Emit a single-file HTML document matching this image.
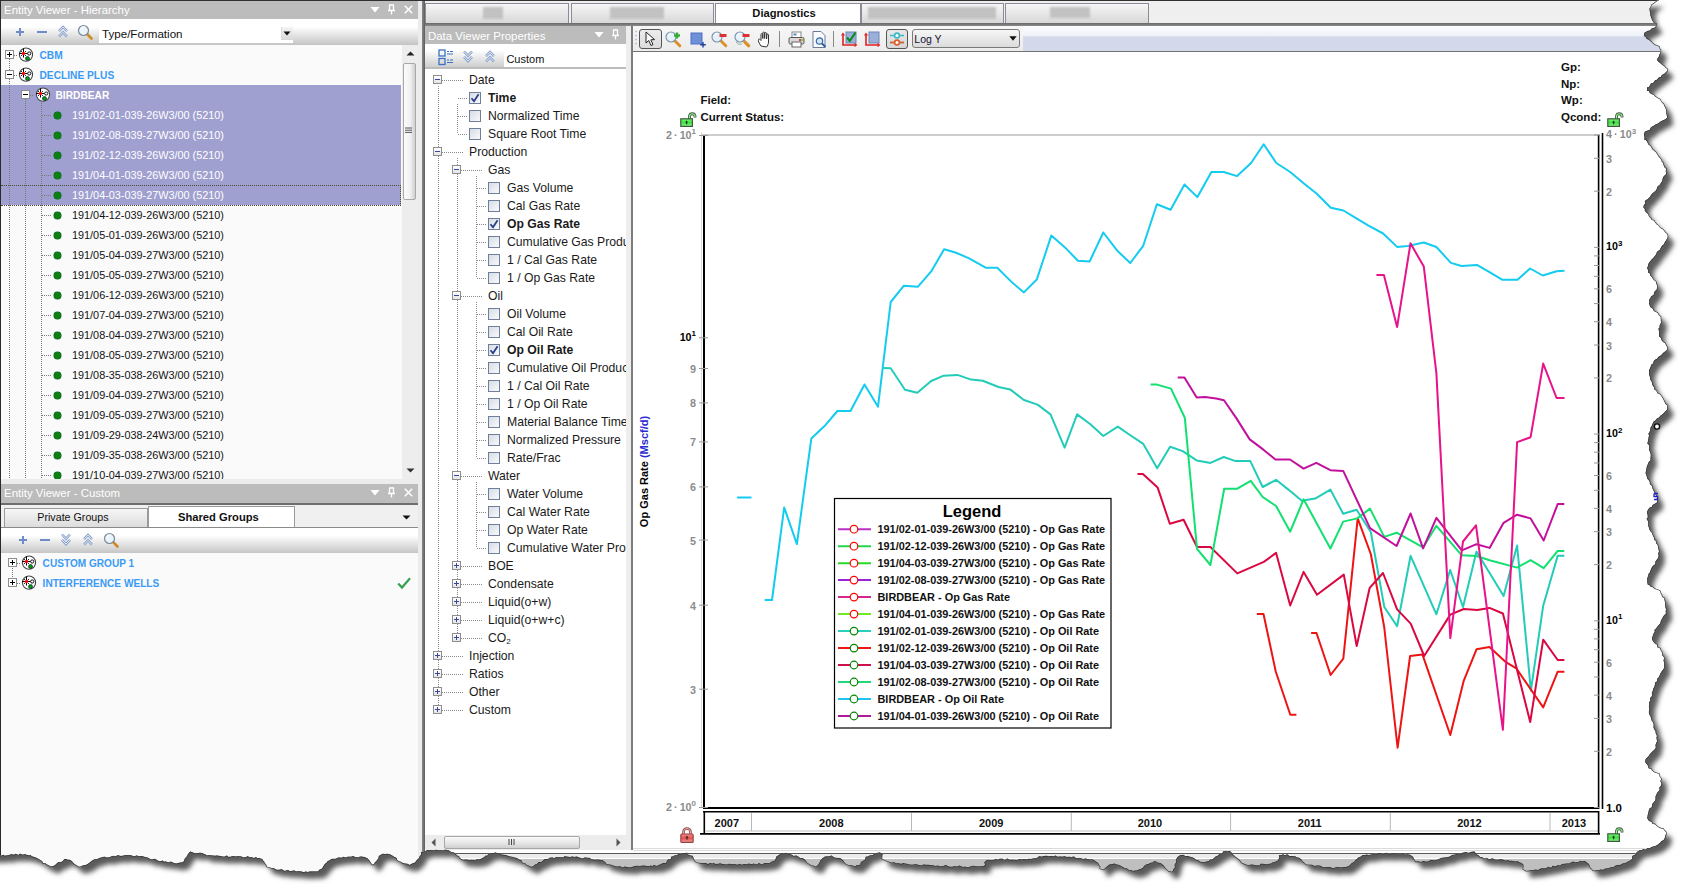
<!DOCTYPE html><html><head><meta charset="utf-8"><style>
html,body{margin:0;padding:0;background:#fff;}
body{width:1690px;height:894px;position:relative;overflow:hidden;font-family:"Liberation Sans", sans-serif;}
.t{position:absolute;white-space:nowrap;font-family:"Liberation Sans", sans-serif;}
svg{overflow:visible}
</style></head><body>
<div style="position:absolute;left:0px;top:0px;width:1690px;height:1px;background:#303030"></div>
<div style="position:absolute;left:0px;top:0px;width:1px;height:894px;background:#2a2a2a"></div>
<div style="position:absolute;left:1px;top:44.5px;width:2px;height:850px;background:linear-gradient(90deg,#606060,#8a8a90)"></div>
<div style="position:absolute;left:1px;top:1px;width:417px;height:17.5px;background:#bcbcbc"></div><div class="t " style="left:4px;top:1.8px;color:#fff;font-size:11.45px;line-height:16px">Entity Viewer - Hierarchy</div><svg style="position:absolute;left:370px;top:6px" width="10" height="8"><path d="M0.5 1 H9.5 L5 6.5Z" fill="#fff"/></svg><svg style="position:absolute;left:387px;top:4px" width="9" height="11"><path d="M2 1h5M2.5 1v5.5M6.5 1v5.5M1 6.5h7M4.5 6.5v4" stroke="#fff" stroke-width="1.3" fill="none"/></svg><svg style="position:absolute;left:404px;top:5px" width="9" height="9"><path d="M0.8 0.8L8.2 8.2M8.2 0.8L0.8 8.2" stroke="#fff" stroke-width="1.5"/></svg>
<div style="position:absolute;left:1px;top:18.5px;width:417px;height:26px;background:linear-gradient(#fff 0,#fff 30%,#c4c4c4 100%)"></div>
<svg style="position:absolute;left:15px;top:27px" width="10" height="10"><path d="M5 1v8M1 5h8" stroke="#6d8cc8" stroke-width="2"/></svg>
<svg style="position:absolute;left:36px;top:27px" width="12" height="10"><path d="M1 5h10" stroke="#6d8cc8" stroke-width="2"/></svg>
<svg style="position:absolute;left:58px;top:25px" width="10" height="14"><path d="M1 6.2 L5 2 L9 6.2 M1 11.6 L5 7.4 L9 11.6" stroke="#86a0cc" stroke-width="2.5" fill="none"/><path d="M1 6.2 L5 2 L9 6.2 M1 11.6 L5 7.4 L9 11.6" stroke="#eef0f4" stroke-width="0.9" fill="none"/></svg>
<svg style="position:absolute;left:77px;top:24px" width="16" height="16" viewBox="0 0 16 16"><path d="M9.5 9.5 L14.5 14.5" stroke="#d08a20" stroke-width="2.6" stroke-linecap="round"/><circle cx="6.5" cy="6.5" r="5" fill="#eaf4fb" stroke="#7a8a9a" stroke-width="1.2"/><path d="M3.8 5.5 A3 3 0 0 1 6.5 3.2" stroke="#fff" stroke-width="1.2" fill="none"/></svg>
<div style="position:absolute;left:99px;top:24px;width:194px;height:19px;background:#fff"></div>
<div class="t " style="left:102px;top:25px;font-size:11.6px;line-height:17px;color:#111">Type/Formation</div>
<div style="position:absolute;left:281px;top:27px;width:11px;height:13px;background:linear-gradient(#f4f4f4,#d8d8d8);border-left:1px solid #ddd"></div>
<svg style="position:absolute;left:283px;top:31px" width="8" height="5"><path d="M0.5 0.5H7.5L4 4.5Z" fill="#111"/></svg>
<div style="position:absolute;left:1px;top:44.5px;width:401px;height:434px;background:#fafafa"></div>
<div style="position:absolute;left:1px;top:85px;width:400px;height:120px;background:#a0a0d0"></div>
<div style="position:absolute;left:1px;top:185px;width:399px;height:18.5px;border:1px dotted #4a4a30;border-left:none"></div>
<div style="position:absolute;left:401.5px;top:44.5px;width:16.5px;height:434px;background:#ededed"></div>
<svg style="position:absolute;left:406px;top:51px" width="9" height="5"><path d="M0.5 4.5L4.5 0.5L8.5 4.5Z" fill="#222"/></svg>
<div style="position:absolute;left:402.5px;top:63.3px;width:13.5px;height:137px;background:linear-gradient(90deg,#fbfbfb 0,#f2f2f2 55%,#cfcfcf 100%);border:1px solid #a8a8a8;border-radius:2px;box-sizing:border-box"></div>
<svg style="position:absolute;left:404px;top:127px" width="9" height="7"><path d="M1 1h7M1 3.2h7M1 5.4h7" stroke="#555" stroke-width="1"/></svg>
<svg style="position:absolute;left:406px;top:468px" width="9" height="5"><path d="M0.5 0.5L4.5 4.5L8.5 0.5Z" fill="#333"/></svg>
<div style="position:absolute;left:418px;top:1px;width:4px;height:893px;background:#ececec"></div>
<div style="position:absolute;left:422px;top:1px;width:3px;height:893px;background:linear-gradient(90deg,#8a8a8a,#5c5c5c)"></div>
<div style="position:absolute;left:9px;top:59px;width:1px;height:24px;background:repeating-linear-gradient(180deg,#7a7a7a 0 1px,transparent 1px 2px)"></div>
<div style="position:absolute;left:9px;top:79px;width:1px;height:400px;background:repeating-linear-gradient(180deg,#7a7a7a 0 1px,transparent 1px 2px)"></div>
<div style="position:absolute;left:25px;top:99px;width:1px;height:380px;background:repeating-linear-gradient(180deg,#7a7a7a 0 1px,transparent 1px 2px)"></div>
<div style="position:absolute;left:41px;top:103px;width:1px;height:376px;background:repeating-linear-gradient(180deg,#7a7a7a 0 1px,transparent 1px 2px)"></div>
<div style="position:absolute;left:5px;top:50.3px;width:7px;height:7px;border:1px solid #8e8e8e;background:#fff"><div style="position:absolute;left:1px;top:3px;width:5px;height:1px;background:#000"></div><div style="position:absolute;left:3px;top:1px;width:1px;height:5px;background:#000"></div></div>
<div style="position:absolute;left:14px;top:54.8px;width:4px;height:1px;background:repeating-linear-gradient(90deg,#7a7a7a 0 1px,transparent 1px 2px)"></div>
<svg style="position:absolute;left:18px;top:47px" width="15" height="15" viewBox="0 0 15 15"><circle cx="8" cy="7.6" r="6.6" fill="#fff" stroke="#444" stroke-width="1.1"/><path d="M5.5 1.5v9M1.2 6.5h8.6" stroke="#000" stroke-width="1"/><path d="M3.5 4.5h0.01M7.5 4.5h0.01M3.5 8.5h0.01M7.5 8.5h0.01" stroke="#000" stroke-width="1.1" stroke-linecap="round"/><circle cx="5.5" cy="6.5" r="1.7" fill="#f00"/><circle cx="11.2" cy="6.5" r="1.6" fill="#fff" stroke="#111" stroke-width="1"/><circle cx="9.5" cy="11.5" r="2" fill="#00a000" stroke="#102040" stroke-width="0.7"/></svg>
<div class="t " style="left:39.5px;top:48.5px;font-size:10.2px;font-weight:bold;color:#3a9af5;line-height:14px">CBM</div>
<div style="position:absolute;left:5px;top:70.3px;width:7px;height:7px;border:1px solid #8e8e8e;background:#fff"><div style="position:absolute;left:1px;top:3px;width:5px;height:1px;background:#000"></div></div>
<div style="position:absolute;left:14px;top:74.8px;width:4px;height:1px;background:repeating-linear-gradient(90deg,#7a7a7a 0 1px,transparent 1px 2px)"></div>
<svg style="position:absolute;left:18px;top:67px" width="15" height="15" viewBox="0 0 15 15"><circle cx="8" cy="7.6" r="6.6" fill="#fff" stroke="#444" stroke-width="1.1"/><path d="M5.5 1.5v9M1.2 6.5h8.6" stroke="#000" stroke-width="1"/><path d="M3.5 4.5h0.01M7.5 4.5h0.01M3.5 8.5h0.01M7.5 8.5h0.01" stroke="#000" stroke-width="1.1" stroke-linecap="round"/><circle cx="5.5" cy="6.5" r="1.7" fill="#f00"/><circle cx="11.2" cy="6.5" r="1.6" fill="#fff" stroke="#111" stroke-width="1"/><circle cx="9.5" cy="11.5" r="2" fill="#00a000" stroke="#102040" stroke-width="0.7"/></svg>
<div class="t " style="left:39.5px;top:68.5px;font-size:10.2px;font-weight:bold;color:#3a9af5;line-height:14px">DECLINE PLUS</div>
<div style="position:absolute;left:21px;top:90.3px;width:7px;height:7px;border:1px solid #8e8e8e;background:#fff"><div style="position:absolute;left:1px;top:3px;width:5px;height:1px;background:#000"></div></div>
<div style="position:absolute;left:30px;top:94.8px;width:4px;height:1px;background:repeating-linear-gradient(90deg,#7a7a7a 0 1px,transparent 1px 2px)"></div>
<svg style="position:absolute;left:35px;top:87px" width="15" height="15" viewBox="0 0 15 15"><circle cx="8" cy="7.6" r="6.6" fill="#fff" stroke="#444" stroke-width="1.1"/><path d="M5.5 1.5v9M1.2 6.5h8.6" stroke="#000" stroke-width="1"/><path d="M3.5 4.5h0.01M7.5 4.5h0.01M3.5 8.5h0.01M7.5 8.5h0.01" stroke="#000" stroke-width="1.1" stroke-linecap="round"/><circle cx="5.5" cy="6.5" r="1.7" fill="#f00"/><circle cx="11.2" cy="6.5" r="1.6" fill="#fff" stroke="#111" stroke-width="1"/><circle cx="9.5" cy="11.5" r="2" fill="#00a000" stroke="#102040" stroke-width="0.7"/></svg>
<div class="t " style="left:55.5px;top:88.5px;font-size:10.2px;font-weight:bold;color:#fff;line-height:14px">BIRDBEAR</div>
<div style="position:absolute;left:42px;top:114.8px;width:10px;height:1px;background:repeating-linear-gradient(90deg,#7a7a7a 0 1px,transparent 1px 2px)"></div>
<div style="position:absolute;left:54px;top:111.8px;width:7px;height:7px;border-radius:50%;background:#0f800f;box-shadow:0 0 0 0.5px #063"></div>
<div class="t " style="left:72px;top:108.3px;font-size:10.85px;color:#fff;line-height:15px">191/02-01-039-26W3/00 (5210)</div>
<div style="position:absolute;left:42px;top:134.8px;width:10px;height:1px;background:repeating-linear-gradient(90deg,#7a7a7a 0 1px,transparent 1px 2px)"></div>
<div style="position:absolute;left:54px;top:131.8px;width:7px;height:7px;border-radius:50%;background:#0f800f;box-shadow:0 0 0 0.5px #063"></div>
<div class="t " style="left:72px;top:128.3px;font-size:10.85px;color:#fff;line-height:15px">191/02-08-039-27W3/00 (5210)</div>
<div style="position:absolute;left:42px;top:154.8px;width:10px;height:1px;background:repeating-linear-gradient(90deg,#7a7a7a 0 1px,transparent 1px 2px)"></div>
<div style="position:absolute;left:54px;top:151.8px;width:7px;height:7px;border-radius:50%;background:#0f800f;box-shadow:0 0 0 0.5px #063"></div>
<div class="t " style="left:72px;top:148.3px;font-size:10.85px;color:#fff;line-height:15px">191/02-12-039-26W3/00 (5210)</div>
<div style="position:absolute;left:42px;top:174.8px;width:10px;height:1px;background:repeating-linear-gradient(90deg,#7a7a7a 0 1px,transparent 1px 2px)"></div>
<div style="position:absolute;left:54px;top:171.8px;width:7px;height:7px;border-radius:50%;background:#0f800f;box-shadow:0 0 0 0.5px #063"></div>
<div class="t " style="left:72px;top:168.3px;font-size:10.85px;color:#fff;line-height:15px">191/04-01-039-26W3/00 (5210)</div>
<div style="position:absolute;left:42px;top:194.8px;width:10px;height:1px;background:repeating-linear-gradient(90deg,#7a7a7a 0 1px,transparent 1px 2px)"></div>
<div style="position:absolute;left:54px;top:191.8px;width:7px;height:7px;border-radius:50%;background:#0f800f;box-shadow:0 0 0 0.5px #063"></div>
<div class="t " style="left:72px;top:188.3px;font-size:10.85px;color:#fff;line-height:15px">191/04-03-039-27W3/00 (5210)</div>
<div style="position:absolute;left:42px;top:214.8px;width:10px;height:1px;background:repeating-linear-gradient(90deg,#7a7a7a 0 1px,transparent 1px 2px)"></div>
<div style="position:absolute;left:54px;top:211.8px;width:7px;height:7px;border-radius:50%;background:#0f800f;box-shadow:0 0 0 0.5px #063"></div>
<div class="t " style="left:72px;top:208.3px;font-size:10.85px;color:#111;line-height:15px">191/04-12-039-26W3/00 (5210)</div>
<div style="position:absolute;left:42px;top:234.8px;width:10px;height:1px;background:repeating-linear-gradient(90deg,#7a7a7a 0 1px,transparent 1px 2px)"></div>
<div style="position:absolute;left:54px;top:231.8px;width:7px;height:7px;border-radius:50%;background:#0f800f;box-shadow:0 0 0 0.5px #063"></div>
<div class="t " style="left:72px;top:228.3px;font-size:10.85px;color:#111;line-height:15px">191/05-01-039-26W3/00 (5210)</div>
<div style="position:absolute;left:42px;top:254.8px;width:10px;height:1px;background:repeating-linear-gradient(90deg,#7a7a7a 0 1px,transparent 1px 2px)"></div>
<div style="position:absolute;left:54px;top:251.8px;width:7px;height:7px;border-radius:50%;background:#0f800f;box-shadow:0 0 0 0.5px #063"></div>
<div class="t " style="left:72px;top:248.3px;font-size:10.85px;color:#111;line-height:15px">191/05-04-039-27W3/00 (5210)</div>
<div style="position:absolute;left:42px;top:274.8px;width:10px;height:1px;background:repeating-linear-gradient(90deg,#7a7a7a 0 1px,transparent 1px 2px)"></div>
<div style="position:absolute;left:54px;top:271.8px;width:7px;height:7px;border-radius:50%;background:#0f800f;box-shadow:0 0 0 0.5px #063"></div>
<div class="t " style="left:72px;top:268.3px;font-size:10.85px;color:#111;line-height:15px">191/05-05-039-27W3/00 (5210)</div>
<div style="position:absolute;left:42px;top:294.8px;width:10px;height:1px;background:repeating-linear-gradient(90deg,#7a7a7a 0 1px,transparent 1px 2px)"></div>
<div style="position:absolute;left:54px;top:291.8px;width:7px;height:7px;border-radius:50%;background:#0f800f;box-shadow:0 0 0 0.5px #063"></div>
<div class="t " style="left:72px;top:288.3px;font-size:10.85px;color:#111;line-height:15px">191/06-12-039-26W3/00 (5210)</div>
<div style="position:absolute;left:42px;top:314.8px;width:10px;height:1px;background:repeating-linear-gradient(90deg,#7a7a7a 0 1px,transparent 1px 2px)"></div>
<div style="position:absolute;left:54px;top:311.8px;width:7px;height:7px;border-radius:50%;background:#0f800f;box-shadow:0 0 0 0.5px #063"></div>
<div class="t " style="left:72px;top:308.3px;font-size:10.85px;color:#111;line-height:15px">191/07-04-039-27W3/00 (5210)</div>
<div style="position:absolute;left:42px;top:334.8px;width:10px;height:1px;background:repeating-linear-gradient(90deg,#7a7a7a 0 1px,transparent 1px 2px)"></div>
<div style="position:absolute;left:54px;top:331.8px;width:7px;height:7px;border-radius:50%;background:#0f800f;box-shadow:0 0 0 0.5px #063"></div>
<div class="t " style="left:72px;top:328.3px;font-size:10.85px;color:#111;line-height:15px">191/08-04-039-27W3/00 (5210)</div>
<div style="position:absolute;left:42px;top:354.8px;width:10px;height:1px;background:repeating-linear-gradient(90deg,#7a7a7a 0 1px,transparent 1px 2px)"></div>
<div style="position:absolute;left:54px;top:351.8px;width:7px;height:7px;border-radius:50%;background:#0f800f;box-shadow:0 0 0 0.5px #063"></div>
<div class="t " style="left:72px;top:348.3px;font-size:10.85px;color:#111;line-height:15px">191/08-05-039-27W3/00 (5210)</div>
<div style="position:absolute;left:42px;top:374.8px;width:10px;height:1px;background:repeating-linear-gradient(90deg,#7a7a7a 0 1px,transparent 1px 2px)"></div>
<div style="position:absolute;left:54px;top:371.8px;width:7px;height:7px;border-radius:50%;background:#0f800f;box-shadow:0 0 0 0.5px #063"></div>
<div class="t " style="left:72px;top:368.3px;font-size:10.85px;color:#111;line-height:15px">191/08-35-038-26W3/00 (5210)</div>
<div style="position:absolute;left:42px;top:394.8px;width:10px;height:1px;background:repeating-linear-gradient(90deg,#7a7a7a 0 1px,transparent 1px 2px)"></div>
<div style="position:absolute;left:54px;top:391.8px;width:7px;height:7px;border-radius:50%;background:#0f800f;box-shadow:0 0 0 0.5px #063"></div>
<div class="t " style="left:72px;top:388.3px;font-size:10.85px;color:#111;line-height:15px">191/09-04-039-27W3/00 (5210)</div>
<div style="position:absolute;left:42px;top:414.8px;width:10px;height:1px;background:repeating-linear-gradient(90deg,#7a7a7a 0 1px,transparent 1px 2px)"></div>
<div style="position:absolute;left:54px;top:411.8px;width:7px;height:7px;border-radius:50%;background:#0f800f;box-shadow:0 0 0 0.5px #063"></div>
<div class="t " style="left:72px;top:408.3px;font-size:10.85px;color:#111;line-height:15px">191/09-05-039-27W3/00 (5210)</div>
<div style="position:absolute;left:42px;top:434.8px;width:10px;height:1px;background:repeating-linear-gradient(90deg,#7a7a7a 0 1px,transparent 1px 2px)"></div>
<div style="position:absolute;left:54px;top:431.8px;width:7px;height:7px;border-radius:50%;background:#0f800f;box-shadow:0 0 0 0.5px #063"></div>
<div class="t " style="left:72px;top:428.3px;font-size:10.85px;color:#111;line-height:15px">191/09-29-038-24W3/00 (5210)</div>
<div style="position:absolute;left:42px;top:454.8px;width:10px;height:1px;background:repeating-linear-gradient(90deg,#7a7a7a 0 1px,transparent 1px 2px)"></div>
<div style="position:absolute;left:54px;top:451.8px;width:7px;height:7px;border-radius:50%;background:#0f800f;box-shadow:0 0 0 0.5px #063"></div>
<div class="t " style="left:72px;top:448.3px;font-size:10.85px;color:#111;line-height:15px">191/09-35-038-26W3/00 (5210)</div>
<div style="position:absolute;left:42px;top:474.8px;width:10px;height:1px;background:repeating-linear-gradient(90deg,#7a7a7a 0 1px,transparent 1px 2px)"></div>
<div style="position:absolute;left:54px;top:471.8px;width:7px;height:7px;border-radius:50%;background:#0f800f;box-shadow:0 0 0 0.5px #063"></div>
<div class="t " style="left:72px;top:468.3px;font-size:10.85px;color:#111;line-height:15px">191/10-04-039-27W3/00 (5210)</div>
<div style="position:absolute;left:1px;top:478.5px;width:417px;height:5px;background:#ececec"></div>
<div style="position:absolute;left:1px;top:483.5px;width:416.5px;height:19.5px;background:#bcbcbc"></div><div class="t " style="left:4px;top:485.0px;color:#fff;font-size:11.45px;line-height:16px">Entity Viewer - Custom</div><svg style="position:absolute;left:369.5px;top:488.5px" width="10" height="8"><path d="M0.5 1 H9.5 L5 6.5Z" fill="#fff"/></svg><svg style="position:absolute;left:386.5px;top:486.5px" width="9" height="11"><path d="M2 1h5M2.5 1v5.5M6.5 1v5.5M1 6.5h7M4.5 6.5v4" stroke="#fff" stroke-width="1.3" fill="none"/></svg><svg style="position:absolute;left:403.5px;top:487.5px" width="9" height="9"><path d="M0.8 0.8L8.2 8.2M8.2 0.8L0.8 8.2" stroke="#fff" stroke-width="1.5"/></svg>
<div style="position:absolute;left:1px;top:503px;width:417px;height:2px;background:#6e6e6e"></div>
<div style="position:absolute;left:1px;top:505px;width:417px;height:22.5px;background:#f0f0f0"></div>
<div style="position:absolute;left:4px;top:507.5px;width:144px;height:20px;background:linear-gradient(#f7f7f7,#dadada);border:1px solid #9a9a9a;border-bottom:none;box-sizing:border-box"></div>
<div style="position:absolute;left:148px;top:506.3px;width:146.5px;height:22px;background:#fff;border:1px solid #9a9a9a;border-bottom:none;box-sizing:border-box"></div>
<div class="t " style="left:37.3px;top:510px;font-size:10.7px;color:#111;line-height:15px">Private Groups</div>
<div class="t " style="left:178px;top:510px;font-size:11.2px;font-weight:bold;color:#111;line-height:15px">Shared Groups</div>
<svg style="position:absolute;left:402px;top:515px" width="9" height="5"><path d="M0.5 0.5H8.5L4.5 4.5Z" fill="#111"/></svg>
<div style="position:absolute;left:1px;top:527.2px;width:417px;height:1px;background:#8a8a8a"></div>
<div style="position:absolute;left:1px;top:528.2px;width:417px;height:24.6px;background:linear-gradient(#fff 0,#fff 30%,#c6c6c6 100%)"></div>
<svg style="position:absolute;left:18px;top:535px" width="10" height="10"><path d="M5 1v8M1 5h8" stroke="#6d8cc8" stroke-width="2"/></svg>
<svg style="position:absolute;left:39px;top:535px" width="12" height="10"><path d="M1 5h10" stroke="#6d8cc8" stroke-width="2"/></svg>
<svg style="position:absolute;left:61px;top:533px" width="10" height="14"><path d="M1 1.5 L5 5.7 L9 1.5 M1 6.9 L5 11.1 L9 6.9" stroke="#86a0cc" stroke-width="2.5" fill="none"/><path d="M1 1.5 L5 5.7 L9 1.5 M1 6.9 L5 11.1 L9 6.9" stroke="#eef0f4" stroke-width="0.9" fill="none"/></svg>
<svg style="position:absolute;left:83px;top:533px" width="10" height="14"><path d="M1 6.2 L5 2 L9 6.2 M1 11.6 L5 7.4 L9 11.6" stroke="#86a0cc" stroke-width="2.5" fill="none"/><path d="M1 6.2 L5 2 L9 6.2 M1 11.6 L5 7.4 L9 11.6" stroke="#eef0f4" stroke-width="0.9" fill="none"/></svg>
<svg style="position:absolute;left:103px;top:532px" width="16" height="16" viewBox="0 0 16 16"><path d="M9.5 9.5 L14.5 14.5" stroke="#d08a20" stroke-width="2.6" stroke-linecap="round"/><circle cx="6.5" cy="6.5" r="5" fill="#eaf4fb" stroke="#7a8a9a" stroke-width="1.2"/><path d="M3.8 5.5 A3 3 0 0 1 6.5 3.2" stroke="#fff" stroke-width="1.2" fill="none"/></svg>
<div style="position:absolute;left:1px;top:552.8px;width:417px;height:342px;background:#fafafa"></div>
<div style="position:absolute;left:8px;top:558.0px;width:7px;height:7px;border:1px solid #8e8e8e;background:#fff"><div style="position:absolute;left:1px;top:3px;width:5px;height:1px;background:#000"></div><div style="position:absolute;left:3px;top:1px;width:1px;height:5px;background:#000"></div></div>
<div style="position:absolute;left:17px;top:562.5px;width:4px;height:1px;background:repeating-linear-gradient(90deg,#7a7a7a 0 1px,transparent 1px 2px)"></div>
<svg style="position:absolute;left:21px;top:555px" width="15" height="15" viewBox="0 0 15 15"><circle cx="8" cy="7.6" r="6.6" fill="#fff" stroke="#444" stroke-width="1.1"/><path d="M5.5 1.5v9M1.2 6.5h8.6" stroke="#000" stroke-width="1"/><path d="M3.5 4.5h0.01M7.5 4.5h0.01M3.5 8.5h0.01M7.5 8.5h0.01" stroke="#000" stroke-width="1.1" stroke-linecap="round"/><circle cx="5.5" cy="6.5" r="1.7" fill="#f00"/><circle cx="11.2" cy="6.5" r="1.6" fill="#fff" stroke="#111" stroke-width="1"/><circle cx="9.5" cy="11.5" r="2" fill="#00a000" stroke="#102040" stroke-width="0.7"/></svg>
<div class="t " style="left:42.6px;top:556.5px;font-size:10.1px;font-weight:bold;color:#3a9af5;line-height:14px">CUSTOM GROUP 1</div>
<div style="position:absolute;left:8px;top:578.1px;width:7px;height:7px;border:1px solid #8e8e8e;background:#fff"><div style="position:absolute;left:1px;top:3px;width:5px;height:1px;background:#000"></div><div style="position:absolute;left:3px;top:1px;width:1px;height:5px;background:#000"></div></div>
<div style="position:absolute;left:17px;top:582.6px;width:4px;height:1px;background:repeating-linear-gradient(90deg,#7a7a7a 0 1px,transparent 1px 2px)"></div>
<svg style="position:absolute;left:21px;top:575px" width="15" height="15" viewBox="0 0 15 15"><circle cx="8" cy="7.6" r="6.6" fill="#fff" stroke="#444" stroke-width="1.1"/><path d="M5.5 1.5v9M1.2 6.5h8.6" stroke="#000" stroke-width="1"/><path d="M3.5 4.5h0.01M7.5 4.5h0.01M3.5 8.5h0.01M7.5 8.5h0.01" stroke="#000" stroke-width="1.1" stroke-linecap="round"/><circle cx="5.5" cy="6.5" r="1.7" fill="#f00"/><circle cx="11.2" cy="6.5" r="1.6" fill="#fff" stroke="#111" stroke-width="1"/><circle cx="9.5" cy="11.5" r="2" fill="#00a000" stroke="#102040" stroke-width="0.7"/></svg>
<div class="t " style="left:42.6px;top:576.6px;font-size:10.1px;font-weight:bold;color:#3a9af5;line-height:14px">INTERFERENCE WELLS</div>
<div style="position:absolute;left:12px;top:568px;width:1px;height:10px;background:repeating-linear-gradient(180deg,#7a7a7a 0 1px,transparent 1px 2px)"></div>
<svg style="position:absolute;left:397px;top:577px" width="14" height="12"><path d="M1.2 6.5 L5 10.5 L13 1.2" stroke="#3aa050" stroke-width="2.2" fill="none"/></svg>
<div style="position:absolute;left:425px;top:1px;width:1235px;height:22.5px;background:#efefef"></div>
<div style="position:absolute;left:425.3px;top:3px;width:143.8px;height:20.5px;background:linear-gradient(#f6f6f6,#d6d6d6);border:1px solid #8c8c98;border-bottom:none;box-sizing:border-box"></div>
<div style="position:absolute;left:483px;top:6.5px;width:20px;height:12px;background:#c2c2c2;filter:blur(1.2px)"></div>
<div style="position:absolute;left:570.5px;top:3px;width:143.29999999999995px;height:20.5px;background:linear-gradient(#f6f6f6,#d6d6d6);border:1px solid #8c8c98;border-bottom:none;box-sizing:border-box"></div>
<div style="position:absolute;left:610px;top:7px;width:54px;height:11.5px;background:#c2c2c2;filter:blur(1.2px)"></div>
<div style="position:absolute;left:714.5px;top:2.5px;width:146.10000000000002px;height:21px;background:#fff;border:1px solid #8c8c98;border-bottom:none;box-sizing:border-box"></div>
<div style="position:absolute;left:860.6px;top:3px;width:143.39999999999998px;height:20.5px;background:linear-gradient(#f6f6f6,#d6d6d6);border:1px solid #8c8c98;border-bottom:none;box-sizing:border-box"></div>
<div style="position:absolute;left:868px;top:6.5px;width:128px;height:12px;background:#c2c2c2;filter:blur(1.2px)"></div>
<div style="position:absolute;left:1005.4px;top:3px;width:143.60000000000002px;height:20.5px;background:linear-gradient(#f6f6f6,#d6d6d6);border:1px solid #8c8c98;border-bottom:none;box-sizing:border-box"></div>
<div style="position:absolute;left:1050px;top:7px;width:40px;height:11px;background:#c2c2c2;filter:blur(1.2px)"></div>
<div class="t " style="left:752.3px;top:5.5px;font-size:11.2px;font-weight:bold;color:#111;line-height:15px">Diagnostics</div>
<div style="position:absolute;left:425px;top:23px;width:1235px;height:2.6px;background:linear-gradient(#6a6a6a,#8a8a8a)"></div>
<div style="position:absolute;left:425px;top:25.5px;width:200.5px;height:18.8px;background:#bcbcbc"></div><div class="t " style="left:428px;top:27.8px;color:#fff;font-size:11.45px;line-height:16px">Data Viewer Properties</div><svg style="position:absolute;left:593.5px;top:30.5px" width="10" height="8"><path d="M0.5 1 H9.5 L5 6.5Z" fill="#fff"/></svg><svg style="position:absolute;left:610.5px;top:28.5px" width="9" height="11"><path d="M2 1h5M2.5 1v5.5M6.5 1v5.5M1 6.5h7M4.5 6.5v4" stroke="#fff" stroke-width="1.3" fill="none"/></svg>
<div style="position:absolute;left:425px;top:44.3px;width:200.5px;height:25px;background:linear-gradient(#fff 0,#fff 25%,#c8c8c8 100%)"></div>
<div style="position:absolute;left:504px;top:45.6px;width:121.5px;height:21.2px;background:#fff"></div>
<div style="position:absolute;left:425px;top:66.8px;width:200.5px;height:2.6px;background:#bdbdbd"></div>
<div class="t " style="left:506.4px;top:52px;font-size:11px;color:#111;line-height:15px">Custom</div>
<svg style="position:absolute;left:438px;top:49px" width="16" height="17"><rect x="1" y="1" width="6" height="6" fill="none" stroke="#3a72c0" stroke-width="1.3"/><rect x="1" y="9.5" width="6" height="6" fill="none" stroke="#3a72c0" stroke-width="1.3"/><path d="M9 2.5h2M12 2.5h3M9 5h6M9 11h2M12 11h3M9 13.5h6" stroke="#3a72c0" stroke-width="1"/></svg>
<svg style="position:absolute;left:462.5px;top:50px" width="10" height="14"><path d="M1 1.5 L5 5.7 L9 1.5 M1 6.9 L5 11.1 L9 6.9" stroke="#86a0cc" stroke-width="2.5" fill="none"/><path d="M1 1.5 L5 5.7 L9 1.5 M1 6.9 L5 11.1 L9 6.9" stroke="#eef0f4" stroke-width="0.9" fill="none"/></svg>
<svg style="position:absolute;left:484.5px;top:50px" width="10" height="14"><path d="M1 6.2 L5 2 L9 6.2 M1 11.6 L5 7.4 L9 11.6" stroke="#86a0cc" stroke-width="2.5" fill="none"/><path d="M1 6.2 L5 2 L9 6.2 M1 11.6 L5 7.4 L9 11.6" stroke="#eef0f4" stroke-width="0.9" fill="none"/></svg>
<div style="position:absolute;left:425px;top:69.4px;width:200.5px;height:765px;background:#fff"></div>
<div style="position:absolute;left:625.5px;top:25.5px;width:5px;height:825px;background:#ededed"></div>
<div style="position:absolute;left:630.5px;top:25.5px;width:2px;height:825px;background:#7c7c7c"></div>
<div style="position:absolute;left:437.5px;top:86px;width:1px;height:624px;background:repeating-linear-gradient(180deg,#8a8a8a 0 1px,transparent 1px 2px)"></div>
<div style="position:absolute;left:456.5px;top:104px;width:1px;height:30px;background:repeating-linear-gradient(180deg,#8a8a8a 0 1px,transparent 1px 2px)"></div>
<div style="position:absolute;left:456.5px;top:158px;width:1px;height:480px;background:repeating-linear-gradient(180deg,#8a8a8a 0 1px,transparent 1px 2px)"></div>
<div style="position:absolute;left:475.5px;top:176px;width:1px;height:102px;background:repeating-linear-gradient(180deg,#8a8a8a 0 1px,transparent 1px 2px)"></div>
<div style="position:absolute;left:475.5px;top:302px;width:1px;height:156px;background:repeating-linear-gradient(180deg,#8a8a8a 0 1px,transparent 1px 2px)"></div>
<div style="position:absolute;left:475.5px;top:482px;width:1px;height:66px;background:repeating-linear-gradient(180deg,#8a8a8a 0 1px,transparent 1px 2px)"></div>
<div style="position:absolute;left:425px;top:69.4px;width:200.5px;height:765px;overflow:hidden">
<div style="position:absolute;left:-425px;top:-69.4px"><div style="position:absolute;left:433px;top:75.0px;width:7px;height:7px;border:1px solid #8e8e8e;background:linear-gradient(#fff,#e4e4e4)"><div style="position:absolute;left:1px;top:3px;width:5px;height:1px;background:#3848a0"></div></div></div>
<div style="position:absolute;left:-425px;top:-69.4px"><div style="position:absolute;left:442px;top:79.5px;width:22px;height:1px;background:repeating-linear-gradient(90deg,#8a8a8a 0 1px,transparent 1px 2px)"></div></div>
<div style="position:absolute;left:-425px;top:-69.4px"><div class="t " style="left:469px;top:71.5px;font-size:12.2px;color:#1a1a1a;line-height:16px">Date</div></div>
<div style="position:absolute;left:-425px;top:-69.4px"><div style="position:absolute;left:457.5px;top:97.5px;width:10.5px;height:1px;background:repeating-linear-gradient(90deg,#8a8a8a 0 1px,transparent 1px 2px)"></div></div>
<div style="position:absolute;left:-425px;top:-69.4px"><div style="position:absolute;left:469px;top:91.5px;width:10px;height:10px;border:1px solid #6f7f9a;background:linear-gradient(135deg,#d7dde6,#f8f9fb)"><svg style="position:absolute;left:0;top:0" width="10" height="10"><path d="M1.5 5.2 L4 8.3 L8.6 1.2" stroke="#2a3f8a" stroke-width="1.8" fill="none"/></svg></div></div>
<div style="position:absolute;left:-425px;top:-69.4px"><div class="t " style="left:488px;top:89.5px;font-size:12.2px;color:#1a1a1a;font-weight:bold;line-height:16px">Time</div></div>
<div style="position:absolute;left:-425px;top:-69.4px"><div style="position:absolute;left:457.5px;top:115.5px;width:10.5px;height:1px;background:repeating-linear-gradient(90deg,#8a8a8a 0 1px,transparent 1px 2px)"></div></div>
<div style="position:absolute;left:-425px;top:-69.4px"><div style="position:absolute;left:469px;top:109.5px;width:10px;height:10px;border:1px solid #6f7f9a;background:linear-gradient(135deg,#d7dde6,#f8f9fb)"></div></div>
<div style="position:absolute;left:-425px;top:-69.4px"><div class="t " style="left:488px;top:107.5px;font-size:12.2px;color:#1a1a1a;font-weight:normal;line-height:16px">Normalized Time</div></div>
<div style="position:absolute;left:-425px;top:-69.4px"><div style="position:absolute;left:457.5px;top:133.5px;width:10.5px;height:1px;background:repeating-linear-gradient(90deg,#8a8a8a 0 1px,transparent 1px 2px)"></div></div>
<div style="position:absolute;left:-425px;top:-69.4px"><div style="position:absolute;left:469px;top:127.5px;width:10px;height:10px;border:1px solid #6f7f9a;background:linear-gradient(135deg,#d7dde6,#f8f9fb)"></div></div>
<div style="position:absolute;left:-425px;top:-69.4px"><div class="t " style="left:488px;top:125.5px;font-size:12.2px;color:#1a1a1a;font-weight:normal;line-height:16px">Square Root Time</div></div>
<div style="position:absolute;left:-425px;top:-69.4px"><div style="position:absolute;left:433px;top:147.0px;width:7px;height:7px;border:1px solid #8e8e8e;background:linear-gradient(#fff,#e4e4e4)"><div style="position:absolute;left:1px;top:3px;width:5px;height:1px;background:#3848a0"></div></div></div>
<div style="position:absolute;left:-425px;top:-69.4px"><div style="position:absolute;left:442px;top:151.5px;width:22px;height:1px;background:repeating-linear-gradient(90deg,#8a8a8a 0 1px,transparent 1px 2px)"></div></div>
<div style="position:absolute;left:-425px;top:-69.4px"><div class="t " style="left:469px;top:143.5px;font-size:12.2px;color:#1a1a1a;line-height:16px">Production</div></div>
<div style="position:absolute;left:-425px;top:-69.4px"><div style="position:absolute;left:452px;top:165.0px;width:7px;height:7px;border:1px solid #8e8e8e;background:linear-gradient(#fff,#e4e4e4)"><div style="position:absolute;left:1px;top:3px;width:5px;height:1px;background:#3848a0"></div></div></div>
<div style="position:absolute;left:-425px;top:-69.4px"><div style="position:absolute;left:461px;top:169.5px;width:22px;height:1px;background:repeating-linear-gradient(90deg,#8a8a8a 0 1px,transparent 1px 2px)"></div></div>
<div style="position:absolute;left:-425px;top:-69.4px"><div class="t " style="left:488px;top:161.5px;font-size:12.2px;color:#1a1a1a;line-height:16px">Gas</div></div>
<div style="position:absolute;left:-425px;top:-69.4px"><div style="position:absolute;left:476.5px;top:187.5px;width:10.5px;height:1px;background:repeating-linear-gradient(90deg,#8a8a8a 0 1px,transparent 1px 2px)"></div></div>
<div style="position:absolute;left:-425px;top:-69.4px"><div style="position:absolute;left:488px;top:181.5px;width:10px;height:10px;border:1px solid #6f7f9a;background:linear-gradient(135deg,#d7dde6,#f8f9fb)"></div></div>
<div style="position:absolute;left:-425px;top:-69.4px"><div class="t " style="left:507px;top:179.5px;font-size:12.2px;color:#1a1a1a;font-weight:normal;line-height:16px">Gas Volume</div></div>
<div style="position:absolute;left:-425px;top:-69.4px"><div style="position:absolute;left:476.5px;top:205.5px;width:10.5px;height:1px;background:repeating-linear-gradient(90deg,#8a8a8a 0 1px,transparent 1px 2px)"></div></div>
<div style="position:absolute;left:-425px;top:-69.4px"><div style="position:absolute;left:488px;top:199.5px;width:10px;height:10px;border:1px solid #6f7f9a;background:linear-gradient(135deg,#d7dde6,#f8f9fb)"></div></div>
<div style="position:absolute;left:-425px;top:-69.4px"><div class="t " style="left:507px;top:197.5px;font-size:12.2px;color:#1a1a1a;font-weight:normal;line-height:16px">Cal Gas Rate</div></div>
<div style="position:absolute;left:-425px;top:-69.4px"><div style="position:absolute;left:476.5px;top:223.5px;width:10.5px;height:1px;background:repeating-linear-gradient(90deg,#8a8a8a 0 1px,transparent 1px 2px)"></div></div>
<div style="position:absolute;left:-425px;top:-69.4px"><div style="position:absolute;left:488px;top:217.5px;width:10px;height:10px;border:1px solid #6f7f9a;background:linear-gradient(135deg,#d7dde6,#f8f9fb)"><svg style="position:absolute;left:0;top:0" width="10" height="10"><path d="M1.5 5.2 L4 8.3 L8.6 1.2" stroke="#2a3f8a" stroke-width="1.8" fill="none"/></svg></div></div>
<div style="position:absolute;left:-425px;top:-69.4px"><div class="t " style="left:507px;top:215.5px;font-size:12.2px;color:#1a1a1a;font-weight:bold;line-height:16px">Op Gas Rate</div></div>
<div style="position:absolute;left:-425px;top:-69.4px"><div style="position:absolute;left:476.5px;top:241.5px;width:10.5px;height:1px;background:repeating-linear-gradient(90deg,#8a8a8a 0 1px,transparent 1px 2px)"></div></div>
<div style="position:absolute;left:-425px;top:-69.4px"><div style="position:absolute;left:488px;top:235.5px;width:10px;height:10px;border:1px solid #6f7f9a;background:linear-gradient(135deg,#d7dde6,#f8f9fb)"></div></div>
<div style="position:absolute;left:-425px;top:-69.4px"><div class="t " style="left:507px;top:233.5px;font-size:12.2px;color:#1a1a1a;font-weight:normal;line-height:16px">Cumulative Gas Production</div></div>
<div style="position:absolute;left:-425px;top:-69.4px"><div style="position:absolute;left:476.5px;top:259.5px;width:10.5px;height:1px;background:repeating-linear-gradient(90deg,#8a8a8a 0 1px,transparent 1px 2px)"></div></div>
<div style="position:absolute;left:-425px;top:-69.4px"><div style="position:absolute;left:488px;top:253.5px;width:10px;height:10px;border:1px solid #6f7f9a;background:linear-gradient(135deg,#d7dde6,#f8f9fb)"></div></div>
<div style="position:absolute;left:-425px;top:-69.4px"><div class="t " style="left:507px;top:251.5px;font-size:12.2px;color:#1a1a1a;font-weight:normal;line-height:16px">1 / Cal Gas Rate</div></div>
<div style="position:absolute;left:-425px;top:-69.4px"><div style="position:absolute;left:476.5px;top:277.5px;width:10.5px;height:1px;background:repeating-linear-gradient(90deg,#8a8a8a 0 1px,transparent 1px 2px)"></div></div>
<div style="position:absolute;left:-425px;top:-69.4px"><div style="position:absolute;left:488px;top:271.5px;width:10px;height:10px;border:1px solid #6f7f9a;background:linear-gradient(135deg,#d7dde6,#f8f9fb)"></div></div>
<div style="position:absolute;left:-425px;top:-69.4px"><div class="t " style="left:507px;top:269.5px;font-size:12.2px;color:#1a1a1a;font-weight:normal;line-height:16px">1 / Op Gas Rate</div></div>
<div style="position:absolute;left:-425px;top:-69.4px"><div style="position:absolute;left:452px;top:291.0px;width:7px;height:7px;border:1px solid #8e8e8e;background:linear-gradient(#fff,#e4e4e4)"><div style="position:absolute;left:1px;top:3px;width:5px;height:1px;background:#3848a0"></div></div></div>
<div style="position:absolute;left:-425px;top:-69.4px"><div style="position:absolute;left:461px;top:295.5px;width:22px;height:1px;background:repeating-linear-gradient(90deg,#8a8a8a 0 1px,transparent 1px 2px)"></div></div>
<div style="position:absolute;left:-425px;top:-69.4px"><div class="t " style="left:488px;top:287.5px;font-size:12.2px;color:#1a1a1a;line-height:16px">Oil</div></div>
<div style="position:absolute;left:-425px;top:-69.4px"><div style="position:absolute;left:476.5px;top:313.5px;width:10.5px;height:1px;background:repeating-linear-gradient(90deg,#8a8a8a 0 1px,transparent 1px 2px)"></div></div>
<div style="position:absolute;left:-425px;top:-69.4px"><div style="position:absolute;left:488px;top:307.5px;width:10px;height:10px;border:1px solid #6f7f9a;background:linear-gradient(135deg,#d7dde6,#f8f9fb)"></div></div>
<div style="position:absolute;left:-425px;top:-69.4px"><div class="t " style="left:507px;top:305.5px;font-size:12.2px;color:#1a1a1a;font-weight:normal;line-height:16px">Oil Volume</div></div>
<div style="position:absolute;left:-425px;top:-69.4px"><div style="position:absolute;left:476.5px;top:331.5px;width:10.5px;height:1px;background:repeating-linear-gradient(90deg,#8a8a8a 0 1px,transparent 1px 2px)"></div></div>
<div style="position:absolute;left:-425px;top:-69.4px"><div style="position:absolute;left:488px;top:325.5px;width:10px;height:10px;border:1px solid #6f7f9a;background:linear-gradient(135deg,#d7dde6,#f8f9fb)"></div></div>
<div style="position:absolute;left:-425px;top:-69.4px"><div class="t " style="left:507px;top:323.5px;font-size:12.2px;color:#1a1a1a;font-weight:normal;line-height:16px">Cal Oil Rate</div></div>
<div style="position:absolute;left:-425px;top:-69.4px"><div style="position:absolute;left:476.5px;top:349.5px;width:10.5px;height:1px;background:repeating-linear-gradient(90deg,#8a8a8a 0 1px,transparent 1px 2px)"></div></div>
<div style="position:absolute;left:-425px;top:-69.4px"><div style="position:absolute;left:488px;top:343.5px;width:10px;height:10px;border:1px solid #6f7f9a;background:linear-gradient(135deg,#d7dde6,#f8f9fb)"><svg style="position:absolute;left:0;top:0" width="10" height="10"><path d="M1.5 5.2 L4 8.3 L8.6 1.2" stroke="#2a3f8a" stroke-width="1.8" fill="none"/></svg></div></div>
<div style="position:absolute;left:-425px;top:-69.4px"><div class="t " style="left:507px;top:341.5px;font-size:12.2px;color:#1a1a1a;font-weight:bold;line-height:16px">Op Oil Rate</div></div>
<div style="position:absolute;left:-425px;top:-69.4px"><div style="position:absolute;left:476.5px;top:367.5px;width:10.5px;height:1px;background:repeating-linear-gradient(90deg,#8a8a8a 0 1px,transparent 1px 2px)"></div></div>
<div style="position:absolute;left:-425px;top:-69.4px"><div style="position:absolute;left:488px;top:361.5px;width:10px;height:10px;border:1px solid #6f7f9a;background:linear-gradient(135deg,#d7dde6,#f8f9fb)"></div></div>
<div style="position:absolute;left:-425px;top:-69.4px"><div class="t " style="left:507px;top:359.5px;font-size:12.2px;color:#1a1a1a;font-weight:normal;line-height:16px">Cumulative Oil Production</div></div>
<div style="position:absolute;left:-425px;top:-69.4px"><div style="position:absolute;left:476.5px;top:385.5px;width:10.5px;height:1px;background:repeating-linear-gradient(90deg,#8a8a8a 0 1px,transparent 1px 2px)"></div></div>
<div style="position:absolute;left:-425px;top:-69.4px"><div style="position:absolute;left:488px;top:379.5px;width:10px;height:10px;border:1px solid #6f7f9a;background:linear-gradient(135deg,#d7dde6,#f8f9fb)"></div></div>
<div style="position:absolute;left:-425px;top:-69.4px"><div class="t " style="left:507px;top:377.5px;font-size:12.2px;color:#1a1a1a;font-weight:normal;line-height:16px">1 / Cal Oil Rate</div></div>
<div style="position:absolute;left:-425px;top:-69.4px"><div style="position:absolute;left:476.5px;top:403.5px;width:10.5px;height:1px;background:repeating-linear-gradient(90deg,#8a8a8a 0 1px,transparent 1px 2px)"></div></div>
<div style="position:absolute;left:-425px;top:-69.4px"><div style="position:absolute;left:488px;top:397.5px;width:10px;height:10px;border:1px solid #6f7f9a;background:linear-gradient(135deg,#d7dde6,#f8f9fb)"></div></div>
<div style="position:absolute;left:-425px;top:-69.4px"><div class="t " style="left:507px;top:395.5px;font-size:12.2px;color:#1a1a1a;font-weight:normal;line-height:16px">1 / Op Oil Rate</div></div>
<div style="position:absolute;left:-425px;top:-69.4px"><div style="position:absolute;left:476.5px;top:421.5px;width:10.5px;height:1px;background:repeating-linear-gradient(90deg,#8a8a8a 0 1px,transparent 1px 2px)"></div></div>
<div style="position:absolute;left:-425px;top:-69.4px"><div style="position:absolute;left:488px;top:415.5px;width:10px;height:10px;border:1px solid #6f7f9a;background:linear-gradient(135deg,#d7dde6,#f8f9fb)"></div></div>
<div style="position:absolute;left:-425px;top:-69.4px"><div class="t " style="left:507px;top:413.5px;font-size:12.2px;color:#1a1a1a;font-weight:normal;line-height:16px">Material Balance Time</div></div>
<div style="position:absolute;left:-425px;top:-69.4px"><div style="position:absolute;left:476.5px;top:439.5px;width:10.5px;height:1px;background:repeating-linear-gradient(90deg,#8a8a8a 0 1px,transparent 1px 2px)"></div></div>
<div style="position:absolute;left:-425px;top:-69.4px"><div style="position:absolute;left:488px;top:433.5px;width:10px;height:10px;border:1px solid #6f7f9a;background:linear-gradient(135deg,#d7dde6,#f8f9fb)"></div></div>
<div style="position:absolute;left:-425px;top:-69.4px"><div class="t " style="left:507px;top:431.5px;font-size:12.2px;color:#1a1a1a;font-weight:normal;line-height:16px">Normalized Pressure</div></div>
<div style="position:absolute;left:-425px;top:-69.4px"><div style="position:absolute;left:476.5px;top:457.5px;width:10.5px;height:1px;background:repeating-linear-gradient(90deg,#8a8a8a 0 1px,transparent 1px 2px)"></div></div>
<div style="position:absolute;left:-425px;top:-69.4px"><div style="position:absolute;left:488px;top:451.5px;width:10px;height:10px;border:1px solid #6f7f9a;background:linear-gradient(135deg,#d7dde6,#f8f9fb)"></div></div>
<div style="position:absolute;left:-425px;top:-69.4px"><div class="t " style="left:507px;top:449.5px;font-size:12.2px;color:#1a1a1a;font-weight:normal;line-height:16px">Rate/Frac</div></div>
<div style="position:absolute;left:-425px;top:-69.4px"><div style="position:absolute;left:452px;top:471.0px;width:7px;height:7px;border:1px solid #8e8e8e;background:linear-gradient(#fff,#e4e4e4)"><div style="position:absolute;left:1px;top:3px;width:5px;height:1px;background:#3848a0"></div></div></div>
<div style="position:absolute;left:-425px;top:-69.4px"><div style="position:absolute;left:461px;top:475.5px;width:22px;height:1px;background:repeating-linear-gradient(90deg,#8a8a8a 0 1px,transparent 1px 2px)"></div></div>
<div style="position:absolute;left:-425px;top:-69.4px"><div class="t " style="left:488px;top:467.5px;font-size:12.2px;color:#1a1a1a;line-height:16px">Water</div></div>
<div style="position:absolute;left:-425px;top:-69.4px"><div style="position:absolute;left:476.5px;top:493.5px;width:10.5px;height:1px;background:repeating-linear-gradient(90deg,#8a8a8a 0 1px,transparent 1px 2px)"></div></div>
<div style="position:absolute;left:-425px;top:-69.4px"><div style="position:absolute;left:488px;top:487.5px;width:10px;height:10px;border:1px solid #6f7f9a;background:linear-gradient(135deg,#d7dde6,#f8f9fb)"></div></div>
<div style="position:absolute;left:-425px;top:-69.4px"><div class="t " style="left:507px;top:485.5px;font-size:12.2px;color:#1a1a1a;font-weight:normal;line-height:16px">Water Volume</div></div>
<div style="position:absolute;left:-425px;top:-69.4px"><div style="position:absolute;left:476.5px;top:511.5px;width:10.5px;height:1px;background:repeating-linear-gradient(90deg,#8a8a8a 0 1px,transparent 1px 2px)"></div></div>
<div style="position:absolute;left:-425px;top:-69.4px"><div style="position:absolute;left:488px;top:505.5px;width:10px;height:10px;border:1px solid #6f7f9a;background:linear-gradient(135deg,#d7dde6,#f8f9fb)"></div></div>
<div style="position:absolute;left:-425px;top:-69.4px"><div class="t " style="left:507px;top:503.5px;font-size:12.2px;color:#1a1a1a;font-weight:normal;line-height:16px">Cal Water Rate</div></div>
<div style="position:absolute;left:-425px;top:-69.4px"><div style="position:absolute;left:476.5px;top:529.5px;width:10.5px;height:1px;background:repeating-linear-gradient(90deg,#8a8a8a 0 1px,transparent 1px 2px)"></div></div>
<div style="position:absolute;left:-425px;top:-69.4px"><div style="position:absolute;left:488px;top:523.5px;width:10px;height:10px;border:1px solid #6f7f9a;background:linear-gradient(135deg,#d7dde6,#f8f9fb)"></div></div>
<div style="position:absolute;left:-425px;top:-69.4px"><div class="t " style="left:507px;top:521.5px;font-size:12.2px;color:#1a1a1a;font-weight:normal;line-height:16px">Op Water Rate</div></div>
<div style="position:absolute;left:-425px;top:-69.4px"><div style="position:absolute;left:476.5px;top:547.5px;width:10.5px;height:1px;background:repeating-linear-gradient(90deg,#8a8a8a 0 1px,transparent 1px 2px)"></div></div>
<div style="position:absolute;left:-425px;top:-69.4px"><div style="position:absolute;left:488px;top:541.5px;width:10px;height:10px;border:1px solid #6f7f9a;background:linear-gradient(135deg,#d7dde6,#f8f9fb)"></div></div>
<div style="position:absolute;left:-425px;top:-69.4px"><div class="t " style="left:507px;top:539.5px;font-size:12.2px;color:#1a1a1a;font-weight:normal;line-height:16px">Cumulative Water Production</div></div>
<div style="position:absolute;left:-425px;top:-69.4px"><div style="position:absolute;left:452px;top:561.0px;width:7px;height:7px;border:1px solid #8e8e8e;background:linear-gradient(#fff,#e4e4e4)"><div style="position:absolute;left:1px;top:3px;width:5px;height:1px;background:#3848a0"></div><div style="position:absolute;left:3px;top:1px;width:1px;height:5px;background:#3848a0"></div></div></div>
<div style="position:absolute;left:-425px;top:-69.4px"><div style="position:absolute;left:461px;top:565.5px;width:22px;height:1px;background:repeating-linear-gradient(90deg,#8a8a8a 0 1px,transparent 1px 2px)"></div></div>
<div style="position:absolute;left:-425px;top:-69.4px"><div class="t " style="left:488px;top:557.5px;font-size:12.2px;color:#1a1a1a;line-height:16px">BOE</div></div>
<div style="position:absolute;left:-425px;top:-69.4px"><div style="position:absolute;left:452px;top:579.0px;width:7px;height:7px;border:1px solid #8e8e8e;background:linear-gradient(#fff,#e4e4e4)"><div style="position:absolute;left:1px;top:3px;width:5px;height:1px;background:#3848a0"></div><div style="position:absolute;left:3px;top:1px;width:1px;height:5px;background:#3848a0"></div></div></div>
<div style="position:absolute;left:-425px;top:-69.4px"><div style="position:absolute;left:461px;top:583.5px;width:22px;height:1px;background:repeating-linear-gradient(90deg,#8a8a8a 0 1px,transparent 1px 2px)"></div></div>
<div style="position:absolute;left:-425px;top:-69.4px"><div class="t " style="left:488px;top:575.5px;font-size:12.2px;color:#1a1a1a;line-height:16px">Condensate</div></div>
<div style="position:absolute;left:-425px;top:-69.4px"><div style="position:absolute;left:452px;top:597.0px;width:7px;height:7px;border:1px solid #8e8e8e;background:linear-gradient(#fff,#e4e4e4)"><div style="position:absolute;left:1px;top:3px;width:5px;height:1px;background:#3848a0"></div><div style="position:absolute;left:3px;top:1px;width:1px;height:5px;background:#3848a0"></div></div></div>
<div style="position:absolute;left:-425px;top:-69.4px"><div style="position:absolute;left:461px;top:601.5px;width:22px;height:1px;background:repeating-linear-gradient(90deg,#8a8a8a 0 1px,transparent 1px 2px)"></div></div>
<div style="position:absolute;left:-425px;top:-69.4px"><div class="t " style="left:488px;top:593.5px;font-size:12.2px;color:#1a1a1a;line-height:16px">Liquid(o+w)</div></div>
<div style="position:absolute;left:-425px;top:-69.4px"><div style="position:absolute;left:452px;top:615.0px;width:7px;height:7px;border:1px solid #8e8e8e;background:linear-gradient(#fff,#e4e4e4)"><div style="position:absolute;left:1px;top:3px;width:5px;height:1px;background:#3848a0"></div><div style="position:absolute;left:3px;top:1px;width:1px;height:5px;background:#3848a0"></div></div></div>
<div style="position:absolute;left:-425px;top:-69.4px"><div style="position:absolute;left:461px;top:619.5px;width:22px;height:1px;background:repeating-linear-gradient(90deg,#8a8a8a 0 1px,transparent 1px 2px)"></div></div>
<div style="position:absolute;left:-425px;top:-69.4px"><div class="t " style="left:488px;top:611.5px;font-size:12.2px;color:#1a1a1a;line-height:16px">Liquid(o+w+c)</div></div>
<div style="position:absolute;left:-425px;top:-69.4px"><div style="position:absolute;left:452px;top:633.0px;width:7px;height:7px;border:1px solid #8e8e8e;background:linear-gradient(#fff,#e4e4e4)"><div style="position:absolute;left:1px;top:3px;width:5px;height:1px;background:#3848a0"></div><div style="position:absolute;left:3px;top:1px;width:1px;height:5px;background:#3848a0"></div></div></div>
<div style="position:absolute;left:-425px;top:-69.4px"><div style="position:absolute;left:461px;top:637.5px;width:22px;height:1px;background:repeating-linear-gradient(90deg,#8a8a8a 0 1px,transparent 1px 2px)"></div></div>
<div style="position:absolute;left:-425px;top:-69.4px"><div class="t " style="left:488px;top:629.5px;font-size:12.2px;color:#1a1a1a;line-height:16px">CO<sub style="font-size:8px;vertical-align:-2px;line-height:0">2</sub></div></div>
<div style="position:absolute;left:-425px;top:-69.4px"><div style="position:absolute;left:433px;top:651.0px;width:7px;height:7px;border:1px solid #8e8e8e;background:linear-gradient(#fff,#e4e4e4)"><div style="position:absolute;left:1px;top:3px;width:5px;height:1px;background:#3848a0"></div><div style="position:absolute;left:3px;top:1px;width:1px;height:5px;background:#3848a0"></div></div></div>
<div style="position:absolute;left:-425px;top:-69.4px"><div style="position:absolute;left:442px;top:655.5px;width:22px;height:1px;background:repeating-linear-gradient(90deg,#8a8a8a 0 1px,transparent 1px 2px)"></div></div>
<div style="position:absolute;left:-425px;top:-69.4px"><div class="t " style="left:469px;top:647.5px;font-size:12.2px;color:#1a1a1a;line-height:16px">Injection</div></div>
<div style="position:absolute;left:-425px;top:-69.4px"><div style="position:absolute;left:433px;top:669.0px;width:7px;height:7px;border:1px solid #8e8e8e;background:linear-gradient(#fff,#e4e4e4)"><div style="position:absolute;left:1px;top:3px;width:5px;height:1px;background:#3848a0"></div><div style="position:absolute;left:3px;top:1px;width:1px;height:5px;background:#3848a0"></div></div></div>
<div style="position:absolute;left:-425px;top:-69.4px"><div style="position:absolute;left:442px;top:673.5px;width:22px;height:1px;background:repeating-linear-gradient(90deg,#8a8a8a 0 1px,transparent 1px 2px)"></div></div>
<div style="position:absolute;left:-425px;top:-69.4px"><div class="t " style="left:469px;top:665.5px;font-size:12.2px;color:#1a1a1a;line-height:16px">Ratios</div></div>
<div style="position:absolute;left:-425px;top:-69.4px"><div style="position:absolute;left:433px;top:687.0px;width:7px;height:7px;border:1px solid #8e8e8e;background:linear-gradient(#fff,#e4e4e4)"><div style="position:absolute;left:1px;top:3px;width:5px;height:1px;background:#3848a0"></div><div style="position:absolute;left:3px;top:1px;width:1px;height:5px;background:#3848a0"></div></div></div>
<div style="position:absolute;left:-425px;top:-69.4px"><div style="position:absolute;left:442px;top:691.5px;width:22px;height:1px;background:repeating-linear-gradient(90deg,#8a8a8a 0 1px,transparent 1px 2px)"></div></div>
<div style="position:absolute;left:-425px;top:-69.4px"><div class="t " style="left:469px;top:683.5px;font-size:12.2px;color:#1a1a1a;line-height:16px">Other</div></div>
<div style="position:absolute;left:-425px;top:-69.4px"><div style="position:absolute;left:433px;top:705.0px;width:7px;height:7px;border:1px solid #8e8e8e;background:linear-gradient(#fff,#e4e4e4)"><div style="position:absolute;left:1px;top:3px;width:5px;height:1px;background:#3848a0"></div><div style="position:absolute;left:3px;top:1px;width:1px;height:5px;background:#3848a0"></div></div></div>
<div style="position:absolute;left:-425px;top:-69.4px"><div style="position:absolute;left:442px;top:709.5px;width:22px;height:1px;background:repeating-linear-gradient(90deg,#8a8a8a 0 1px,transparent 1px 2px)"></div></div>
<div style="position:absolute;left:-425px;top:-69.4px"><div class="t " style="left:469px;top:701.5px;font-size:12.2px;color:#1a1a1a;line-height:16px">Custom</div></div>
</div>
<div style="position:absolute;left:425px;top:834.5px;width:200.5px;height:15.2px;background:#ececec"></div>
<svg style="position:absolute;left:431px;top:838px" width="5" height="9"><path d="M4.5 0.5V8.5L0.5 4.5Z" fill="#555"/></svg>
<div style="position:absolute;left:444.3px;top:835.5px;width:135.7px;height:13.5px;background:linear-gradient(#fafafa,#e4e4e4 60%,#cfcfcf);border:1px solid #a6a6a6;border-radius:2px;box-sizing:border-box"></div>
<svg style="position:absolute;left:508px;top:838px" width="8" height="8"><path d="M1 1v6M3.5 1v6M6 1v6" stroke="#444" stroke-width="1"/></svg>
<svg style="position:absolute;left:616px;top:838px" width="5" height="9"><path d="M0.5 0.5V8.5L4.5 4.5Z" fill="#555"/></svg>
<div style="position:absolute;left:425px;top:849.7px;width:1235px;height:3.6px;background:#fff"></div>
<div style="position:absolute;left:425px;top:853px;width:1235px;height:1.2px;background:#585858"></div>
<div style="position:absolute;left:425px;top:854.2px;width:1235px;height:4.3px;background:#ececec"></div>
<div style="position:absolute;left:425px;top:858.5px;width:1235px;height:40px;background:#bfbfbf"></div>
<div style="position:absolute;left:632.5px;top:25.5px;width:1030px;height:824px;background:#fff"></div>
<div style="position:absolute;left:632.5px;top:25.5px;width:1030px;height:25.5px;background:linear-gradient(#fdfdff 0,#eef1f8 40%,#d4daec 43%,#d3d9eb 100%)"></div>
<div style="position:absolute;left:632.5px;top:25.5px;width:390px;height:25px;background:linear-gradient(#f7f7f7,#ececec)"></div>
<div style="position:absolute;left:632.5px;top:50.5px;width:1030px;height:1.7px;background:#727272"></div>
<svg style="position:absolute;left:634px;top:30px" width="4" height="18"><path d="M1.5 1.5h1M1.5 5.5h1M1.5 9.5h1M1.5 13.5h1" stroke="#8a9ac0" stroke-width="1.5"/></svg>
<div style="position:absolute;left:639px;top:29.2px;width:22.5px;height:19.5px;background:linear-gradient(#ececec,#dcdcdc);border:1px solid #555;border-radius:3px;box-sizing:border-box"></div>
<svg style="position:absolute;left:645px;top:31px" width="11" height="16"><path d="M1 1 L1 12 L3.8 9.5 L6 14.5 L8 13.6 L5.8 8.8 L9.6 8.6 Z" fill="#fff" stroke="#222" stroke-width="1"/></svg>
<svg style="position:absolute;left:665px;top:31px" width="17" height="17" viewBox="0 0 17 17"><path d="M9 9 L14.8 14.8" stroke="#d9932a" stroke-width="3" stroke-linecap="round"/><circle cx="6" cy="6" r="5" fill="#e6f2fb" stroke="#7d97b0" stroke-width="1.2"/><path d="M3.3 5 A3 3 0 0 1 6 2.5" stroke="#fff" stroke-width="1.2" fill="none"/><path d="M12 1.5v6M9 4.5h6" stroke="#3aaa3a" stroke-width="2.4"/></svg>
<svg style="position:absolute;left:690px;top:32px" width="16" height="16"><rect x="1" y="1" width="11" height="11" fill="#6d90d8" stroke="#5070c0" stroke-width="1"/><path d="M13 10v5.5M10.2 12.8h5.6" stroke="#2040a0" stroke-width="1.4"/></svg>
<svg style="position:absolute;left:710.5px;top:31px" width="17" height="17" viewBox="0 0 17 17"><path d="M9 9 L14.8 14.8" stroke="#d9932a" stroke-width="3" stroke-linecap="round"/><circle cx="6" cy="6" r="5" fill="#e6f2fb" stroke="#7d97b0" stroke-width="1.2"/><path d="M3.3 5 A3 3 0 0 1 6 2.5" stroke="#fff" stroke-width="1.2" fill="none"/><rect x="8.5" y="3" width="7" height="3" fill="#e03030"/></svg>
<svg style="position:absolute;left:733.5px;top:31px" width="17" height="17" viewBox="0 0 17 17"><path d="M9 9 L14.8 14.8" stroke="#d9932a" stroke-width="3" stroke-linecap="round"/><circle cx="6" cy="6" r="5" fill="#e6f2fb" stroke="#7d97b0" stroke-width="1.2"/><path d="M3.3 5 A3 3 0 0 1 6 2.5" stroke="#fff" stroke-width="1.2" fill="none"/><path d="M2 11 A5 5 0 0 0 8 13" stroke="#9aa" stroke-width="1" fill="none"/><rect x="8.5" y="3" width="7" height="3" fill="#e03030"/><path d="M10.5 11 L15 15.5" stroke="#d9932a" stroke-width="2.5"/></svg>
<svg style="position:absolute;left:757px;top:31px" width="16" height="17"><path d="M4 15 C2 12 1 10 1.5 8.5 C2 7.5 3 8 4 9.5 L4 3.5 C4 2.3 5.8 2.3 5.8 3.5 L5.8 7.5 L5.8 2 C5.8 0.8 7.6 0.8 7.6 2 L7.6 7.5 L7.8 2.5 C7.8 1.3 9.6 1.3 9.6 2.5 L9.6 8 L9.8 4 C9.8 2.8 11.5 2.8 11.5 4 L11.5 11 C11.5 13 10.5 15 9.5 16 Z" fill="#fff" stroke="#333" stroke-width="1"/></svg>
<div style="position:absolute;left:779px;top:31px;width:1px;height:16px;background:#888"></div>
<svg style="position:absolute;left:787.5px;top:31px" width="17" height="17"><rect x="4" y="1" width="9" height="6" fill="#fff" stroke="#888"/><rect x="1" y="6.5" width="15" height="6.5" rx="1.5" fill="#d8d8d8" stroke="#555"/><rect x="4" y="11" width="9" height="5" fill="#fff" stroke="#666"/><rect x="5.5" y="2.5" width="3" height="2" fill="#4a8ad0"/><circle cx="12" cy="9" r="1" fill="#e03"/><circle cx="14" cy="9" r="1" fill="#6c0"/></svg>
<svg style="position:absolute;left:812px;top:31px" width="16" height="17"><path d="M1 0.5 H9 L13 4.5 V16.5 H1 Z" fill="#fafcff" stroke="#6a7a9a"/><circle cx="7.5" cy="10" r="3.2" fill="#cfe6f8" stroke="#3a6aa0" stroke-width="1.2"/><path d="M10 12.5 L13.5 16" stroke="#2a5a9a" stroke-width="1.8"/></svg>
<div style="position:absolute;left:833px;top:31px;width:1px;height:16px;background:#888"></div>
<svg style="position:absolute;left:841px;top:31px" width="18" height="17"><rect x="5" y="1" width="10" height="11" fill="#9ab0d8" stroke="#6d86b8"/><path d="M2 3 V14 H15" stroke="#e02020" stroke-width="1.6" fill="none"/><path d="M0.5 4.5 L2 2.5 L3.5 4.5 M13.5 12.5 L15.5 14 L13.5 15.5" stroke="#e02020" stroke-width="1.1" fill="none"/><path d="M6 6.5 L8.8 10 L14.5 1.5" stroke="#0a8a20" stroke-width="2.2" fill="none"/></svg>
<svg style="position:absolute;left:864px;top:31px" width="18" height="17"><rect x="5" y="1" width="10" height="11" fill="#9ab0d8" stroke="#6d86b8"/><path d="M2 3 V14 H15" stroke="#e02020" stroke-width="1.6" fill="none"/><path d="M0.5 4.5 L2 2.5 L3.5 4.5 M13.5 12.5 L15.5 14 L13.5 15.5" stroke="#e02020" stroke-width="1.1" fill="none"/></svg>
<div style="position:absolute;left:885.5px;top:29.2px;width:22px;height:19.5px;background:linear-gradient(#e8e8e8,#d6d6d6);border:1px solid #555;border-radius:3px;box-sizing:border-box"></div>
<svg style="position:absolute;left:889px;top:32px" width="16" height="14"><path d="M1 3.5h14M1 10.5h14" stroke="#38b8c8" stroke-width="1.6"/><path d="M1 10.5h14" stroke="#e05a2a" stroke-width="1.6"/><circle cx="8" cy="3.5" r="2.4" fill="#fff" stroke="#38b8c8" stroke-width="1.6"/><circle cx="8" cy="10.5" r="2.4" fill="#fff" stroke="#e05a2a" stroke-width="1.6"/></svg>
<div style="position:absolute;left:911.7px;top:28.6px;width:108.8px;height:19.5px;background:linear-gradient(#f6f6f6,#dcdcdc);border:1px solid #7a7a7a;border-radius:3px;box-sizing:border-box"></div>
<div class="t " style="left:914.3px;top:31.5px;font-size:10.5px;color:#111133;line-height:14px">Log Y</div>
<svg style="position:absolute;left:1009px;top:36px" width="8" height="5"><path d="M0.3 0.3H7.7L4 4.7Z" fill="#111"/></svg>
<div class="t " style="left:700.5px;top:93px;font-size:11.5px;font-weight:bold;color:#111;line-height:14px;">Field:</div>
<div class="t " style="left:700.5px;top:110px;font-size:11.5px;font-weight:bold;color:#111;line-height:14px;">Current Status:</div>
<div class="t " style="left:1561px;top:60px;font-size:11.5px;font-weight:bold;color:#111;line-height:14px;">Gp:</div>
<div class="t " style="left:1561px;top:76.5px;font-size:11.5px;font-weight:bold;color:#111;line-height:14px;">Np:</div>
<div class="t " style="left:1561px;top:93px;font-size:11.5px;font-weight:bold;color:#111;line-height:14px;">Wp:</div>
<div class="t " style="left:1561px;top:110px;font-size:11.5px;font-weight:bold;color:#111;line-height:14px;">Qcond:</div>
<svg style="position:absolute;left:680px;top:111px" width="17" height="16" viewBox="0 0 17 16"><defs><linearGradient id="lg" x1="0" y1="0" x2="0" y2="1"><stop offset="0" stop-color="#7af27a"/><stop offset="0.5" stop-color="#3ee23e"/><stop offset="1" stop-color="#8cf08c"/></linearGradient></defs><path d="M9.5 8 V5 A2.8 2.8 0 0 1 15 5 V6.5" stroke="#3d5a3d" stroke-width="2.8" fill="none"/><path d="M9.5 8 V5 A2.8 2.8 0 0 1 15 5 V6" stroke="#9af29a" stroke-width="1.1" fill="none"/><rect x="0.8" y="7.8" width="11.6" height="7.6" fill="url(#lg)" stroke="#3d5a3d" stroke-width="1.2"/><path d="M6.6 9.6 L5 11.6 H8.2 Z M6 11.4 h1.2 v1.8 h-1.2z" fill="#1e3a1e"/></svg>
<svg style="position:absolute;left:1607px;top:111px" width="17" height="16" viewBox="0 0 17 16"><defs><linearGradient id="lg" x1="0" y1="0" x2="0" y2="1"><stop offset="0" stop-color="#7af27a"/><stop offset="0.5" stop-color="#3ee23e"/><stop offset="1" stop-color="#8cf08c"/></linearGradient></defs><path d="M9.5 8 V5 A2.8 2.8 0 0 1 15 5 V6.5" stroke="#3d5a3d" stroke-width="2.8" fill="none"/><path d="M9.5 8 V5 A2.8 2.8 0 0 1 15 5 V6" stroke="#9af29a" stroke-width="1.1" fill="none"/><rect x="0.8" y="7.8" width="11.6" height="7.6" fill="url(#lg)" stroke="#3d5a3d" stroke-width="1.2"/><path d="M6.6 9.6 L5 11.6 H8.2 Z M6 11.4 h1.2 v1.8 h-1.2z" fill="#1e3a1e"/></svg>
<svg style="position:absolute;left:1607px;top:826px" width="17" height="16" viewBox="0 0 17 16"><defs><linearGradient id="lg" x1="0" y1="0" x2="0" y2="1"><stop offset="0" stop-color="#7af27a"/><stop offset="0.5" stop-color="#3ee23e"/><stop offset="1" stop-color="#8cf08c"/></linearGradient></defs><path d="M9.5 8 V5 A2.8 2.8 0 0 1 15 5 V6.5" stroke="#3d5a3d" stroke-width="2.8" fill="none"/><path d="M9.5 8 V5 A2.8 2.8 0 0 1 15 5 V6" stroke="#9af29a" stroke-width="1.1" fill="none"/><rect x="0.8" y="7.8" width="11.6" height="7.6" fill="url(#lg)" stroke="#3d5a3d" stroke-width="1.2"/><path d="M6.6 9.6 L5 11.6 H8.2 Z M6 11.4 h1.2 v1.8 h-1.2z" fill="#1e3a1e"/></svg>
<svg style="position:absolute;left:680px;top:827px" width="14" height="16" viewBox="0 0 14 16"><defs><linearGradient id="rg" x1="0" y1="0" x2="0" y2="1"><stop offset="0" stop-color="#f09090"/><stop offset="0.5" stop-color="#e05050"/><stop offset="1" stop-color="#f0a0a0"/></linearGradient></defs><path d="M3.5 7.5 V5 A3.5 3.5 0 0 1 10.5 5 V7.5" stroke="#8a4a4a" stroke-width="2.6" fill="none"/><path d="M3.5 7.5 V5 A3.5 3.5 0 0 1 10.5 5 V7.5" stroke="#f0b0b0" stroke-width="1" fill="none"/><rect x="0.8" y="7" width="12.4" height="8.4" rx="1" fill="url(#rg)" stroke="#a04040" stroke-width="1.1"/><path d="M7 8.8 L5.4 10.8 H8.6Z M6.4 10.6 h1.2 v2 h-1.2z" fill="#3a1a1a"/></svg>
<svg style="position:absolute;left:0;top:0" width="1690" height="894"><line x1="701" y1="135" x2="1600" y2="135" stroke="#bdbdbd" stroke-width="1.5"/><line x1="701.5" y1="132" x2="701.5" y2="808" stroke="#d8d8d8" stroke-width="1"/><line x1="704" y1="135" x2="704" y2="809" stroke="#000" stroke-width="2"/><line x1="703" y1="808" x2="1599" y2="808" stroke="#000" stroke-width="1.8"/><line x1="1598.6" y1="135" x2="1598.6" y2="809" stroke="#000" stroke-width="1.6"/><line x1="1602.5" y1="133" x2="1602.5" y2="809" stroke="#000" stroke-width="1.6"/><rect x="704" y="811.5" width="894" height="21" fill="#fff"/><line x1="703" y1="811.7" x2="1599" y2="811.7" stroke="#000" stroke-width="1.6"/><line x1="704.3" y1="811" x2="704.3" y2="834" stroke="#000" stroke-width="1.6"/><line x1="705" y1="831" x2="1598" y2="831" stroke="#d6d6d6" stroke-width="1.5"/><line x1="700" y1="833.8" x2="1600" y2="833.8" stroke="#000" stroke-width="1.8"/><line x1="1598.6" y1="811" x2="1598.6" y2="834" stroke="#000" stroke-width="1.6"/><line x1="751.5" y1="813" x2="751.5" y2="831" stroke="#b8b8b8" stroke-width="1"/><line x1="911.5" y1="813" x2="911.5" y2="831" stroke="#b8b8b8" stroke-width="1"/><line x1="1071.3" y1="813" x2="1071.3" y2="831" stroke="#b8b8b8" stroke-width="1"/><line x1="1230.6" y1="813" x2="1230.6" y2="831" stroke="#b8b8b8" stroke-width="1"/><line x1="1390.3" y1="813" x2="1390.3" y2="831" stroke="#b8b8b8" stroke-width="1"/><line x1="1550" y1="813" x2="1550" y2="831" stroke="#b8b8b8" stroke-width="1"/><text x="726.8" y="827" text-anchor="middle" font-family="Liberation Sans" font-weight="bold" font-size="11" fill="#111">2007</text><text x="831.3" y="827" text-anchor="middle" font-family="Liberation Sans" font-weight="bold" font-size="11" fill="#111">2008</text><text x="991.2" y="827" text-anchor="middle" font-family="Liberation Sans" font-weight="bold" font-size="11" fill="#111">2009</text><text x="1150" y="827" text-anchor="middle" font-family="Liberation Sans" font-weight="bold" font-size="11" fill="#111">2010</text><text x="1309.8" y="827" text-anchor="middle" font-family="Liberation Sans" font-weight="bold" font-size="11" fill="#111">2011</text><text x="1469.5" y="827" text-anchor="middle" font-family="Liberation Sans" font-weight="bold" font-size="11" fill="#111">2012</text><text x="1574" y="827" text-anchor="middle" font-family="Liberation Sans" font-weight="bold" font-size="11" fill="#111">2013</text><line x1="699" y1="135.5" x2="708" y2="135.5" stroke="#999" stroke-width="1"/><line x1="699" y1="337.8" x2="708" y2="337.8" stroke="#999" stroke-width="1"/><line x1="699" y1="368.5" x2="708" y2="368.5" stroke="#999" stroke-width="1"/><line x1="699" y1="402.9" x2="708" y2="402.9" stroke="#999" stroke-width="1"/><line x1="699" y1="441.9" x2="708" y2="441.9" stroke="#999" stroke-width="1"/><line x1="699" y1="486.9" x2="708" y2="486.9" stroke="#999" stroke-width="1"/><line x1="699" y1="540.1" x2="708" y2="540.1" stroke="#999" stroke-width="1"/><line x1="699" y1="605.2" x2="708" y2="605.2" stroke="#999" stroke-width="1"/><line x1="699" y1="689.2" x2="708" y2="689.2" stroke="#999" stroke-width="1"/><line x1="699" y1="807.5" x2="708" y2="807.5" stroke="#999" stroke-width="1"/><text x="696" y="138.5" text-anchor="end" font-family="Liberation Sans" font-weight="bold" font-size="10.7" fill="#8c8c8c">2&#8201;·&#8201;10<tspan font-size="8" dy="-4.5">1</tspan></text><text x="696" y="340.8" text-anchor="end" font-family="Liberation Sans" font-weight="bold" font-size="10.7" fill="#000">10<tspan font-size="8" dy="-4.5">1</tspan></text><text x="696" y="373.0" text-anchor="end" font-family="Liberation Sans" font-weight="bold" font-size="10.8" fill="#8c8c8c">9</text><text x="696" y="407.4" text-anchor="end" font-family="Liberation Sans" font-weight="bold" font-size="10.8" fill="#8c8c8c">8</text><text x="696" y="446.4" text-anchor="end" font-family="Liberation Sans" font-weight="bold" font-size="10.8" fill="#8c8c8c">7</text><text x="696" y="491.4" text-anchor="end" font-family="Liberation Sans" font-weight="bold" font-size="10.8" fill="#8c8c8c">6</text><text x="696" y="544.6" text-anchor="end" font-family="Liberation Sans" font-weight="bold" font-size="10.8" fill="#8c8c8c">5</text><text x="696" y="609.7" text-anchor="end" font-family="Liberation Sans" font-weight="bold" font-size="10.8" fill="#8c8c8c">4</text><text x="696" y="693.7" text-anchor="end" font-family="Liberation Sans" font-weight="bold" font-size="10.8" fill="#8c8c8c">3</text><text x="696" y="810.5" text-anchor="end" font-family="Liberation Sans" font-weight="bold" font-size="10.7" fill="#8c8c8c">2&#8201;·&#8201;10<tspan font-size="8" dy="-4.5">0</tspan></text><line x1="1594" y1="807.5" x2="1600" y2="807.5" stroke="#999" stroke-width="1"/><line x1="1594" y1="751.3" x2="1600" y2="751.3" stroke="#999" stroke-width="1"/><line x1="1594" y1="718.4" x2="1600" y2="718.4" stroke="#999" stroke-width="1"/><line x1="1594" y1="695.1" x2="1600" y2="695.1" stroke="#999" stroke-width="1"/><line x1="1594" y1="677.0" x2="1600" y2="677.0" stroke="#999" stroke-width="1"/><line x1="1594" y1="662.2" x2="1600" y2="662.2" stroke="#999" stroke-width="1"/><line x1="1594" y1="649.7" x2="1600" y2="649.7" stroke="#999" stroke-width="1"/><line x1="1594" y1="638.9" x2="1600" y2="638.9" stroke="#999" stroke-width="1"/><line x1="1594" y1="629.3" x2="1600" y2="629.3" stroke="#999" stroke-width="1"/><line x1="1594" y1="620.8" x2="1600" y2="620.8" stroke="#999" stroke-width="1"/><line x1="1594" y1="564.6" x2="1600" y2="564.6" stroke="#999" stroke-width="1"/><line x1="1594" y1="531.7" x2="1600" y2="531.7" stroke="#999" stroke-width="1"/><line x1="1594" y1="508.4" x2="1600" y2="508.4" stroke="#999" stroke-width="1"/><line x1="1594" y1="490.3" x2="1600" y2="490.3" stroke="#999" stroke-width="1"/><line x1="1594" y1="475.5" x2="1600" y2="475.5" stroke="#999" stroke-width="1"/><line x1="1594" y1="463.0" x2="1600" y2="463.0" stroke="#999" stroke-width="1"/><line x1="1594" y1="452.2" x2="1600" y2="452.2" stroke="#999" stroke-width="1"/><line x1="1594" y1="442.6" x2="1600" y2="442.6" stroke="#999" stroke-width="1"/><line x1="1594" y1="434.1" x2="1600" y2="434.1" stroke="#999" stroke-width="1"/><line x1="1594" y1="377.9" x2="1600" y2="377.9" stroke="#999" stroke-width="1"/><line x1="1594" y1="345.0" x2="1600" y2="345.0" stroke="#999" stroke-width="1"/><line x1="1594" y1="321.7" x2="1600" y2="321.7" stroke="#999" stroke-width="1"/><line x1="1594" y1="303.6" x2="1600" y2="303.6" stroke="#999" stroke-width="1"/><line x1="1594" y1="288.8" x2="1600" y2="288.8" stroke="#999" stroke-width="1"/><line x1="1594" y1="276.3" x2="1600" y2="276.3" stroke="#999" stroke-width="1"/><line x1="1594" y1="265.5" x2="1600" y2="265.5" stroke="#999" stroke-width="1"/><line x1="1594" y1="255.9" x2="1600" y2="255.9" stroke="#999" stroke-width="1"/><line x1="1594" y1="247.4" x2="1600" y2="247.4" stroke="#999" stroke-width="1"/><line x1="1594" y1="191.2" x2="1600" y2="191.2" stroke="#999" stroke-width="1"/><line x1="1594" y1="158.3" x2="1600" y2="158.3" stroke="#999" stroke-width="1"/><line x1="1594" y1="135.0" x2="1600" y2="135.0" stroke="#999" stroke-width="1"/><text x="1606" y="755.8" font-family="Liberation Sans" font-weight="bold" font-size="10.8" fill="#8c8c8c">2</text><text x="1606" y="722.9" font-family="Liberation Sans" font-weight="bold" font-size="10.8" fill="#8c8c8c">3</text><text x="1606" y="699.6" font-family="Liberation Sans" font-weight="bold" font-size="10.8" fill="#8c8c8c">4</text><text x="1606" y="666.7" font-family="Liberation Sans" font-weight="bold" font-size="10.8" fill="#8c8c8c">6</text><text x="1606" y="569.1" font-family="Liberation Sans" font-weight="bold" font-size="10.8" fill="#8c8c8c">2</text><text x="1606" y="536.2" font-family="Liberation Sans" font-weight="bold" font-size="10.8" fill="#8c8c8c">3</text><text x="1606" y="512.9" font-family="Liberation Sans" font-weight="bold" font-size="10.8" fill="#8c8c8c">4</text><text x="1606" y="480.0" font-family="Liberation Sans" font-weight="bold" font-size="10.8" fill="#8c8c8c">6</text><text x="1606" y="382.4" font-family="Liberation Sans" font-weight="bold" font-size="10.8" fill="#8c8c8c">2</text><text x="1606" y="349.5" font-family="Liberation Sans" font-weight="bold" font-size="10.8" fill="#8c8c8c">3</text><text x="1606" y="326.2" font-family="Liberation Sans" font-weight="bold" font-size="10.8" fill="#8c8c8c">4</text><text x="1606" y="293.3" font-family="Liberation Sans" font-weight="bold" font-size="10.8" fill="#8c8c8c">6</text><text x="1606" y="195.7" font-family="Liberation Sans" font-weight="bold" font-size="10.8" fill="#8c8c8c">2</text><text x="1606" y="162.8" font-family="Liberation Sans" font-weight="bold" font-size="10.8" fill="#8c8c8c">3</text><text x="1606" y="623.8" text-anchor="start" font-family="Liberation Sans" font-weight="bold" font-size="10.7" fill="#000">10<tspan font-size="8" dy="-4.5">1</tspan></text><text x="1606" y="437.1" text-anchor="start" font-family="Liberation Sans" font-weight="bold" font-size="10.7" fill="#000">10<tspan font-size="8" dy="-4.5">2</tspan></text><text x="1606" y="250.4" text-anchor="start" font-family="Liberation Sans" font-weight="bold" font-size="10.7" fill="#000">10<tspan font-size="8" dy="-4.5">3</tspan></text><text x="1606" y="138.0" text-anchor="start" font-family="Liberation Sans" font-weight="bold" font-size="10.7" fill="#8c8c8c">4&#8201;·&#8201;10<tspan font-size="8" dy="-4.5">3</tspan></text><text x="1606" y="812.0" font-family="Liberation Sans" font-weight="bold" font-size="11.5" fill="#000">1.0</text><text transform="translate(647.8,471.5) rotate(-90)" text-anchor="middle" font-family="Liberation Sans" font-weight="bold" font-size="11" fill="#000">Op Gas Rate <tspan fill="#2a2ad0">(Mscf/d)</tspan></text><g clip-path="url(#plotclip)"><clipPath id="plotclip"><rect x="705" y="136" width="892" height="671"/></clipPath><polyline points="737.1,497.5 751.5,497.5" fill="none" stroke="#14cbf0" stroke-width="2" stroke-linejoin="round"/><polyline points="764.6,600.0 772.0,600.0 784.2,507.5 796.9,544.1 811.3,438.6 824.3,426.3 837.4,411.0 850.5,411.0 864.5,384.5 878.0,406.7 890.7,302.0 903.7,285.8 918.0,286.7 931.2,271.4 944.1,249.3 955.4,252.5 969.1,258.3 985.6,267.7 997.3,267.7 1012.2,282.6 1023.9,292.4 1036.8,279.5 1051.3,235.6 1065.0,247.4 1077.9,260.7 1089.6,261.5 1103.3,232.5 1117.8,251.3 1130.3,263.0 1143.2,245.8 1156.9,204.3 1170.6,209.8 1184.5,184.5 1197.4,197.1 1211.4,172.0 1223.7,172.0 1237.1,176.1 1251.1,163.0 1263.7,144.3 1276.3,163.0 1290.2,172.0 1304.2,183.7 1316.8,193.8 1330.8,207.7 1343.4,210.5 1356.0,218.1 1368.5,225.6 1383.1,233.5 1397.1,246.9 1407.7,246.0 1423.8,242.5 1436.4,247.0 1450.9,262.9 1461.5,266.0 1476.9,264.9 1489.5,272.2 1502.1,279.7 1517.5,279.7 1530.1,268.5 1542.7,275.5 1556.6,271.3 1564.5,270.8" fill="none" stroke="#14cbf0" stroke-width="2" stroke-linejoin="round"/><polyline points="883.2,367.9 890.7,368.3 905.0,389.7 917.3,392.7 931.2,381.0 943.7,375.7 957.4,374.9 971.1,379.6 982.8,380.8 998.5,387.0 1010.2,389.4 1023.9,400.0 1037.6,404.6 1050.5,414.4 1064.6,447.7 1077.1,414.4 1090.4,424.2 1103.3,436.0 1117.8,426.6 1130.3,435.2 1143.3,443.9 1157.2,468.3 1170.1,446.8 1182.7,451.1 1197.0,460.6 1210.4,462.9 1223.8,457.0 1235.5,461.1 1250.3,461.1 1262.7,487.0 1276.1,479.8 1288.4,489.6 1301.8,500.8 1315.2,498.6 1330.4,489.6 1343.2,513.8 1356.6,509.8 1370.8,532.0 1384.3,607.0 1397.1,626.2 1410.6,555.8 1436.4,614.3 1450.2,570.0 1463.0,607.0 1476.5,551.6 1503.6,595.9 1517.1,545.5 1530.9,690.7 1543.2,605.7 1557.7,555.8 1564.3,555.8" fill="none" stroke="#22ccb8" stroke-width="2" stroke-linejoin="round"/><polyline points="1256.8,614.0 1263.5,614.0 1275.8,671.7 1290.3,714.8 1296.4,714.8" fill="none" stroke="#ee1414" stroke-width="2" stroke-linejoin="round"/><polyline points="1311.1,633.0 1316.5,633.0 1330.6,675.0 1343.3,658.7 1357.7,518.3 1370.8,554.0 1384.2,627.0 1397.6,747.7 1410.1,656.0 1422.4,654.4 1450.3,735.0 1463.8,680.6 1476.5,649.3 1489.5,647.0 1505.1,661.6 1516.3,668.3 1543.2,707.4 1557.7,671.7 1564.4,671.7" fill="none" stroke="#ee1414" stroke-width="2" stroke-linejoin="round"/><polyline points="1137.5,474.0 1142.9,474.0 1157.6,487.4 1169.8,523.8 1183.6,519.7 1197.0,547.0 1210.4,547.0 1237.3,573.4 1263.8,561.9 1276.1,552.9 1290.2,605.5 1303.6,571.9 1317.0,594.7 1343.8,574.6 1356.7,646.0 1369.7,587.8 1383.0,573.0 1397.1,609.4 1410.7,623.6 1424.2,656.0 1450.3,614.6 1463.8,609.0 1477.2,610.1 1489.5,607.9 1502.9,613.5 1530.2,722.0 1543.2,639.7 1557.7,660.0 1564.4,660.0" fill="none" stroke="#da0842" stroke-width="2" stroke-linejoin="round"/><polyline points="1150.6,384.6 1156.9,384.6 1171.0,388.6 1184.8,417.7 1197.0,548.8 1210.4,565.0 1224.2,488.7 1237.3,488.7 1250.7,480.8 1262.7,497.0 1276.1,506.0 1290.2,531.7 1303.6,499.3 1330.4,548.5 1343.2,521.6 1357.2,518.4 1370.0,508.6 1384.3,536.9 1396.6,532.7 1423.1,547.4 1436.4,525.8 1461.8,555.3 1476.5,556.0 1489.6,560.2 1517.1,567.6 1530.6,560.2 1543.7,568.1 1557.7,550.9 1564.3,550.9" fill="none" stroke="#12e070" stroke-width="2" stroke-linejoin="round"/><polyline points="1177.7,377.4 1184.4,377.4 1196.7,397.6 1205.0,396.9 1216.2,398.5 1224.0,400.3 1236.3,418.1 1249.7,439.4 1263.1,449.4 1275.4,459.5 1290.0,459.5 1303.6,468.6 1316.3,462.8 1330.4,470.2 1343.2,470.9 1370.0,528.2 1396.6,546.0 1410.6,513.5 1423.1,548.4 1436.4,517.9 1461.8,550.4 1476.5,544.2 1489.6,547.9 1503.6,522.8 1517.1,514.7 1530.6,518.4 1543.7,540.5 1557.7,504.1 1564.3,504.1" fill="none" stroke="#c2109c" stroke-width="2" stroke-linejoin="round"/><polyline points="1376.4,274.9 1383.9,274.9 1397.1,327.1 1410.5,243.3 1423.8,266.6 1436.4,373.4 1450.3,638.1 1463.0,541.5 1476.0,525.3 1502.9,729.8 1517.1,442.1 1530.6,437.2 1543.2,363.6 1556.6,398.0 1564.5,398.0" fill="none" stroke="#e8128a" stroke-width="2" stroke-linejoin="round"/></g><rect x="834.5" y="498.5" width="276.5" height="229.5" fill="#fff" stroke="#000" stroke-width="1.2"/><text x="972" y="517" text-anchor="middle" font-family="Liberation Sans" font-weight="bold" font-size="16.5" fill="#000">Legend</text><line x1="838" y1="529.2" x2="871" y2="529.2" stroke="#b830c8" stroke-width="2"/><circle cx="854" cy="529.2" r="3.8" fill="#fff" stroke="#f00" stroke-width="1.2"/><text x="877.5" y="533.2" font-family="Liberation Sans" font-weight="bold" font-size="10.9" fill="#111">191/02-01-039-26W3/00 (5210) - Op Gas Rate</text><line x1="838" y1="546.2" x2="871" y2="546.2" stroke="#22d84a" stroke-width="2"/><circle cx="854" cy="546.2" r="3.8" fill="#fff" stroke="#f00" stroke-width="1.2"/><text x="877.5" y="550.2" font-family="Liberation Sans" font-weight="bold" font-size="10.9" fill="#111">191/02-12-039-26W3/00 (5210) - Op Gas Rate</text><line x1="838" y1="563.2" x2="871" y2="563.2" stroke="#2ad82a" stroke-width="2"/><circle cx="854" cy="563.2" r="3.8" fill="#fff" stroke="#f00" stroke-width="1.2"/><text x="877.5" y="567.2" font-family="Liberation Sans" font-weight="bold" font-size="10.9" fill="#111">191/04-03-039-27W3/00 (5210) - Op Gas Rate</text><line x1="838" y1="580.1" x2="871" y2="580.1" stroke="#9a22d8" stroke-width="2"/><circle cx="854" cy="580.1" r="3.8" fill="#fff" stroke="#f00" stroke-width="1.2"/><text x="877.5" y="584.1" font-family="Liberation Sans" font-weight="bold" font-size="10.9" fill="#111">191/02-08-039-27W3/00 (5210) - Op Gas Rate</text><line x1="838" y1="597.1" x2="871" y2="597.1" stroke="#d82690" stroke-width="2"/><circle cx="854" cy="597.1" r="3.8" fill="#fff" stroke="#f00" stroke-width="1.2"/><text x="877.5" y="601.1" font-family="Liberation Sans" font-weight="bold" font-size="10.9" fill="#111">BIRDBEAR - Op Gas Rate</text><line x1="838" y1="614.1" x2="871" y2="614.1" stroke="#72ea22" stroke-width="2"/><circle cx="854" cy="614.1" r="3.8" fill="#fff" stroke="#f00" stroke-width="1.2"/><text x="877.5" y="618.1" font-family="Liberation Sans" font-weight="bold" font-size="10.9" fill="#111">191/04-01-039-26W3/00 (5210) - Op Gas Rate</text><line x1="838" y1="631.1" x2="871" y2="631.1" stroke="#28d0bc" stroke-width="2"/><circle cx="854" cy="631.1" r="3.8" fill="#fff" stroke="#080" stroke-width="1.2"/><text x="877.5" y="635.1" font-family="Liberation Sans" font-weight="bold" font-size="10.9" fill="#111">191/02-01-039-26W3/00 (5210) - Op Oil Rate</text><line x1="838" y1="648.1" x2="871" y2="648.1" stroke="#ee1616" stroke-width="2"/><circle cx="854" cy="648.1" r="3.8" fill="#fff" stroke="#080" stroke-width="1.2"/><text x="877.5" y="652.1" font-family="Liberation Sans" font-weight="bold" font-size="10.9" fill="#111">191/02-12-039-26W3/00 (5210) - Op Oil Rate</text><line x1="838" y1="665.0" x2="871" y2="665.0" stroke="#d0104a" stroke-width="2"/><circle cx="854" cy="665.0" r="3.8" fill="#fff" stroke="#080" stroke-width="1.2"/><text x="877.5" y="669.0" font-family="Liberation Sans" font-weight="bold" font-size="10.9" fill="#111">191/04-03-039-27W3/00 (5210) - Op Oil Rate</text><line x1="838" y1="682.0" x2="871" y2="682.0" stroke="#22d87a" stroke-width="2"/><circle cx="854" cy="682.0" r="3.8" fill="#fff" stroke="#080" stroke-width="1.2"/><text x="877.5" y="686.0" font-family="Liberation Sans" font-weight="bold" font-size="10.9" fill="#111">191/02-08-039-27W3/00 (5210) - Op Oil Rate</text><line x1="838" y1="699.0" x2="871" y2="699.0" stroke="#22c4ee" stroke-width="2"/><circle cx="854" cy="699.0" r="3.8" fill="#fff" stroke="#080" stroke-width="1.2"/><text x="877.5" y="703.0" font-family="Liberation Sans" font-weight="bold" font-size="10.9" fill="#111">BIRDBEAR - Op Oil Rate</text><line x1="838" y1="716.0" x2="871" y2="716.0" stroke="#b01a9a" stroke-width="2"/><circle cx="854" cy="716.0" r="3.8" fill="#fff" stroke="#080" stroke-width="1.2"/><text x="877.5" y="720.0" font-family="Liberation Sans" font-weight="bold" font-size="10.9" fill="#111">191/04-01-039-26W3/00 (5210) - Op Oil Rate</text></svg>
<div style="position:absolute;left:632.5px;top:847.8px;width:1030px;height:1px;background:#dadada"></div>
<div style="position:absolute;left:632.5px;top:849.8px;width:1030px;height:1px;background:#dadada"></div>
<svg style="position:absolute;left:0;top:0" width="1690" height="894">
<defs><filter id="sh" x="-10%" y="-10%" width="120%" height="120%"><feGaussianBlur stdDeviation="2.8"/></filter>
<clipPath id="outc"><path d="M-20,-20 H1720 V920 H-20 Z M0,0 L1659.0,0.0 L1657.4,0.2 L1656.0,1.2 L1653.7,3.0 L1651.1,4.8 L1650.6,6.7 L1649.5,8.5 L1649.6,10.2 L1650.4,13.9 L1650.4,15.4 L1651.7,18.8 L1652.0,20.0 L1653.7,22.5 L1656.2,23.9 L1655.6,26.8 L1655.1,27.5 L1652.0,28.2 L1649.9,30.4 L1647.3,31.1 L1645.9,31.9 L1644.4,32.8 L1644.0,35.0 L1643.8,35.7 L1645.9,37.3 L1646.8,38.9 L1648.8,39.8 L1651.3,42.0 L1652.5,43.3 L1655.0,45.2 L1657.2,45.7 L1659.3,46.9 L1659.7,49.2 L1660.7,50.0 L1660.5,52.3 L1659.3,54.7 L1658.9,56.4 L1657.8,57.9 L1657.0,60.0 L1658.4,61.7 L1660.1,63.0 L1662.7,65.2 L1664.3,66.2 L1665.4,67.7 L1667.0,68.8 L1667.1,71.2 L1666.5,71.6 L1664.4,73.7 L1661.9,75.1 L1660.7,77.0 L1658.8,77.6 L1656.9,79.8 L1655.1,80.3 L1653.4,82.7 L1650.9,83.4 L1649.9,85.5 L1648.9,86.9 L1647.0,87.5 L1647.0,89.0 L1647.1,90.9 L1649.1,91.0 L1649.3,92.3 L1651.2,93.9 L1653.7,94.8 L1654.8,96.3 L1657.4,97.9 L1660.1,99.5 L1660.7,100.7 L1662.0,102.8 L1663.5,104.0 L1665.1,107.5 L1666.2,109.8 L1666.3,111.5 L1666.5,114.0 L1666.7,115.1 L1667.4,117.4 L1666.2,118.5 L1665.0,119.4 L1662.6,120.4 L1660.7,121.6 L1658.3,123.3 L1657.0,124.0 L1655.5,124.6 L1652.9,126.2 L1651.0,127.2 L1649.6,130.1 L1647.0,130.8 L1644.8,131.8 L1644.1,133.8 L1644.0,136.0 L1644.7,136.9 L1644.1,139.6 L1645.8,139.9 L1647.1,141.4 L1648.4,144.6 L1650.5,145.9 L1651.1,147.1 L1652.5,149.4 L1654.6,151.2 L1655.6,151.9 L1657.0,154.0 L1658.7,156.7 L1660.1,158.3 L1661.4,160.1 L1661.7,161.7 L1663.0,162.7 L1663.5,165.0 L1664.6,167.5 L1666.3,169.0 L1665.7,171.0 L1666.2,173.7 L1665.7,174.6 L1663.8,176.2 L1662.8,178.1 L1662.3,181.1 L1661.4,182.3 L1659.8,184.7 L1657.6,186.4 L1657.0,188.0 L1656.4,190.1 L1654.8,191.4 L1652.3,193.6 L1650.9,195.3 L1650.3,196.4 L1647.8,199.0 L1647.0,199.4 L1644.8,201.0 L1645.2,203.7 L1644.0,204.7 L1643.3,207.3 L1644.9,208.9 L1644.7,210.5 L1645.4,211.4 L1648.2,214.3 L1649.0,216.6 L1650.6,218.0 L1651.7,220.0 L1653.9,220.5 L1654.7,222.1 L1656.5,224.2 L1658.5,225.6 L1660.2,228.0 L1662.4,228.9 L1664.4,231.2 L1665.5,232.8 L1666.7,233.6 L1667.4,235.0 L1667.8,236.2 L1667.3,238.3 L1665.7,241.0 L1664.8,242.1 L1664.2,244.0 L1662.0,245.8 L1660.7,248.0 L1659.8,249.9 L1657.9,251.1 L1656.8,252.2 L1656.2,254.3 L1654.4,256.4 L1653.5,257.7 L1651.6,259.5 L1650.1,261.6 L1648.8,263.1 L1648.0,265.5 L1647.7,267.0 L1647.0,268.0 L1647.9,269.6 L1648.1,272.7 L1649.8,273.3 L1650.2,275.6 L1651.8,277.1 L1653.4,279.6 L1656.0,281.8 L1656.0,283.4 L1657.0,285.0 L1657.1,286.2 L1656.8,289.4 L1654.9,291.3 L1654.0,292.5 L1653.7,295.0 L1651.1,296.2 L1650.5,297.9 L1649.1,299.7 L1649.4,301.0 L1649.0,303.4 L1649.7,305.2 L1650.1,306.8 L1652.7,308.7 L1653.8,311.0 L1656.9,312.5 L1657.6,313.0 L1659.0,315.4 L1660.7,316.8 L1660.7,318.2 L1660.9,321.5 L1661.1,322.5 L1659.5,325.8 L1659.6,327.6 L1658.4,328.7 L1659.1,331.4 L1659.0,333.6 L1659.0,336.3 L1661.0,338.1 L1661.6,340.2 L1663.1,342.1 L1665.1,343.2 L1666.5,346.0 L1666.8,346.5 L1667.4,348.7 L1666.9,350.0 L1665.1,351.4 L1663.4,352.8 L1662.0,354.3 L1660.8,355.6 L1658.5,356.8 L1657.0,358.8 L1655.4,359.6 L1653.8,361.1 L1653.1,363.5 L1650.9,365.0 L1651.0,366.1 L1649.9,368.4 L1649.0,370.5 L1649.0,372.9 L1649.1,374.5 L1650.1,377.5 L1650.2,379.5 L1651.6,381.5 L1652.1,383.2 L1652.4,384.9 L1654.0,387.3 L1654.5,389.7 L1656.2,390.6 L1657.5,393.2 L1660.2,394.4 L1660.7,395.3 L1662.3,397.4 L1663.2,399.2 L1664.2,401.2 L1665.5,404.0 L1667.6,405.4 L1667.0,408.0 L1667.4,409.0 L1666.3,410.6 L1664.2,412.4 L1663.0,414.1 L1660.4,415.8 L1659.0,417.5 L1656.7,418.7 L1655.3,420.5 L1653.7,421.5 L1652.7,423.5 L1651.8,425.8 L1650.6,427.6 L1650.2,429.9 L1649.5,432.3 L1648.4,433.6 L1649.0,435.6 L1648.4,438.8 L1648.0,441.0 L1647.4,443.5 L1649.1,445.2 L1649.3,447.6 L1648.9,449.3 L1650.0,452.0 L1650.8,454.2 L1650.7,456.4 L1650.6,457.8 L1650.5,460.4 L1649.0,461.5 L1647.8,464.2 L1646.7,467.1 L1646.5,468.8 L1646.0,471.0 L1645.6,472.9 L1645.9,474.0 L1647.0,477.1 L1647.3,478.7 L1648.6,479.9 L1649.8,482.1 L1649.8,484.0 L1651.8,485.7 L1652.3,488.0 L1653.6,490.8 L1654.3,491.9 L1655.3,494.3 L1656.7,496.2 L1657.2,497.2 L1656.8,499.3 L1657.3,501.4 L1656.9,502.6 L1655.2,503.5 L1652.6,505.1 L1651.7,507.0 L1649.8,507.6 L1648.1,509.5 L1647.2,511.5 L1646.9,512.5 L1647.6,514.4 L1647.8,517.5 L1646.6,518.8 L1648.3,521.7 L1648.2,522.7 L1648.3,526.0 L1648.9,527.6 L1649.4,529.6 L1650.6,531.6 L1652.1,533.0 L1652.8,535.5 L1654.0,537.7 L1654.1,539.9 L1655.7,540.5 L1656.1,543.2 L1657.7,544.9 L1658.0,547.0 L1658.7,550.0 L1659.0,551.7 L1657.9,553.9 L1658.8,554.7 L1658.2,557.7 L1657.3,559.1 L1655.4,561.4 L1655.4,563.9 L1653.2,565.8 L1651.9,567.3 L1650.5,570.6 L1649.7,572.8 L1648.7,573.6 L1648.3,575.2 L1647.4,578.0 L1647.2,578.6 L1647.4,582.5 L1647.7,584.6 L1649.6,585.3 L1650.6,586.7 L1652.3,587.0 L1654.0,588.5 L1656.0,589.6 L1657.1,589.6 L1659.9,591.0 L1660.7,593.4 L1661.5,594.7 L1662.2,597.0 L1664.2,598.1 L1664.5,600.1 L1665.1,602.4 L1665.1,604.3 L1665.5,607.8 L1666.0,609.0 L1665.7,611.9 L1665.9,614.3 L1664.5,614.7 L1663.2,616.4 L1662.3,618.3 L1661.0,620.5 L1660.2,623.4 L1659.2,624.6 L1657.3,626.7 L1656.0,628.4 L1654.4,630.1 L1654.8,631.7 L1653.2,634.2 L1653.2,635.1 L1652.3,637.0 L1652.0,639.1 L1653.1,641.6 L1655.4,644.1 L1656.9,644.4 L1657.3,647.2 L1660.2,648.5 L1660.7,650.5 L1661.7,651.7 L1662.2,655.2 L1663.7,657.1 L1664.5,658.2 L1663.5,660.2 L1664.3,663.4 L1664.0,665.6 L1664.3,667.7 L1663.2,669.6 L1662.0,671.1 L1660.4,673.4 L1659.6,675.6 L1659.2,676.7 L1657.2,678.7 L1656.9,681.5 L1655.1,682.6 L1654.8,685.5 L1654.0,687.4 L1653.2,688.8 L1652.9,690.4 L1651.8,692.9 L1652.2,695.1 L1651.5,696.7 L1649.9,698.2 L1650.6,700.9 L1649.2,701.7 L1649.2,704.8 L1648.9,706.2 L1649.2,709.4 L1649.0,710.9 L1648.8,712.0 L1649.3,714.5 L1650.4,716.1 L1651.3,719.0 L1651.5,720.3 L1653.1,722.6 L1653.7,724.6 L1653.5,727.5 L1654.5,730.0 L1655.5,730.8 L1655.7,733.3 L1657.0,736.1 L1656.5,737.2 L1656.8,740.0 L1657.3,741.0 L1656.4,742.4 L1655.5,745.0 L1655.8,747.8 L1654.3,750.0 L1653.2,750.8 L1650.5,753.6 L1650.0,753.9 L1648.5,756.2 L1646.9,757.8 L1645.7,758.9 L1645.3,761.1 L1645.6,762.9 L1646.8,764.1 L1648.0,765.8 L1648.6,768.3 L1651.2,769.1 L1652.0,770.5 L1654.6,772.6 L1656.3,773.1 L1659.2,774.0 L1659.7,776.8 L1660.7,778.0 L1661.4,779.1 L1660.3,781.0 L1661.4,783.2 L1660.7,786.3 L1659.4,787.3 L1659.6,789.9 L1657.6,792.2 L1656.9,793.5 L1655.5,796.4 L1655.6,798.0 L1655.4,800.3 L1654.4,801.4 L1652.0,804.2 L1651.9,807.2 L1649.7,808.2 L1648.7,810.7 L1648.5,812.2 L1647.7,815.1 L1647.5,817.0 L1647.2,818.3 L1648.1,819.5 L1649.0,820.9 L1651.5,821.8 L1652.6,824.1 L1654.9,824.2 L1656.8,826.1 L1659.5,827.9 L1662.5,829.0 L1663.2,828.7 L1664.3,830.5 L1665.7,831.7 L1666.3,833.6 L1665.2,835.6 L1664.8,838.0 L1663.5,840.3 L1661.6,841.1 L1659.9,843.1 L1657.3,845.0 L1655.9,845.7 L1654.3,846.2 L1651.6,846.9 L1649.3,848.5 L1647.8,848.1 L1645.3,849.7 L1643.3,849.0 L1641.7,850.2 L1640.1,850.0 L1637.7,851.4 L1635.9,853.2 L1635.2,854.8 L1632.9,855.4 L1632.1,856.8 L1632.2,859.0 L1630.4,860.3 L1627.2,861.9 L1626.4,862.4 L1623.8,863.6 L1623.1,863.3 L1620.6,864.8 L1617.9,865.1 L1615.6,865.6 L1613.6,867.0 L1612.0,867.0 L1608.7,867.9 L1607.5,868.2 L1604.7,868.8 L1603.4,869.8 L1600.2,869.5 L1598.9,870.5 L1597.5,869.9 L1595.8,870.6 L1592.9,870.5 L1591.8,868.7 L1590.7,868.3 L1589.8,866.0 L1588.9,864.0 L1588.2,863.4 L1585.0,861.1 L1581.8,861.2 L1580.8,860.8 L1578.1,862.0 L1577.1,862.1 L1575.3,862.4 L1573.5,861.6 L1570.7,862.5 L1569.6,863.5 L1566.5,863.5 L1564.7,863.8 L1562.0,863.9 L1560.2,865.5 L1557.2,865.3 L1555.9,866.6 L1552.6,865.8 L1551.4,867.7 L1548.3,866.7 L1546.7,867.8 L1544.4,868.6 L1542.1,868.3 L1540.0,868.8 L1537.4,870.2 L1536.2,869.5 L1533.4,870.1 L1532.3,870.2 L1530.2,870.1 L1529.5,870.6 L1526.0,870.8 L1523.1,868.9 L1523.6,866.3 L1523.3,864.5 L1521.8,863.3 L1519.0,861.9 L1517.7,861.3 L1515.7,861.4 L1513.9,861.3 L1511.9,860.7 L1509.1,860.8 L1507.6,860.0 L1505.7,860.7 L1502.8,859.6 L1500.5,859.3 L1497.5,859.7 L1495.1,859.5 L1493.5,858.7 L1491.5,858.6 L1489.6,859.6 L1487.3,858.2 L1485.6,858.5 L1484.0,858.4 L1481.9,856.9 L1480.1,857.1 L1478.8,855.6 L1476.9,854.6 L1476.0,853.5 L1474.4,851.6 L1470.1,852.1 L1469.2,852.9 L1466.4,852.2 L1465.8,852.1 L1464.2,852.6 L1462.1,852.8 L1459.5,854.5 L1456.9,853.9 L1455.1,854.5 L1452.0,854.9 L1449.9,856.6 L1448.3,857.1 L1445.1,857.5 L1442.6,857.7 L1441.1,858.0 L1439.1,858.9 L1436.3,859.9 L1433.3,860.6 L1432.0,860.1 L1430.2,860.3 L1428.5,861.2 L1425.7,861.8 L1424.1,861.1 L1423.0,861.1 L1421.2,861.9 L1418.1,861.3 L1415.7,861.5 L1414.4,859.6 L1413.1,857.0 L1411.5,855.7 L1410.6,854.9 L1407.3,854.2 L1405.8,854.7 L1403.6,853.4 L1402.6,853.0 L1399.6,853.4 L1397.7,853.3 L1395.7,853.6 L1394.0,852.9 L1391.8,853.3 L1388.6,854.0 L1386.4,852.7 L1383.7,853.6 L1382.6,853.8 L1379.5,853.1 L1376.5,853.8 L1375.2,853.5 L1373.1,853.8 L1371.5,854.5 L1368.5,855.0 L1366.3,854.6 L1365.4,854.9 L1362.8,855.1 L1360.1,856.9 L1358.2,857.6 L1358.1,858.1 L1355.4,860.1 L1354.5,861.4 L1353.6,861.9 L1351.4,863.4 L1349.4,865.4 L1348.9,866.1 L1345.8,867.1 L1344.4,867.1 L1343.1,867.3 L1341.2,867.4 L1338.3,867.0 L1336.2,866.9 L1334.1,868.0 L1332.4,868.1 L1330.1,867.0 L1327.5,867.1 L1325.6,867.0 L1322.4,867.0 L1321.3,866.0 L1319.0,865.4 L1315.9,865.5 L1314.8,866.3 L1313.0,865.0 L1311.5,864.7 L1309.5,864.7 L1306.0,864.4 L1304.7,862.9 L1303.4,862.0 L1302.1,860.4 L1301.2,859.2 L1299.0,857.7 L1297.0,857.4 L1295.0,856.2 L1292.1,856.1 L1289.4,856.1 L1287.1,854.3 L1284.8,855.5 L1283.1,854.2 L1281.6,854.9 L1278.9,855.3 L1279.1,858.3 L1277.9,860.6 L1274.6,861.9 L1272.5,862.4 L1271.4,863.2 L1270.3,863.7 L1267.2,864.1 L1266.5,864.6 L1263.0,863.8 L1260.7,863.8 L1259.6,865.3 L1257.0,865.6 L1254.8,864.9 L1251.8,864.6 L1250.7,864.7 L1248.1,864.9 L1246.6,864.7 L1243.8,863.6 L1242.3,863.3 L1240.6,861.3 L1239.9,860.1 L1238.0,858.6 L1235.1,856.6 L1234.2,855.6 L1232.4,854.1 L1231.0,852.1 L1229.8,851.1 L1227.4,851.4 L1226.1,851.0 L1223.0,851.5 L1222.4,853.5 L1219.4,853.8 L1218.3,855.4 L1215.9,856.2 L1214.2,858.1 L1212.1,859.5 L1210.2,859.5 L1208.9,860.9 L1206.0,861.8 L1204.7,861.9 L1202.0,862.3 L1200.9,861.9 L1198.6,860.6 L1196.0,859.8 L1194.5,858.4 L1192.2,857.2 L1189.0,856.6 L1188.0,856.1 L1185.1,856.0 L1183.1,854.8 L1181.8,855.1 L1180.3,854.9 L1179.1,856.1 L1177.2,857.3 L1175.9,860.3 L1176.0,862.6 L1174.6,864.7 L1174.9,867.4 L1173.1,869.3 L1173.4,870.5 L1171.6,871.7 L1169.7,871.3 L1169.0,871.4 L1166.5,868.9 L1165.0,867.5 L1163.7,865.5 L1161.5,863.7 L1160.6,863.1 L1157.3,862.4 L1155.9,861.2 L1153.6,861.2 L1153.2,862.4 L1150.9,862.7 L1148.2,864.1 L1146.1,864.6 L1144.6,865.6 L1142.6,868.0 L1141.1,868.7 L1139.0,869.6 L1136.3,870.5 L1134.9,870.6 L1132.8,870.9 L1131.6,870.0 L1129.1,869.9 L1126.8,868.3 L1125.3,868.4 L1123.4,867.2 L1121.5,866.2 L1119.3,865.0 L1117.0,864.5 L1114.9,863.7 L1114.0,863.6 L1111.9,864.3 L1109.3,864.6 L1106.9,866.4 L1105.4,867.7 L1103.7,869.5 L1101.7,869.0 L1100.0,868.5 L1100.5,866.6 L1099.7,865.7 L1098.1,863.1 L1096.4,861.7 L1093.4,859.8 L1092.8,859.5 L1090.0,859.4 L1089.1,859.3 L1087.2,858.9 L1085.8,858.5 L1083.1,858.9 L1080.7,858.3 L1078.7,858.2 L1076.0,858.3 L1074.0,856.6 L1071.5,857.0 L1068.7,856.8 L1067.0,857.1 L1064.5,856.2 L1062.0,856.8 L1060.9,856.4 L1057.5,856.7 L1055.6,855.6 L1053.2,856.4 L1052.4,856.1 L1050.0,856.0 L1048.0,856.6 L1047.0,855.8 L1043.5,856.1 L1041.9,856.7 L1039.7,856.3 L1038.6,856.6 L1037.9,857.5 L1036.4,857.9 L1033.4,858.4 L1030.5,859.1 L1028.9,858.7 L1026.5,859.6 L1025.1,858.9 L1023.1,859.3 L1021.2,859.5 L1019.4,859.1 L1017.6,859.9 L1013.8,859.8 L1012.8,859.7 L1009.2,859.8 L1007.6,858.5 L1004.2,859.9 L1002.8,858.8 L999.7,858.7 L997.7,859.7 L995.7,858.7 L994.6,859.8 L991.5,860.0 L990.5,860.0 L989.0,860.3 L987.4,859.8 L985.0,861.5 L984.2,862.8 L985.3,864.6 L983.6,866.3 L977.4,866.4 L976.3,866.0 L974.5,865.9 L973.5,865.7 L972.0,865.9 L970.4,866.4 L968.7,867.0 L966.1,867.0 L964.9,866.5 L963.3,866.9 L960.8,866.2 L959.6,865.6 L957.0,866.4 L953.8,866.3 L952.6,866.8 L949.7,866.8 L947.7,865.9 L945.9,865.1 L943.2,865.9 L940.2,866.2 L937.8,865.5 L935.6,865.9 L932.7,865.2 L930.6,865.3 L928.8,864.8 L926.4,864.8 L923.4,864.5 L921.1,865.5 L919.0,865.1 L916.1,864.2 L913.8,864.5 L912.2,864.7 L909.1,864.4 L908.3,864.0 L904.9,863.4 L902.9,863.1 L902.5,863.6 L900.3,863.8 L899.0,863.3 L896.9,863.2 L895.5,863.0 L894.1,862.2 L892.7,862.5 L891.3,862.4 L885.7,860.4 L881.9,858.5 L882.2,858.0 L882.3,855.3 L882.8,854.4 L881.3,853.1 L879.4,852.5 L876.8,852.9 L874.6,853.4 L872.9,855.0 L869.6,855.4 L868.1,856.4 L865.7,856.8 L865.4,859.0 L863.9,860.4 L860.9,861.9 L860.2,864.4 L859.1,865.0 L856.5,865.3 L854.8,866.4 L853.3,865.8 L850.7,864.9 L848.6,865.0 L846.9,864.4 L844.9,862.9 L843.1,860.3 L842.2,859.4 L840.4,858.3 L838.3,858.1 L835.1,857.7 L833.8,857.2 L831.6,855.4 L829.3,856.2 L826.9,856.6 L825.0,856.4 L823.0,858.1 L822.4,858.2 L819.9,861.1 L819.9,862.1 L817.8,864.9 L816.1,866.4 L815.1,866.4 L813.4,865.4 L811.5,865.4 L809.9,864.2 L807.6,862.9 L806.0,861.0 L804.3,859.1 L801.8,858.1 L799.9,857.9 L798.9,857.1 L796.3,855.6 L793.5,855.9 L792.4,855.0 L789.7,854.0 L788.7,853.9 L786.0,852.8 L783.8,853.6 L782.0,853.1 L780.1,853.9 L779.1,855.1 L778.4,855.3 L776.2,856.7 L775.7,858.7 L774.8,860.6 L771.4,861.8 L769.8,862.9 L765.4,863.1 L764.2,862.9 L763.1,863.9 L761.2,864.2 L758.9,863.0 L757.4,864.2 L754.8,864.2 L754.0,863.5 L751.3,864.3 L748.9,863.6 L746.2,864.5 L744.8,864.1 L741.3,864.7 L740.0,863.8 L737.3,864.8 L735.3,864.2 L732.2,864.3 L729.3,863.7 L726.9,864.4 L724.8,864.2 L722.6,864.1 L719.9,863.3 L719.0,863.7 L715.4,864.1 L714.4,863.2 L712.1,863.5 L710.1,862.9 L707.5,864.3 L707.2,863.4 L705.2,862.9 L704.1,863.1 L702.4,863.1 L698.4,862.7 L695.7,861.8 L693.7,858.9 L693.4,857.7 L692.9,856.1 L692.5,855.8 L690.6,855.5 L688.4,854.8 L687.2,852.8 L684.7,853.0 L682.5,853.1 L680.0,854.0 L678.3,853.9 L677.0,855.2 L675.1,855.2 L672.6,856.4 L671.1,856.8 L670.7,859.4 L668.3,859.2 L666.9,861.1 L666.0,863.3 L663.3,863.1 L659.3,864.7 L658.3,865.3 L656.5,865.9 L653.8,864.8 L653.0,866.3 L650.8,865.4 L648.6,866.3 L645.6,865.8 L643.5,865.6 L641.5,865.8 L638.8,865.9 L637.1,865.7 L634.8,866.1 L631.3,867.3 L629.3,867.4 L628.1,867.3 L624.8,866.6 L622.6,867.4 L621.9,866.9 L619.4,866.3 L618.3,866.5 L616.3,866.4 L613.3,865.4 L610.2,864.5 L609.1,864.4 L606.6,864.0 L605.4,862.2 L603.6,861.0 L602.8,860.2 L599.7,859.8 L597.4,859.5 L595.8,859.8 L593.5,859.6 L591.2,859.2 L590.0,857.9 L587.5,857.8 L584.8,857.4 L582.7,858.5 L581.4,858.2 L577.7,857.1 L576.7,856.6 L574.3,856.9 L572.6,856.4 L569.9,857.1 L568.0,856.8 L564.6,856.3 L563.4,857.2 L560.2,857.2 L559.2,856.9 L556.5,857.0 L553.9,858.2 L552.7,857.6 L549.7,857.7 L548.7,858.7 L546.7,859.1 L544.2,859.3 L542.7,861.0 L541.1,861.9 L538.3,862.1 L537.3,863.8 L535.6,864.2 L534.0,865.5 L532.4,866.8 L530.2,866.4 L528.2,865.2 L527.1,865.0 L525.4,863.4 L522.6,862.8 L521.1,860.1 L519.1,859.4 L516.9,858.1 L514.3,857.5 L513.1,856.9 L510.4,856.5 L509.3,856.2 L506.2,855.3 L503.9,854.8 L501.1,854.6 L500.3,853.6 L497.5,853.3 L495.5,852.4 L493.7,853.1 L492.1,853.0 L488.8,853.5 L487.1,855.7 L485.1,855.7 L484.5,857.0 L481.7,858.6 L480.5,859.1 L478.7,859.5 L476.9,859.2 L475.0,860.5 L471.6,859.8 L470.1,860.5 L467.7,859.8 L465.8,859.6 L463.9,859.8 L462.2,859.6 L459.7,858.1 L459.0,856.1 L457.5,855.8 L455.1,853.5 L453.9,852.4 L451.2,851.9 L449.0,850.5 L447.7,849.9 L444.8,849.7 L443.0,850.5 L441.4,850.3 L439.1,850.2 L435.5,849.7 L434.7,850.5 L431.3,849.9 L429.7,850.0 L427.5,849.9 L425.6,851.0 L424.1,851.5 L421.1,852.1 L421.0,854.8 L419.6,856.6 L418.3,859.0 L417.3,859.6 L415.8,861.6 L414.2,863.1 L412.2,863.6 L409.7,865.0 L407.4,863.8 L404.9,863.6 L402.6,863.1 L401.6,861.9 L398.9,861.2 L397.0,859.7 L396.7,858.1 L394.0,856.7 L392.6,855.8 L390.4,854.5 L387.3,853.8 L385.1,854.0 L382.8,853.8 L381.0,854.8 L378.8,856.1 L378.6,858.1 L376.8,860.4 L374.9,862.6 L374.1,864.0 L372.8,864.7 L371.7,864.1 L370.4,862.0 L369.2,860.3 L367.6,858.4 L364.5,857.1 L362.3,856.7 L362.0,856.4 L359.7,856.7 L357.2,857.5 L355.1,857.1 L352.6,856.0 L351.4,856.7 L347.7,856.7 L345.9,857.4 L343.0,856.7 L342.0,857.8 L338.5,857.4 L336.6,858.2 L335.0,858.9 L333.5,858.7 L331.3,859.1 L329.5,860.4 L327.8,861.1 L326.4,862.9 L325.4,863.4 L324.3,864.8 L322.9,867.3 L321.2,869.3 L319.7,869.6 L317.9,871.4 L314.8,871.4 L313.5,871.4 L311.5,871.6 L310.1,871.5 L307.6,871.9 L305.5,871.5 L304.0,872.3 L301.3,871.6 L298.5,871.2 L296.1,871.5 L294.4,870.5 L292.5,870.7 L290.0,871.3 L287.9,870.0 L284.7,870.9 L281.8,869.2 L280.6,869.6 L279.1,869.7 L276.6,869.8 L274.8,868.7 L273.4,868.1 L271.7,868.0 L268.6,867.2 L266.8,866.5 L266.2,864.5 L264.5,862.8 L264.2,861.6 L263.3,860.8 L262.1,859.0 L258.5,858.1 L257.0,858.0 L256.2,857.3 L253.7,857.9 L251.2,856.9 L250.5,857.6 L247.6,856.3 L246.0,857.1 L243.6,857.5 L241.4,856.5 L237.8,856.2 L236.0,856.5 L233.1,855.9 L231.4,856.5 L228.7,857.1 L226.9,855.5 L224.3,856.7 L222.1,856.5 L219.6,855.8 L219.1,856.1 L217.2,855.4 L215.4,855.8 L212.0,855.5 L208.9,855.3 L207.0,855.5 L205.1,854.2 L202.8,853.4 L202.3,853.0 L199.7,852.8 L198.8,853.1 L195.8,853.2 L193.4,852.8 L190.3,851.6 L188.9,853.1 L187.9,854.2 L186.8,856.4 L184.9,858.6 L183.5,861.7 L182.2,862.4 L180.9,862.6 L179.1,862.8 L176.8,863.6 L175.7,863.6 L173.4,862.8 L170.8,861.5 L169.3,862.4 L165.7,861.4 L163.8,861.8 L162.9,860.6 L160.7,861.3 L158.6,860.9 L156.1,859.5 L154.8,858.8 L152.0,859.4 L150.1,858.9 L147.5,857.4 L145.4,857.0 L144.2,856.8 L141.3,856.1 L139.0,856.2 L136.6,855.5 L134.0,856.5 L132.5,855.8 L130.2,855.3 L127.8,855.3 L125.7,854.9 L124.1,855.4 L121.1,856.1 L118.8,855.5 L117.7,855.3 L114.9,856.6 L113.3,855.7 L110.5,856.8 L108.4,857.4 L106.2,857.6 L104.7,856.7 L102.7,856.9 L101.4,857.4 L99.4,858.1 L97.6,858.9 L94.5,859.2 L92.9,860.2 L91.5,861.1 L89.2,862.9 L87.2,864.3 L85.8,865.1 L84.5,865.3 L82.6,865.5 L81.2,866.4 L78.7,866.7 L77.0,865.6 L74.7,864.3 L73.3,862.8 L71.4,860.8 L69.6,859.8 L67.5,859.8 L66.3,859.1 L64.1,859.3 L63.2,860.7 L61.2,862.0 L58.1,862.3 L56.0,864.3 L55.2,865.0 L53.0,866.3 L51.4,866.4 L49.6,865.7 L47.9,864.9 L45.7,863.4 L43.1,863.1 L42.2,861.3 L39.8,859.8 L37.3,858.2 L35.7,857.6 L34.1,857.1 L31.8,856.2 L30.8,855.3 L29.1,855.4 L26.5,854.8 L24.9,854.2 L22.3,854.7 L20.0,853.6 L18.6,854.9 L15.5,853.8 L14.3,854.8 L11.0,854.3 L10.0,854.8 L6.8,855.4 L4.6,855.8 L3.4,854.8 L1.6,855.5 L0.0,855.8 L-40,855.8 L-40,0 Z" clip-rule="evenodd"/></clipPath></defs>
<path d="M-20,-20 H1720 V920 H-20 Z M0,0 L1659.0,0.0 L1657.4,0.2 L1656.0,1.2 L1653.7,3.0 L1651.1,4.8 L1650.6,6.7 L1649.5,8.5 L1649.6,10.2 L1650.4,13.9 L1650.4,15.4 L1651.7,18.8 L1652.0,20.0 L1653.7,22.5 L1656.2,23.9 L1655.6,26.8 L1655.1,27.5 L1652.0,28.2 L1649.9,30.4 L1647.3,31.1 L1645.9,31.9 L1644.4,32.8 L1644.0,35.0 L1643.8,35.7 L1645.9,37.3 L1646.8,38.9 L1648.8,39.8 L1651.3,42.0 L1652.5,43.3 L1655.0,45.2 L1657.2,45.7 L1659.3,46.9 L1659.7,49.2 L1660.7,50.0 L1660.5,52.3 L1659.3,54.7 L1658.9,56.4 L1657.8,57.9 L1657.0,60.0 L1658.4,61.7 L1660.1,63.0 L1662.7,65.2 L1664.3,66.2 L1665.4,67.7 L1667.0,68.8 L1667.1,71.2 L1666.5,71.6 L1664.4,73.7 L1661.9,75.1 L1660.7,77.0 L1658.8,77.6 L1656.9,79.8 L1655.1,80.3 L1653.4,82.7 L1650.9,83.4 L1649.9,85.5 L1648.9,86.9 L1647.0,87.5 L1647.0,89.0 L1647.1,90.9 L1649.1,91.0 L1649.3,92.3 L1651.2,93.9 L1653.7,94.8 L1654.8,96.3 L1657.4,97.9 L1660.1,99.5 L1660.7,100.7 L1662.0,102.8 L1663.5,104.0 L1665.1,107.5 L1666.2,109.8 L1666.3,111.5 L1666.5,114.0 L1666.7,115.1 L1667.4,117.4 L1666.2,118.5 L1665.0,119.4 L1662.6,120.4 L1660.7,121.6 L1658.3,123.3 L1657.0,124.0 L1655.5,124.6 L1652.9,126.2 L1651.0,127.2 L1649.6,130.1 L1647.0,130.8 L1644.8,131.8 L1644.1,133.8 L1644.0,136.0 L1644.7,136.9 L1644.1,139.6 L1645.8,139.9 L1647.1,141.4 L1648.4,144.6 L1650.5,145.9 L1651.1,147.1 L1652.5,149.4 L1654.6,151.2 L1655.6,151.9 L1657.0,154.0 L1658.7,156.7 L1660.1,158.3 L1661.4,160.1 L1661.7,161.7 L1663.0,162.7 L1663.5,165.0 L1664.6,167.5 L1666.3,169.0 L1665.7,171.0 L1666.2,173.7 L1665.7,174.6 L1663.8,176.2 L1662.8,178.1 L1662.3,181.1 L1661.4,182.3 L1659.8,184.7 L1657.6,186.4 L1657.0,188.0 L1656.4,190.1 L1654.8,191.4 L1652.3,193.6 L1650.9,195.3 L1650.3,196.4 L1647.8,199.0 L1647.0,199.4 L1644.8,201.0 L1645.2,203.7 L1644.0,204.7 L1643.3,207.3 L1644.9,208.9 L1644.7,210.5 L1645.4,211.4 L1648.2,214.3 L1649.0,216.6 L1650.6,218.0 L1651.7,220.0 L1653.9,220.5 L1654.7,222.1 L1656.5,224.2 L1658.5,225.6 L1660.2,228.0 L1662.4,228.9 L1664.4,231.2 L1665.5,232.8 L1666.7,233.6 L1667.4,235.0 L1667.8,236.2 L1667.3,238.3 L1665.7,241.0 L1664.8,242.1 L1664.2,244.0 L1662.0,245.8 L1660.7,248.0 L1659.8,249.9 L1657.9,251.1 L1656.8,252.2 L1656.2,254.3 L1654.4,256.4 L1653.5,257.7 L1651.6,259.5 L1650.1,261.6 L1648.8,263.1 L1648.0,265.5 L1647.7,267.0 L1647.0,268.0 L1647.9,269.6 L1648.1,272.7 L1649.8,273.3 L1650.2,275.6 L1651.8,277.1 L1653.4,279.6 L1656.0,281.8 L1656.0,283.4 L1657.0,285.0 L1657.1,286.2 L1656.8,289.4 L1654.9,291.3 L1654.0,292.5 L1653.7,295.0 L1651.1,296.2 L1650.5,297.9 L1649.1,299.7 L1649.4,301.0 L1649.0,303.4 L1649.7,305.2 L1650.1,306.8 L1652.7,308.7 L1653.8,311.0 L1656.9,312.5 L1657.6,313.0 L1659.0,315.4 L1660.7,316.8 L1660.7,318.2 L1660.9,321.5 L1661.1,322.5 L1659.5,325.8 L1659.6,327.6 L1658.4,328.7 L1659.1,331.4 L1659.0,333.6 L1659.0,336.3 L1661.0,338.1 L1661.6,340.2 L1663.1,342.1 L1665.1,343.2 L1666.5,346.0 L1666.8,346.5 L1667.4,348.7 L1666.9,350.0 L1665.1,351.4 L1663.4,352.8 L1662.0,354.3 L1660.8,355.6 L1658.5,356.8 L1657.0,358.8 L1655.4,359.6 L1653.8,361.1 L1653.1,363.5 L1650.9,365.0 L1651.0,366.1 L1649.9,368.4 L1649.0,370.5 L1649.0,372.9 L1649.1,374.5 L1650.1,377.5 L1650.2,379.5 L1651.6,381.5 L1652.1,383.2 L1652.4,384.9 L1654.0,387.3 L1654.5,389.7 L1656.2,390.6 L1657.5,393.2 L1660.2,394.4 L1660.7,395.3 L1662.3,397.4 L1663.2,399.2 L1664.2,401.2 L1665.5,404.0 L1667.6,405.4 L1667.0,408.0 L1667.4,409.0 L1666.3,410.6 L1664.2,412.4 L1663.0,414.1 L1660.4,415.8 L1659.0,417.5 L1656.7,418.7 L1655.3,420.5 L1653.7,421.5 L1652.7,423.5 L1651.8,425.8 L1650.6,427.6 L1650.2,429.9 L1649.5,432.3 L1648.4,433.6 L1649.0,435.6 L1648.4,438.8 L1648.0,441.0 L1647.4,443.5 L1649.1,445.2 L1649.3,447.6 L1648.9,449.3 L1650.0,452.0 L1650.8,454.2 L1650.7,456.4 L1650.6,457.8 L1650.5,460.4 L1649.0,461.5 L1647.8,464.2 L1646.7,467.1 L1646.5,468.8 L1646.0,471.0 L1645.6,472.9 L1645.9,474.0 L1647.0,477.1 L1647.3,478.7 L1648.6,479.9 L1649.8,482.1 L1649.8,484.0 L1651.8,485.7 L1652.3,488.0 L1653.6,490.8 L1654.3,491.9 L1655.3,494.3 L1656.7,496.2 L1657.2,497.2 L1656.8,499.3 L1657.3,501.4 L1656.9,502.6 L1655.2,503.5 L1652.6,505.1 L1651.7,507.0 L1649.8,507.6 L1648.1,509.5 L1647.2,511.5 L1646.9,512.5 L1647.6,514.4 L1647.8,517.5 L1646.6,518.8 L1648.3,521.7 L1648.2,522.7 L1648.3,526.0 L1648.9,527.6 L1649.4,529.6 L1650.6,531.6 L1652.1,533.0 L1652.8,535.5 L1654.0,537.7 L1654.1,539.9 L1655.7,540.5 L1656.1,543.2 L1657.7,544.9 L1658.0,547.0 L1658.7,550.0 L1659.0,551.7 L1657.9,553.9 L1658.8,554.7 L1658.2,557.7 L1657.3,559.1 L1655.4,561.4 L1655.4,563.9 L1653.2,565.8 L1651.9,567.3 L1650.5,570.6 L1649.7,572.8 L1648.7,573.6 L1648.3,575.2 L1647.4,578.0 L1647.2,578.6 L1647.4,582.5 L1647.7,584.6 L1649.6,585.3 L1650.6,586.7 L1652.3,587.0 L1654.0,588.5 L1656.0,589.6 L1657.1,589.6 L1659.9,591.0 L1660.7,593.4 L1661.5,594.7 L1662.2,597.0 L1664.2,598.1 L1664.5,600.1 L1665.1,602.4 L1665.1,604.3 L1665.5,607.8 L1666.0,609.0 L1665.7,611.9 L1665.9,614.3 L1664.5,614.7 L1663.2,616.4 L1662.3,618.3 L1661.0,620.5 L1660.2,623.4 L1659.2,624.6 L1657.3,626.7 L1656.0,628.4 L1654.4,630.1 L1654.8,631.7 L1653.2,634.2 L1653.2,635.1 L1652.3,637.0 L1652.0,639.1 L1653.1,641.6 L1655.4,644.1 L1656.9,644.4 L1657.3,647.2 L1660.2,648.5 L1660.7,650.5 L1661.7,651.7 L1662.2,655.2 L1663.7,657.1 L1664.5,658.2 L1663.5,660.2 L1664.3,663.4 L1664.0,665.6 L1664.3,667.7 L1663.2,669.6 L1662.0,671.1 L1660.4,673.4 L1659.6,675.6 L1659.2,676.7 L1657.2,678.7 L1656.9,681.5 L1655.1,682.6 L1654.8,685.5 L1654.0,687.4 L1653.2,688.8 L1652.9,690.4 L1651.8,692.9 L1652.2,695.1 L1651.5,696.7 L1649.9,698.2 L1650.6,700.9 L1649.2,701.7 L1649.2,704.8 L1648.9,706.2 L1649.2,709.4 L1649.0,710.9 L1648.8,712.0 L1649.3,714.5 L1650.4,716.1 L1651.3,719.0 L1651.5,720.3 L1653.1,722.6 L1653.7,724.6 L1653.5,727.5 L1654.5,730.0 L1655.5,730.8 L1655.7,733.3 L1657.0,736.1 L1656.5,737.2 L1656.8,740.0 L1657.3,741.0 L1656.4,742.4 L1655.5,745.0 L1655.8,747.8 L1654.3,750.0 L1653.2,750.8 L1650.5,753.6 L1650.0,753.9 L1648.5,756.2 L1646.9,757.8 L1645.7,758.9 L1645.3,761.1 L1645.6,762.9 L1646.8,764.1 L1648.0,765.8 L1648.6,768.3 L1651.2,769.1 L1652.0,770.5 L1654.6,772.6 L1656.3,773.1 L1659.2,774.0 L1659.7,776.8 L1660.7,778.0 L1661.4,779.1 L1660.3,781.0 L1661.4,783.2 L1660.7,786.3 L1659.4,787.3 L1659.6,789.9 L1657.6,792.2 L1656.9,793.5 L1655.5,796.4 L1655.6,798.0 L1655.4,800.3 L1654.4,801.4 L1652.0,804.2 L1651.9,807.2 L1649.7,808.2 L1648.7,810.7 L1648.5,812.2 L1647.7,815.1 L1647.5,817.0 L1647.2,818.3 L1648.1,819.5 L1649.0,820.9 L1651.5,821.8 L1652.6,824.1 L1654.9,824.2 L1656.8,826.1 L1659.5,827.9 L1662.5,829.0 L1663.2,828.7 L1664.3,830.5 L1665.7,831.7 L1666.3,833.6 L1665.2,835.6 L1664.8,838.0 L1663.5,840.3 L1661.6,841.1 L1659.9,843.1 L1657.3,845.0 L1655.9,845.7 L1654.3,846.2 L1651.6,846.9 L1649.3,848.5 L1647.8,848.1 L1645.3,849.7 L1643.3,849.0 L1641.7,850.2 L1640.1,850.0 L1637.7,851.4 L1635.9,853.2 L1635.2,854.8 L1632.9,855.4 L1632.1,856.8 L1632.2,859.0 L1630.4,860.3 L1627.2,861.9 L1626.4,862.4 L1623.8,863.6 L1623.1,863.3 L1620.6,864.8 L1617.9,865.1 L1615.6,865.6 L1613.6,867.0 L1612.0,867.0 L1608.7,867.9 L1607.5,868.2 L1604.7,868.8 L1603.4,869.8 L1600.2,869.5 L1598.9,870.5 L1597.5,869.9 L1595.8,870.6 L1592.9,870.5 L1591.8,868.7 L1590.7,868.3 L1589.8,866.0 L1588.9,864.0 L1588.2,863.4 L1585.0,861.1 L1581.8,861.2 L1580.8,860.8 L1578.1,862.0 L1577.1,862.1 L1575.3,862.4 L1573.5,861.6 L1570.7,862.5 L1569.6,863.5 L1566.5,863.5 L1564.7,863.8 L1562.0,863.9 L1560.2,865.5 L1557.2,865.3 L1555.9,866.6 L1552.6,865.8 L1551.4,867.7 L1548.3,866.7 L1546.7,867.8 L1544.4,868.6 L1542.1,868.3 L1540.0,868.8 L1537.4,870.2 L1536.2,869.5 L1533.4,870.1 L1532.3,870.2 L1530.2,870.1 L1529.5,870.6 L1526.0,870.8 L1523.1,868.9 L1523.6,866.3 L1523.3,864.5 L1521.8,863.3 L1519.0,861.9 L1517.7,861.3 L1515.7,861.4 L1513.9,861.3 L1511.9,860.7 L1509.1,860.8 L1507.6,860.0 L1505.7,860.7 L1502.8,859.6 L1500.5,859.3 L1497.5,859.7 L1495.1,859.5 L1493.5,858.7 L1491.5,858.6 L1489.6,859.6 L1487.3,858.2 L1485.6,858.5 L1484.0,858.4 L1481.9,856.9 L1480.1,857.1 L1478.8,855.6 L1476.9,854.6 L1476.0,853.5 L1474.4,851.6 L1470.1,852.1 L1469.2,852.9 L1466.4,852.2 L1465.8,852.1 L1464.2,852.6 L1462.1,852.8 L1459.5,854.5 L1456.9,853.9 L1455.1,854.5 L1452.0,854.9 L1449.9,856.6 L1448.3,857.1 L1445.1,857.5 L1442.6,857.7 L1441.1,858.0 L1439.1,858.9 L1436.3,859.9 L1433.3,860.6 L1432.0,860.1 L1430.2,860.3 L1428.5,861.2 L1425.7,861.8 L1424.1,861.1 L1423.0,861.1 L1421.2,861.9 L1418.1,861.3 L1415.7,861.5 L1414.4,859.6 L1413.1,857.0 L1411.5,855.7 L1410.6,854.9 L1407.3,854.2 L1405.8,854.7 L1403.6,853.4 L1402.6,853.0 L1399.6,853.4 L1397.7,853.3 L1395.7,853.6 L1394.0,852.9 L1391.8,853.3 L1388.6,854.0 L1386.4,852.7 L1383.7,853.6 L1382.6,853.8 L1379.5,853.1 L1376.5,853.8 L1375.2,853.5 L1373.1,853.8 L1371.5,854.5 L1368.5,855.0 L1366.3,854.6 L1365.4,854.9 L1362.8,855.1 L1360.1,856.9 L1358.2,857.6 L1358.1,858.1 L1355.4,860.1 L1354.5,861.4 L1353.6,861.9 L1351.4,863.4 L1349.4,865.4 L1348.9,866.1 L1345.8,867.1 L1344.4,867.1 L1343.1,867.3 L1341.2,867.4 L1338.3,867.0 L1336.2,866.9 L1334.1,868.0 L1332.4,868.1 L1330.1,867.0 L1327.5,867.1 L1325.6,867.0 L1322.4,867.0 L1321.3,866.0 L1319.0,865.4 L1315.9,865.5 L1314.8,866.3 L1313.0,865.0 L1311.5,864.7 L1309.5,864.7 L1306.0,864.4 L1304.7,862.9 L1303.4,862.0 L1302.1,860.4 L1301.2,859.2 L1299.0,857.7 L1297.0,857.4 L1295.0,856.2 L1292.1,856.1 L1289.4,856.1 L1287.1,854.3 L1284.8,855.5 L1283.1,854.2 L1281.6,854.9 L1278.9,855.3 L1279.1,858.3 L1277.9,860.6 L1274.6,861.9 L1272.5,862.4 L1271.4,863.2 L1270.3,863.7 L1267.2,864.1 L1266.5,864.6 L1263.0,863.8 L1260.7,863.8 L1259.6,865.3 L1257.0,865.6 L1254.8,864.9 L1251.8,864.6 L1250.7,864.7 L1248.1,864.9 L1246.6,864.7 L1243.8,863.6 L1242.3,863.3 L1240.6,861.3 L1239.9,860.1 L1238.0,858.6 L1235.1,856.6 L1234.2,855.6 L1232.4,854.1 L1231.0,852.1 L1229.8,851.1 L1227.4,851.4 L1226.1,851.0 L1223.0,851.5 L1222.4,853.5 L1219.4,853.8 L1218.3,855.4 L1215.9,856.2 L1214.2,858.1 L1212.1,859.5 L1210.2,859.5 L1208.9,860.9 L1206.0,861.8 L1204.7,861.9 L1202.0,862.3 L1200.9,861.9 L1198.6,860.6 L1196.0,859.8 L1194.5,858.4 L1192.2,857.2 L1189.0,856.6 L1188.0,856.1 L1185.1,856.0 L1183.1,854.8 L1181.8,855.1 L1180.3,854.9 L1179.1,856.1 L1177.2,857.3 L1175.9,860.3 L1176.0,862.6 L1174.6,864.7 L1174.9,867.4 L1173.1,869.3 L1173.4,870.5 L1171.6,871.7 L1169.7,871.3 L1169.0,871.4 L1166.5,868.9 L1165.0,867.5 L1163.7,865.5 L1161.5,863.7 L1160.6,863.1 L1157.3,862.4 L1155.9,861.2 L1153.6,861.2 L1153.2,862.4 L1150.9,862.7 L1148.2,864.1 L1146.1,864.6 L1144.6,865.6 L1142.6,868.0 L1141.1,868.7 L1139.0,869.6 L1136.3,870.5 L1134.9,870.6 L1132.8,870.9 L1131.6,870.0 L1129.1,869.9 L1126.8,868.3 L1125.3,868.4 L1123.4,867.2 L1121.5,866.2 L1119.3,865.0 L1117.0,864.5 L1114.9,863.7 L1114.0,863.6 L1111.9,864.3 L1109.3,864.6 L1106.9,866.4 L1105.4,867.7 L1103.7,869.5 L1101.7,869.0 L1100.0,868.5 L1100.5,866.6 L1099.7,865.7 L1098.1,863.1 L1096.4,861.7 L1093.4,859.8 L1092.8,859.5 L1090.0,859.4 L1089.1,859.3 L1087.2,858.9 L1085.8,858.5 L1083.1,858.9 L1080.7,858.3 L1078.7,858.2 L1076.0,858.3 L1074.0,856.6 L1071.5,857.0 L1068.7,856.8 L1067.0,857.1 L1064.5,856.2 L1062.0,856.8 L1060.9,856.4 L1057.5,856.7 L1055.6,855.6 L1053.2,856.4 L1052.4,856.1 L1050.0,856.0 L1048.0,856.6 L1047.0,855.8 L1043.5,856.1 L1041.9,856.7 L1039.7,856.3 L1038.6,856.6 L1037.9,857.5 L1036.4,857.9 L1033.4,858.4 L1030.5,859.1 L1028.9,858.7 L1026.5,859.6 L1025.1,858.9 L1023.1,859.3 L1021.2,859.5 L1019.4,859.1 L1017.6,859.9 L1013.8,859.8 L1012.8,859.7 L1009.2,859.8 L1007.6,858.5 L1004.2,859.9 L1002.8,858.8 L999.7,858.7 L997.7,859.7 L995.7,858.7 L994.6,859.8 L991.5,860.0 L990.5,860.0 L989.0,860.3 L987.4,859.8 L985.0,861.5 L984.2,862.8 L985.3,864.6 L983.6,866.3 L977.4,866.4 L976.3,866.0 L974.5,865.9 L973.5,865.7 L972.0,865.9 L970.4,866.4 L968.7,867.0 L966.1,867.0 L964.9,866.5 L963.3,866.9 L960.8,866.2 L959.6,865.6 L957.0,866.4 L953.8,866.3 L952.6,866.8 L949.7,866.8 L947.7,865.9 L945.9,865.1 L943.2,865.9 L940.2,866.2 L937.8,865.5 L935.6,865.9 L932.7,865.2 L930.6,865.3 L928.8,864.8 L926.4,864.8 L923.4,864.5 L921.1,865.5 L919.0,865.1 L916.1,864.2 L913.8,864.5 L912.2,864.7 L909.1,864.4 L908.3,864.0 L904.9,863.4 L902.9,863.1 L902.5,863.6 L900.3,863.8 L899.0,863.3 L896.9,863.2 L895.5,863.0 L894.1,862.2 L892.7,862.5 L891.3,862.4 L885.7,860.4 L881.9,858.5 L882.2,858.0 L882.3,855.3 L882.8,854.4 L881.3,853.1 L879.4,852.5 L876.8,852.9 L874.6,853.4 L872.9,855.0 L869.6,855.4 L868.1,856.4 L865.7,856.8 L865.4,859.0 L863.9,860.4 L860.9,861.9 L860.2,864.4 L859.1,865.0 L856.5,865.3 L854.8,866.4 L853.3,865.8 L850.7,864.9 L848.6,865.0 L846.9,864.4 L844.9,862.9 L843.1,860.3 L842.2,859.4 L840.4,858.3 L838.3,858.1 L835.1,857.7 L833.8,857.2 L831.6,855.4 L829.3,856.2 L826.9,856.6 L825.0,856.4 L823.0,858.1 L822.4,858.2 L819.9,861.1 L819.9,862.1 L817.8,864.9 L816.1,866.4 L815.1,866.4 L813.4,865.4 L811.5,865.4 L809.9,864.2 L807.6,862.9 L806.0,861.0 L804.3,859.1 L801.8,858.1 L799.9,857.9 L798.9,857.1 L796.3,855.6 L793.5,855.9 L792.4,855.0 L789.7,854.0 L788.7,853.9 L786.0,852.8 L783.8,853.6 L782.0,853.1 L780.1,853.9 L779.1,855.1 L778.4,855.3 L776.2,856.7 L775.7,858.7 L774.8,860.6 L771.4,861.8 L769.8,862.9 L765.4,863.1 L764.2,862.9 L763.1,863.9 L761.2,864.2 L758.9,863.0 L757.4,864.2 L754.8,864.2 L754.0,863.5 L751.3,864.3 L748.9,863.6 L746.2,864.5 L744.8,864.1 L741.3,864.7 L740.0,863.8 L737.3,864.8 L735.3,864.2 L732.2,864.3 L729.3,863.7 L726.9,864.4 L724.8,864.2 L722.6,864.1 L719.9,863.3 L719.0,863.7 L715.4,864.1 L714.4,863.2 L712.1,863.5 L710.1,862.9 L707.5,864.3 L707.2,863.4 L705.2,862.9 L704.1,863.1 L702.4,863.1 L698.4,862.7 L695.7,861.8 L693.7,858.9 L693.4,857.7 L692.9,856.1 L692.5,855.8 L690.6,855.5 L688.4,854.8 L687.2,852.8 L684.7,853.0 L682.5,853.1 L680.0,854.0 L678.3,853.9 L677.0,855.2 L675.1,855.2 L672.6,856.4 L671.1,856.8 L670.7,859.4 L668.3,859.2 L666.9,861.1 L666.0,863.3 L663.3,863.1 L659.3,864.7 L658.3,865.3 L656.5,865.9 L653.8,864.8 L653.0,866.3 L650.8,865.4 L648.6,866.3 L645.6,865.8 L643.5,865.6 L641.5,865.8 L638.8,865.9 L637.1,865.7 L634.8,866.1 L631.3,867.3 L629.3,867.4 L628.1,867.3 L624.8,866.6 L622.6,867.4 L621.9,866.9 L619.4,866.3 L618.3,866.5 L616.3,866.4 L613.3,865.4 L610.2,864.5 L609.1,864.4 L606.6,864.0 L605.4,862.2 L603.6,861.0 L602.8,860.2 L599.7,859.8 L597.4,859.5 L595.8,859.8 L593.5,859.6 L591.2,859.2 L590.0,857.9 L587.5,857.8 L584.8,857.4 L582.7,858.5 L581.4,858.2 L577.7,857.1 L576.7,856.6 L574.3,856.9 L572.6,856.4 L569.9,857.1 L568.0,856.8 L564.6,856.3 L563.4,857.2 L560.2,857.2 L559.2,856.9 L556.5,857.0 L553.9,858.2 L552.7,857.6 L549.7,857.7 L548.7,858.7 L546.7,859.1 L544.2,859.3 L542.7,861.0 L541.1,861.9 L538.3,862.1 L537.3,863.8 L535.6,864.2 L534.0,865.5 L532.4,866.8 L530.2,866.4 L528.2,865.2 L527.1,865.0 L525.4,863.4 L522.6,862.8 L521.1,860.1 L519.1,859.4 L516.9,858.1 L514.3,857.5 L513.1,856.9 L510.4,856.5 L509.3,856.2 L506.2,855.3 L503.9,854.8 L501.1,854.6 L500.3,853.6 L497.5,853.3 L495.5,852.4 L493.7,853.1 L492.1,853.0 L488.8,853.5 L487.1,855.7 L485.1,855.7 L484.5,857.0 L481.7,858.6 L480.5,859.1 L478.7,859.5 L476.9,859.2 L475.0,860.5 L471.6,859.8 L470.1,860.5 L467.7,859.8 L465.8,859.6 L463.9,859.8 L462.2,859.6 L459.7,858.1 L459.0,856.1 L457.5,855.8 L455.1,853.5 L453.9,852.4 L451.2,851.9 L449.0,850.5 L447.7,849.9 L444.8,849.7 L443.0,850.5 L441.4,850.3 L439.1,850.2 L435.5,849.7 L434.7,850.5 L431.3,849.9 L429.7,850.0 L427.5,849.9 L425.6,851.0 L424.1,851.5 L421.1,852.1 L421.0,854.8 L419.6,856.6 L418.3,859.0 L417.3,859.6 L415.8,861.6 L414.2,863.1 L412.2,863.6 L409.7,865.0 L407.4,863.8 L404.9,863.6 L402.6,863.1 L401.6,861.9 L398.9,861.2 L397.0,859.7 L396.7,858.1 L394.0,856.7 L392.6,855.8 L390.4,854.5 L387.3,853.8 L385.1,854.0 L382.8,853.8 L381.0,854.8 L378.8,856.1 L378.6,858.1 L376.8,860.4 L374.9,862.6 L374.1,864.0 L372.8,864.7 L371.7,864.1 L370.4,862.0 L369.2,860.3 L367.6,858.4 L364.5,857.1 L362.3,856.7 L362.0,856.4 L359.7,856.7 L357.2,857.5 L355.1,857.1 L352.6,856.0 L351.4,856.7 L347.7,856.7 L345.9,857.4 L343.0,856.7 L342.0,857.8 L338.5,857.4 L336.6,858.2 L335.0,858.9 L333.5,858.7 L331.3,859.1 L329.5,860.4 L327.8,861.1 L326.4,862.9 L325.4,863.4 L324.3,864.8 L322.9,867.3 L321.2,869.3 L319.7,869.6 L317.9,871.4 L314.8,871.4 L313.5,871.4 L311.5,871.6 L310.1,871.5 L307.6,871.9 L305.5,871.5 L304.0,872.3 L301.3,871.6 L298.5,871.2 L296.1,871.5 L294.4,870.5 L292.5,870.7 L290.0,871.3 L287.9,870.0 L284.7,870.9 L281.8,869.2 L280.6,869.6 L279.1,869.7 L276.6,869.8 L274.8,868.7 L273.4,868.1 L271.7,868.0 L268.6,867.2 L266.8,866.5 L266.2,864.5 L264.5,862.8 L264.2,861.6 L263.3,860.8 L262.1,859.0 L258.5,858.1 L257.0,858.0 L256.2,857.3 L253.7,857.9 L251.2,856.9 L250.5,857.6 L247.6,856.3 L246.0,857.1 L243.6,857.5 L241.4,856.5 L237.8,856.2 L236.0,856.5 L233.1,855.9 L231.4,856.5 L228.7,857.1 L226.9,855.5 L224.3,856.7 L222.1,856.5 L219.6,855.8 L219.1,856.1 L217.2,855.4 L215.4,855.8 L212.0,855.5 L208.9,855.3 L207.0,855.5 L205.1,854.2 L202.8,853.4 L202.3,853.0 L199.7,852.8 L198.8,853.1 L195.8,853.2 L193.4,852.8 L190.3,851.6 L188.9,853.1 L187.9,854.2 L186.8,856.4 L184.9,858.6 L183.5,861.7 L182.2,862.4 L180.9,862.6 L179.1,862.8 L176.8,863.6 L175.7,863.6 L173.4,862.8 L170.8,861.5 L169.3,862.4 L165.7,861.4 L163.8,861.8 L162.9,860.6 L160.7,861.3 L158.6,860.9 L156.1,859.5 L154.8,858.8 L152.0,859.4 L150.1,858.9 L147.5,857.4 L145.4,857.0 L144.2,856.8 L141.3,856.1 L139.0,856.2 L136.6,855.5 L134.0,856.5 L132.5,855.8 L130.2,855.3 L127.8,855.3 L125.7,854.9 L124.1,855.4 L121.1,856.1 L118.8,855.5 L117.7,855.3 L114.9,856.6 L113.3,855.7 L110.5,856.8 L108.4,857.4 L106.2,857.6 L104.7,856.7 L102.7,856.9 L101.4,857.4 L99.4,858.1 L97.6,858.9 L94.5,859.2 L92.9,860.2 L91.5,861.1 L89.2,862.9 L87.2,864.3 L85.8,865.1 L84.5,865.3 L82.6,865.5 L81.2,866.4 L78.7,866.7 L77.0,865.6 L74.7,864.3 L73.3,862.8 L71.4,860.8 L69.6,859.8 L67.5,859.8 L66.3,859.1 L64.1,859.3 L63.2,860.7 L61.2,862.0 L58.1,862.3 L56.0,864.3 L55.2,865.0 L53.0,866.3 L51.4,866.4 L49.6,865.7 L47.9,864.9 L45.7,863.4 L43.1,863.1 L42.2,861.3 L39.8,859.8 L37.3,858.2 L35.7,857.6 L34.1,857.1 L31.8,856.2 L30.8,855.3 L29.1,855.4 L26.5,854.8 L24.9,854.2 L22.3,854.7 L20.0,853.6 L18.6,854.9 L15.5,853.8 L14.3,854.8 L11.0,854.3 L10.0,854.8 L6.8,855.4 L4.6,855.8 L3.4,854.8 L1.6,855.5 L0.0,855.8 L-40,855.8 L-40,0 Z" fill="#fff" fill-rule="evenodd"/>
<g clip-path="url(#outc)"><path d="M0,0 L1659.0,0.0 L1657.4,0.2 L1656.0,1.2 L1653.7,3.0 L1651.1,4.8 L1650.6,6.7 L1649.5,8.5 L1649.6,10.2 L1650.4,13.9 L1650.4,15.4 L1651.7,18.8 L1652.0,20.0 L1653.7,22.5 L1656.2,23.9 L1655.6,26.8 L1655.1,27.5 L1652.0,28.2 L1649.9,30.4 L1647.3,31.1 L1645.9,31.9 L1644.4,32.8 L1644.0,35.0 L1643.8,35.7 L1645.9,37.3 L1646.8,38.9 L1648.8,39.8 L1651.3,42.0 L1652.5,43.3 L1655.0,45.2 L1657.2,45.7 L1659.3,46.9 L1659.7,49.2 L1660.7,50.0 L1660.5,52.3 L1659.3,54.7 L1658.9,56.4 L1657.8,57.9 L1657.0,60.0 L1658.4,61.7 L1660.1,63.0 L1662.7,65.2 L1664.3,66.2 L1665.4,67.7 L1667.0,68.8 L1667.1,71.2 L1666.5,71.6 L1664.4,73.7 L1661.9,75.1 L1660.7,77.0 L1658.8,77.6 L1656.9,79.8 L1655.1,80.3 L1653.4,82.7 L1650.9,83.4 L1649.9,85.5 L1648.9,86.9 L1647.0,87.5 L1647.0,89.0 L1647.1,90.9 L1649.1,91.0 L1649.3,92.3 L1651.2,93.9 L1653.7,94.8 L1654.8,96.3 L1657.4,97.9 L1660.1,99.5 L1660.7,100.7 L1662.0,102.8 L1663.5,104.0 L1665.1,107.5 L1666.2,109.8 L1666.3,111.5 L1666.5,114.0 L1666.7,115.1 L1667.4,117.4 L1666.2,118.5 L1665.0,119.4 L1662.6,120.4 L1660.7,121.6 L1658.3,123.3 L1657.0,124.0 L1655.5,124.6 L1652.9,126.2 L1651.0,127.2 L1649.6,130.1 L1647.0,130.8 L1644.8,131.8 L1644.1,133.8 L1644.0,136.0 L1644.7,136.9 L1644.1,139.6 L1645.8,139.9 L1647.1,141.4 L1648.4,144.6 L1650.5,145.9 L1651.1,147.1 L1652.5,149.4 L1654.6,151.2 L1655.6,151.9 L1657.0,154.0 L1658.7,156.7 L1660.1,158.3 L1661.4,160.1 L1661.7,161.7 L1663.0,162.7 L1663.5,165.0 L1664.6,167.5 L1666.3,169.0 L1665.7,171.0 L1666.2,173.7 L1665.7,174.6 L1663.8,176.2 L1662.8,178.1 L1662.3,181.1 L1661.4,182.3 L1659.8,184.7 L1657.6,186.4 L1657.0,188.0 L1656.4,190.1 L1654.8,191.4 L1652.3,193.6 L1650.9,195.3 L1650.3,196.4 L1647.8,199.0 L1647.0,199.4 L1644.8,201.0 L1645.2,203.7 L1644.0,204.7 L1643.3,207.3 L1644.9,208.9 L1644.7,210.5 L1645.4,211.4 L1648.2,214.3 L1649.0,216.6 L1650.6,218.0 L1651.7,220.0 L1653.9,220.5 L1654.7,222.1 L1656.5,224.2 L1658.5,225.6 L1660.2,228.0 L1662.4,228.9 L1664.4,231.2 L1665.5,232.8 L1666.7,233.6 L1667.4,235.0 L1667.8,236.2 L1667.3,238.3 L1665.7,241.0 L1664.8,242.1 L1664.2,244.0 L1662.0,245.8 L1660.7,248.0 L1659.8,249.9 L1657.9,251.1 L1656.8,252.2 L1656.2,254.3 L1654.4,256.4 L1653.5,257.7 L1651.6,259.5 L1650.1,261.6 L1648.8,263.1 L1648.0,265.5 L1647.7,267.0 L1647.0,268.0 L1647.9,269.6 L1648.1,272.7 L1649.8,273.3 L1650.2,275.6 L1651.8,277.1 L1653.4,279.6 L1656.0,281.8 L1656.0,283.4 L1657.0,285.0 L1657.1,286.2 L1656.8,289.4 L1654.9,291.3 L1654.0,292.5 L1653.7,295.0 L1651.1,296.2 L1650.5,297.9 L1649.1,299.7 L1649.4,301.0 L1649.0,303.4 L1649.7,305.2 L1650.1,306.8 L1652.7,308.7 L1653.8,311.0 L1656.9,312.5 L1657.6,313.0 L1659.0,315.4 L1660.7,316.8 L1660.7,318.2 L1660.9,321.5 L1661.1,322.5 L1659.5,325.8 L1659.6,327.6 L1658.4,328.7 L1659.1,331.4 L1659.0,333.6 L1659.0,336.3 L1661.0,338.1 L1661.6,340.2 L1663.1,342.1 L1665.1,343.2 L1666.5,346.0 L1666.8,346.5 L1667.4,348.7 L1666.9,350.0 L1665.1,351.4 L1663.4,352.8 L1662.0,354.3 L1660.8,355.6 L1658.5,356.8 L1657.0,358.8 L1655.4,359.6 L1653.8,361.1 L1653.1,363.5 L1650.9,365.0 L1651.0,366.1 L1649.9,368.4 L1649.0,370.5 L1649.0,372.9 L1649.1,374.5 L1650.1,377.5 L1650.2,379.5 L1651.6,381.5 L1652.1,383.2 L1652.4,384.9 L1654.0,387.3 L1654.5,389.7 L1656.2,390.6 L1657.5,393.2 L1660.2,394.4 L1660.7,395.3 L1662.3,397.4 L1663.2,399.2 L1664.2,401.2 L1665.5,404.0 L1667.6,405.4 L1667.0,408.0 L1667.4,409.0 L1666.3,410.6 L1664.2,412.4 L1663.0,414.1 L1660.4,415.8 L1659.0,417.5 L1656.7,418.7 L1655.3,420.5 L1653.7,421.5 L1652.7,423.5 L1651.8,425.8 L1650.6,427.6 L1650.2,429.9 L1649.5,432.3 L1648.4,433.6 L1649.0,435.6 L1648.4,438.8 L1648.0,441.0 L1647.4,443.5 L1649.1,445.2 L1649.3,447.6 L1648.9,449.3 L1650.0,452.0 L1650.8,454.2 L1650.7,456.4 L1650.6,457.8 L1650.5,460.4 L1649.0,461.5 L1647.8,464.2 L1646.7,467.1 L1646.5,468.8 L1646.0,471.0 L1645.6,472.9 L1645.9,474.0 L1647.0,477.1 L1647.3,478.7 L1648.6,479.9 L1649.8,482.1 L1649.8,484.0 L1651.8,485.7 L1652.3,488.0 L1653.6,490.8 L1654.3,491.9 L1655.3,494.3 L1656.7,496.2 L1657.2,497.2 L1656.8,499.3 L1657.3,501.4 L1656.9,502.6 L1655.2,503.5 L1652.6,505.1 L1651.7,507.0 L1649.8,507.6 L1648.1,509.5 L1647.2,511.5 L1646.9,512.5 L1647.6,514.4 L1647.8,517.5 L1646.6,518.8 L1648.3,521.7 L1648.2,522.7 L1648.3,526.0 L1648.9,527.6 L1649.4,529.6 L1650.6,531.6 L1652.1,533.0 L1652.8,535.5 L1654.0,537.7 L1654.1,539.9 L1655.7,540.5 L1656.1,543.2 L1657.7,544.9 L1658.0,547.0 L1658.7,550.0 L1659.0,551.7 L1657.9,553.9 L1658.8,554.7 L1658.2,557.7 L1657.3,559.1 L1655.4,561.4 L1655.4,563.9 L1653.2,565.8 L1651.9,567.3 L1650.5,570.6 L1649.7,572.8 L1648.7,573.6 L1648.3,575.2 L1647.4,578.0 L1647.2,578.6 L1647.4,582.5 L1647.7,584.6 L1649.6,585.3 L1650.6,586.7 L1652.3,587.0 L1654.0,588.5 L1656.0,589.6 L1657.1,589.6 L1659.9,591.0 L1660.7,593.4 L1661.5,594.7 L1662.2,597.0 L1664.2,598.1 L1664.5,600.1 L1665.1,602.4 L1665.1,604.3 L1665.5,607.8 L1666.0,609.0 L1665.7,611.9 L1665.9,614.3 L1664.5,614.7 L1663.2,616.4 L1662.3,618.3 L1661.0,620.5 L1660.2,623.4 L1659.2,624.6 L1657.3,626.7 L1656.0,628.4 L1654.4,630.1 L1654.8,631.7 L1653.2,634.2 L1653.2,635.1 L1652.3,637.0 L1652.0,639.1 L1653.1,641.6 L1655.4,644.1 L1656.9,644.4 L1657.3,647.2 L1660.2,648.5 L1660.7,650.5 L1661.7,651.7 L1662.2,655.2 L1663.7,657.1 L1664.5,658.2 L1663.5,660.2 L1664.3,663.4 L1664.0,665.6 L1664.3,667.7 L1663.2,669.6 L1662.0,671.1 L1660.4,673.4 L1659.6,675.6 L1659.2,676.7 L1657.2,678.7 L1656.9,681.5 L1655.1,682.6 L1654.8,685.5 L1654.0,687.4 L1653.2,688.8 L1652.9,690.4 L1651.8,692.9 L1652.2,695.1 L1651.5,696.7 L1649.9,698.2 L1650.6,700.9 L1649.2,701.7 L1649.2,704.8 L1648.9,706.2 L1649.2,709.4 L1649.0,710.9 L1648.8,712.0 L1649.3,714.5 L1650.4,716.1 L1651.3,719.0 L1651.5,720.3 L1653.1,722.6 L1653.7,724.6 L1653.5,727.5 L1654.5,730.0 L1655.5,730.8 L1655.7,733.3 L1657.0,736.1 L1656.5,737.2 L1656.8,740.0 L1657.3,741.0 L1656.4,742.4 L1655.5,745.0 L1655.8,747.8 L1654.3,750.0 L1653.2,750.8 L1650.5,753.6 L1650.0,753.9 L1648.5,756.2 L1646.9,757.8 L1645.7,758.9 L1645.3,761.1 L1645.6,762.9 L1646.8,764.1 L1648.0,765.8 L1648.6,768.3 L1651.2,769.1 L1652.0,770.5 L1654.6,772.6 L1656.3,773.1 L1659.2,774.0 L1659.7,776.8 L1660.7,778.0 L1661.4,779.1 L1660.3,781.0 L1661.4,783.2 L1660.7,786.3 L1659.4,787.3 L1659.6,789.9 L1657.6,792.2 L1656.9,793.5 L1655.5,796.4 L1655.6,798.0 L1655.4,800.3 L1654.4,801.4 L1652.0,804.2 L1651.9,807.2 L1649.7,808.2 L1648.7,810.7 L1648.5,812.2 L1647.7,815.1 L1647.5,817.0 L1647.2,818.3 L1648.1,819.5 L1649.0,820.9 L1651.5,821.8 L1652.6,824.1 L1654.9,824.2 L1656.8,826.1 L1659.5,827.9 L1662.5,829.0 L1663.2,828.7 L1664.3,830.5 L1665.7,831.7 L1666.3,833.6 L1665.2,835.6 L1664.8,838.0 L1663.5,840.3 L1661.6,841.1 L1659.9,843.1 L1657.3,845.0 L1655.9,845.7 L1654.3,846.2 L1651.6,846.9 L1649.3,848.5 L1647.8,848.1 L1645.3,849.7 L1643.3,849.0 L1641.7,850.2 L1640.1,850.0 L1637.7,851.4 L1635.9,853.2 L1635.2,854.8 L1632.9,855.4 L1632.1,856.8 L1632.2,859.0 L1630.4,860.3 L1627.2,861.9 L1626.4,862.4 L1623.8,863.6 L1623.1,863.3 L1620.6,864.8 L1617.9,865.1 L1615.6,865.6 L1613.6,867.0 L1612.0,867.0 L1608.7,867.9 L1607.5,868.2 L1604.7,868.8 L1603.4,869.8 L1600.2,869.5 L1598.9,870.5 L1597.5,869.9 L1595.8,870.6 L1592.9,870.5 L1591.8,868.7 L1590.7,868.3 L1589.8,866.0 L1588.9,864.0 L1588.2,863.4 L1585.0,861.1 L1581.8,861.2 L1580.8,860.8 L1578.1,862.0 L1577.1,862.1 L1575.3,862.4 L1573.5,861.6 L1570.7,862.5 L1569.6,863.5 L1566.5,863.5 L1564.7,863.8 L1562.0,863.9 L1560.2,865.5 L1557.2,865.3 L1555.9,866.6 L1552.6,865.8 L1551.4,867.7 L1548.3,866.7 L1546.7,867.8 L1544.4,868.6 L1542.1,868.3 L1540.0,868.8 L1537.4,870.2 L1536.2,869.5 L1533.4,870.1 L1532.3,870.2 L1530.2,870.1 L1529.5,870.6 L1526.0,870.8 L1523.1,868.9 L1523.6,866.3 L1523.3,864.5 L1521.8,863.3 L1519.0,861.9 L1517.7,861.3 L1515.7,861.4 L1513.9,861.3 L1511.9,860.7 L1509.1,860.8 L1507.6,860.0 L1505.7,860.7 L1502.8,859.6 L1500.5,859.3 L1497.5,859.7 L1495.1,859.5 L1493.5,858.7 L1491.5,858.6 L1489.6,859.6 L1487.3,858.2 L1485.6,858.5 L1484.0,858.4 L1481.9,856.9 L1480.1,857.1 L1478.8,855.6 L1476.9,854.6 L1476.0,853.5 L1474.4,851.6 L1470.1,852.1 L1469.2,852.9 L1466.4,852.2 L1465.8,852.1 L1464.2,852.6 L1462.1,852.8 L1459.5,854.5 L1456.9,853.9 L1455.1,854.5 L1452.0,854.9 L1449.9,856.6 L1448.3,857.1 L1445.1,857.5 L1442.6,857.7 L1441.1,858.0 L1439.1,858.9 L1436.3,859.9 L1433.3,860.6 L1432.0,860.1 L1430.2,860.3 L1428.5,861.2 L1425.7,861.8 L1424.1,861.1 L1423.0,861.1 L1421.2,861.9 L1418.1,861.3 L1415.7,861.5 L1414.4,859.6 L1413.1,857.0 L1411.5,855.7 L1410.6,854.9 L1407.3,854.2 L1405.8,854.7 L1403.6,853.4 L1402.6,853.0 L1399.6,853.4 L1397.7,853.3 L1395.7,853.6 L1394.0,852.9 L1391.8,853.3 L1388.6,854.0 L1386.4,852.7 L1383.7,853.6 L1382.6,853.8 L1379.5,853.1 L1376.5,853.8 L1375.2,853.5 L1373.1,853.8 L1371.5,854.5 L1368.5,855.0 L1366.3,854.6 L1365.4,854.9 L1362.8,855.1 L1360.1,856.9 L1358.2,857.6 L1358.1,858.1 L1355.4,860.1 L1354.5,861.4 L1353.6,861.9 L1351.4,863.4 L1349.4,865.4 L1348.9,866.1 L1345.8,867.1 L1344.4,867.1 L1343.1,867.3 L1341.2,867.4 L1338.3,867.0 L1336.2,866.9 L1334.1,868.0 L1332.4,868.1 L1330.1,867.0 L1327.5,867.1 L1325.6,867.0 L1322.4,867.0 L1321.3,866.0 L1319.0,865.4 L1315.9,865.5 L1314.8,866.3 L1313.0,865.0 L1311.5,864.7 L1309.5,864.7 L1306.0,864.4 L1304.7,862.9 L1303.4,862.0 L1302.1,860.4 L1301.2,859.2 L1299.0,857.7 L1297.0,857.4 L1295.0,856.2 L1292.1,856.1 L1289.4,856.1 L1287.1,854.3 L1284.8,855.5 L1283.1,854.2 L1281.6,854.9 L1278.9,855.3 L1279.1,858.3 L1277.9,860.6 L1274.6,861.9 L1272.5,862.4 L1271.4,863.2 L1270.3,863.7 L1267.2,864.1 L1266.5,864.6 L1263.0,863.8 L1260.7,863.8 L1259.6,865.3 L1257.0,865.6 L1254.8,864.9 L1251.8,864.6 L1250.7,864.7 L1248.1,864.9 L1246.6,864.7 L1243.8,863.6 L1242.3,863.3 L1240.6,861.3 L1239.9,860.1 L1238.0,858.6 L1235.1,856.6 L1234.2,855.6 L1232.4,854.1 L1231.0,852.1 L1229.8,851.1 L1227.4,851.4 L1226.1,851.0 L1223.0,851.5 L1222.4,853.5 L1219.4,853.8 L1218.3,855.4 L1215.9,856.2 L1214.2,858.1 L1212.1,859.5 L1210.2,859.5 L1208.9,860.9 L1206.0,861.8 L1204.7,861.9 L1202.0,862.3 L1200.9,861.9 L1198.6,860.6 L1196.0,859.8 L1194.5,858.4 L1192.2,857.2 L1189.0,856.6 L1188.0,856.1 L1185.1,856.0 L1183.1,854.8 L1181.8,855.1 L1180.3,854.9 L1179.1,856.1 L1177.2,857.3 L1175.9,860.3 L1176.0,862.6 L1174.6,864.7 L1174.9,867.4 L1173.1,869.3 L1173.4,870.5 L1171.6,871.7 L1169.7,871.3 L1169.0,871.4 L1166.5,868.9 L1165.0,867.5 L1163.7,865.5 L1161.5,863.7 L1160.6,863.1 L1157.3,862.4 L1155.9,861.2 L1153.6,861.2 L1153.2,862.4 L1150.9,862.7 L1148.2,864.1 L1146.1,864.6 L1144.6,865.6 L1142.6,868.0 L1141.1,868.7 L1139.0,869.6 L1136.3,870.5 L1134.9,870.6 L1132.8,870.9 L1131.6,870.0 L1129.1,869.9 L1126.8,868.3 L1125.3,868.4 L1123.4,867.2 L1121.5,866.2 L1119.3,865.0 L1117.0,864.5 L1114.9,863.7 L1114.0,863.6 L1111.9,864.3 L1109.3,864.6 L1106.9,866.4 L1105.4,867.7 L1103.7,869.5 L1101.7,869.0 L1100.0,868.5 L1100.5,866.6 L1099.7,865.7 L1098.1,863.1 L1096.4,861.7 L1093.4,859.8 L1092.8,859.5 L1090.0,859.4 L1089.1,859.3 L1087.2,858.9 L1085.8,858.5 L1083.1,858.9 L1080.7,858.3 L1078.7,858.2 L1076.0,858.3 L1074.0,856.6 L1071.5,857.0 L1068.7,856.8 L1067.0,857.1 L1064.5,856.2 L1062.0,856.8 L1060.9,856.4 L1057.5,856.7 L1055.6,855.6 L1053.2,856.4 L1052.4,856.1 L1050.0,856.0 L1048.0,856.6 L1047.0,855.8 L1043.5,856.1 L1041.9,856.7 L1039.7,856.3 L1038.6,856.6 L1037.9,857.5 L1036.4,857.9 L1033.4,858.4 L1030.5,859.1 L1028.9,858.7 L1026.5,859.6 L1025.1,858.9 L1023.1,859.3 L1021.2,859.5 L1019.4,859.1 L1017.6,859.9 L1013.8,859.8 L1012.8,859.7 L1009.2,859.8 L1007.6,858.5 L1004.2,859.9 L1002.8,858.8 L999.7,858.7 L997.7,859.7 L995.7,858.7 L994.6,859.8 L991.5,860.0 L990.5,860.0 L989.0,860.3 L987.4,859.8 L985.0,861.5 L984.2,862.8 L985.3,864.6 L983.6,866.3 L977.4,866.4 L976.3,866.0 L974.5,865.9 L973.5,865.7 L972.0,865.9 L970.4,866.4 L968.7,867.0 L966.1,867.0 L964.9,866.5 L963.3,866.9 L960.8,866.2 L959.6,865.6 L957.0,866.4 L953.8,866.3 L952.6,866.8 L949.7,866.8 L947.7,865.9 L945.9,865.1 L943.2,865.9 L940.2,866.2 L937.8,865.5 L935.6,865.9 L932.7,865.2 L930.6,865.3 L928.8,864.8 L926.4,864.8 L923.4,864.5 L921.1,865.5 L919.0,865.1 L916.1,864.2 L913.8,864.5 L912.2,864.7 L909.1,864.4 L908.3,864.0 L904.9,863.4 L902.9,863.1 L902.5,863.6 L900.3,863.8 L899.0,863.3 L896.9,863.2 L895.5,863.0 L894.1,862.2 L892.7,862.5 L891.3,862.4 L885.7,860.4 L881.9,858.5 L882.2,858.0 L882.3,855.3 L882.8,854.4 L881.3,853.1 L879.4,852.5 L876.8,852.9 L874.6,853.4 L872.9,855.0 L869.6,855.4 L868.1,856.4 L865.7,856.8 L865.4,859.0 L863.9,860.4 L860.9,861.9 L860.2,864.4 L859.1,865.0 L856.5,865.3 L854.8,866.4 L853.3,865.8 L850.7,864.9 L848.6,865.0 L846.9,864.4 L844.9,862.9 L843.1,860.3 L842.2,859.4 L840.4,858.3 L838.3,858.1 L835.1,857.7 L833.8,857.2 L831.6,855.4 L829.3,856.2 L826.9,856.6 L825.0,856.4 L823.0,858.1 L822.4,858.2 L819.9,861.1 L819.9,862.1 L817.8,864.9 L816.1,866.4 L815.1,866.4 L813.4,865.4 L811.5,865.4 L809.9,864.2 L807.6,862.9 L806.0,861.0 L804.3,859.1 L801.8,858.1 L799.9,857.9 L798.9,857.1 L796.3,855.6 L793.5,855.9 L792.4,855.0 L789.7,854.0 L788.7,853.9 L786.0,852.8 L783.8,853.6 L782.0,853.1 L780.1,853.9 L779.1,855.1 L778.4,855.3 L776.2,856.7 L775.7,858.7 L774.8,860.6 L771.4,861.8 L769.8,862.9 L765.4,863.1 L764.2,862.9 L763.1,863.9 L761.2,864.2 L758.9,863.0 L757.4,864.2 L754.8,864.2 L754.0,863.5 L751.3,864.3 L748.9,863.6 L746.2,864.5 L744.8,864.1 L741.3,864.7 L740.0,863.8 L737.3,864.8 L735.3,864.2 L732.2,864.3 L729.3,863.7 L726.9,864.4 L724.8,864.2 L722.6,864.1 L719.9,863.3 L719.0,863.7 L715.4,864.1 L714.4,863.2 L712.1,863.5 L710.1,862.9 L707.5,864.3 L707.2,863.4 L705.2,862.9 L704.1,863.1 L702.4,863.1 L698.4,862.7 L695.7,861.8 L693.7,858.9 L693.4,857.7 L692.9,856.1 L692.5,855.8 L690.6,855.5 L688.4,854.8 L687.2,852.8 L684.7,853.0 L682.5,853.1 L680.0,854.0 L678.3,853.9 L677.0,855.2 L675.1,855.2 L672.6,856.4 L671.1,856.8 L670.7,859.4 L668.3,859.2 L666.9,861.1 L666.0,863.3 L663.3,863.1 L659.3,864.7 L658.3,865.3 L656.5,865.9 L653.8,864.8 L653.0,866.3 L650.8,865.4 L648.6,866.3 L645.6,865.8 L643.5,865.6 L641.5,865.8 L638.8,865.9 L637.1,865.7 L634.8,866.1 L631.3,867.3 L629.3,867.4 L628.1,867.3 L624.8,866.6 L622.6,867.4 L621.9,866.9 L619.4,866.3 L618.3,866.5 L616.3,866.4 L613.3,865.4 L610.2,864.5 L609.1,864.4 L606.6,864.0 L605.4,862.2 L603.6,861.0 L602.8,860.2 L599.7,859.8 L597.4,859.5 L595.8,859.8 L593.5,859.6 L591.2,859.2 L590.0,857.9 L587.5,857.8 L584.8,857.4 L582.7,858.5 L581.4,858.2 L577.7,857.1 L576.7,856.6 L574.3,856.9 L572.6,856.4 L569.9,857.1 L568.0,856.8 L564.6,856.3 L563.4,857.2 L560.2,857.2 L559.2,856.9 L556.5,857.0 L553.9,858.2 L552.7,857.6 L549.7,857.7 L548.7,858.7 L546.7,859.1 L544.2,859.3 L542.7,861.0 L541.1,861.9 L538.3,862.1 L537.3,863.8 L535.6,864.2 L534.0,865.5 L532.4,866.8 L530.2,866.4 L528.2,865.2 L527.1,865.0 L525.4,863.4 L522.6,862.8 L521.1,860.1 L519.1,859.4 L516.9,858.1 L514.3,857.5 L513.1,856.9 L510.4,856.5 L509.3,856.2 L506.2,855.3 L503.9,854.8 L501.1,854.6 L500.3,853.6 L497.5,853.3 L495.5,852.4 L493.7,853.1 L492.1,853.0 L488.8,853.5 L487.1,855.7 L485.1,855.7 L484.5,857.0 L481.7,858.6 L480.5,859.1 L478.7,859.5 L476.9,859.2 L475.0,860.5 L471.6,859.8 L470.1,860.5 L467.7,859.8 L465.8,859.6 L463.9,859.8 L462.2,859.6 L459.7,858.1 L459.0,856.1 L457.5,855.8 L455.1,853.5 L453.9,852.4 L451.2,851.9 L449.0,850.5 L447.7,849.9 L444.8,849.7 L443.0,850.5 L441.4,850.3 L439.1,850.2 L435.5,849.7 L434.7,850.5 L431.3,849.9 L429.7,850.0 L427.5,849.9 L425.6,851.0 L424.1,851.5 L421.1,852.1 L421.0,854.8 L419.6,856.6 L418.3,859.0 L417.3,859.6 L415.8,861.6 L414.2,863.1 L412.2,863.6 L409.7,865.0 L407.4,863.8 L404.9,863.6 L402.6,863.1 L401.6,861.9 L398.9,861.2 L397.0,859.7 L396.7,858.1 L394.0,856.7 L392.6,855.8 L390.4,854.5 L387.3,853.8 L385.1,854.0 L382.8,853.8 L381.0,854.8 L378.8,856.1 L378.6,858.1 L376.8,860.4 L374.9,862.6 L374.1,864.0 L372.8,864.7 L371.7,864.1 L370.4,862.0 L369.2,860.3 L367.6,858.4 L364.5,857.1 L362.3,856.7 L362.0,856.4 L359.7,856.7 L357.2,857.5 L355.1,857.1 L352.6,856.0 L351.4,856.7 L347.7,856.7 L345.9,857.4 L343.0,856.7 L342.0,857.8 L338.5,857.4 L336.6,858.2 L335.0,858.9 L333.5,858.7 L331.3,859.1 L329.5,860.4 L327.8,861.1 L326.4,862.9 L325.4,863.4 L324.3,864.8 L322.9,867.3 L321.2,869.3 L319.7,869.6 L317.9,871.4 L314.8,871.4 L313.5,871.4 L311.5,871.6 L310.1,871.5 L307.6,871.9 L305.5,871.5 L304.0,872.3 L301.3,871.6 L298.5,871.2 L296.1,871.5 L294.4,870.5 L292.5,870.7 L290.0,871.3 L287.9,870.0 L284.7,870.9 L281.8,869.2 L280.6,869.6 L279.1,869.7 L276.6,869.8 L274.8,868.7 L273.4,868.1 L271.7,868.0 L268.6,867.2 L266.8,866.5 L266.2,864.5 L264.5,862.8 L264.2,861.6 L263.3,860.8 L262.1,859.0 L258.5,858.1 L257.0,858.0 L256.2,857.3 L253.7,857.9 L251.2,856.9 L250.5,857.6 L247.6,856.3 L246.0,857.1 L243.6,857.5 L241.4,856.5 L237.8,856.2 L236.0,856.5 L233.1,855.9 L231.4,856.5 L228.7,857.1 L226.9,855.5 L224.3,856.7 L222.1,856.5 L219.6,855.8 L219.1,856.1 L217.2,855.4 L215.4,855.8 L212.0,855.5 L208.9,855.3 L207.0,855.5 L205.1,854.2 L202.8,853.4 L202.3,853.0 L199.7,852.8 L198.8,853.1 L195.8,853.2 L193.4,852.8 L190.3,851.6 L188.9,853.1 L187.9,854.2 L186.8,856.4 L184.9,858.6 L183.5,861.7 L182.2,862.4 L180.9,862.6 L179.1,862.8 L176.8,863.6 L175.7,863.6 L173.4,862.8 L170.8,861.5 L169.3,862.4 L165.7,861.4 L163.8,861.8 L162.9,860.6 L160.7,861.3 L158.6,860.9 L156.1,859.5 L154.8,858.8 L152.0,859.4 L150.1,858.9 L147.5,857.4 L145.4,857.0 L144.2,856.8 L141.3,856.1 L139.0,856.2 L136.6,855.5 L134.0,856.5 L132.5,855.8 L130.2,855.3 L127.8,855.3 L125.7,854.9 L124.1,855.4 L121.1,856.1 L118.8,855.5 L117.7,855.3 L114.9,856.6 L113.3,855.7 L110.5,856.8 L108.4,857.4 L106.2,857.6 L104.7,856.7 L102.7,856.9 L101.4,857.4 L99.4,858.1 L97.6,858.9 L94.5,859.2 L92.9,860.2 L91.5,861.1 L89.2,862.9 L87.2,864.3 L85.8,865.1 L84.5,865.3 L82.6,865.5 L81.2,866.4 L78.7,866.7 L77.0,865.6 L74.7,864.3 L73.3,862.8 L71.4,860.8 L69.6,859.8 L67.5,859.8 L66.3,859.1 L64.1,859.3 L63.2,860.7 L61.2,862.0 L58.1,862.3 L56.0,864.3 L55.2,865.0 L53.0,866.3 L51.4,866.4 L49.6,865.7 L47.9,864.9 L45.7,863.4 L43.1,863.1 L42.2,861.3 L39.8,859.8 L37.3,858.2 L35.7,857.6 L34.1,857.1 L31.8,856.2 L30.8,855.3 L29.1,855.4 L26.5,854.8 L24.9,854.2 L22.3,854.7 L20.0,853.6 L18.6,854.9 L15.5,853.8 L14.3,854.8 L11.0,854.3 L10.0,854.8 L6.8,855.4 L4.6,855.8 L3.4,854.8 L1.6,855.5 L0.0,855.8 L-40,855.8 L-40,0 Z" transform="translate(6,7)" fill="#5a5a5a" filter="url(#sh)"/><path d="M0,0 L1659.0,0.0 L1657.4,0.2 L1656.0,1.2 L1653.7,3.0 L1651.1,4.8 L1650.6,6.7 L1649.5,8.5 L1649.6,10.2 L1650.4,13.9 L1650.4,15.4 L1651.7,18.8 L1652.0,20.0 L1653.7,22.5 L1656.2,23.9 L1655.6,26.8 L1655.1,27.5 L1652.0,28.2 L1649.9,30.4 L1647.3,31.1 L1645.9,31.9 L1644.4,32.8 L1644.0,35.0 L1643.8,35.7 L1645.9,37.3 L1646.8,38.9 L1648.8,39.8 L1651.3,42.0 L1652.5,43.3 L1655.0,45.2 L1657.2,45.7 L1659.3,46.9 L1659.7,49.2 L1660.7,50.0 L1660.5,52.3 L1659.3,54.7 L1658.9,56.4 L1657.8,57.9 L1657.0,60.0 L1658.4,61.7 L1660.1,63.0 L1662.7,65.2 L1664.3,66.2 L1665.4,67.7 L1667.0,68.8 L1667.1,71.2 L1666.5,71.6 L1664.4,73.7 L1661.9,75.1 L1660.7,77.0 L1658.8,77.6 L1656.9,79.8 L1655.1,80.3 L1653.4,82.7 L1650.9,83.4 L1649.9,85.5 L1648.9,86.9 L1647.0,87.5 L1647.0,89.0 L1647.1,90.9 L1649.1,91.0 L1649.3,92.3 L1651.2,93.9 L1653.7,94.8 L1654.8,96.3 L1657.4,97.9 L1660.1,99.5 L1660.7,100.7 L1662.0,102.8 L1663.5,104.0 L1665.1,107.5 L1666.2,109.8 L1666.3,111.5 L1666.5,114.0 L1666.7,115.1 L1667.4,117.4 L1666.2,118.5 L1665.0,119.4 L1662.6,120.4 L1660.7,121.6 L1658.3,123.3 L1657.0,124.0 L1655.5,124.6 L1652.9,126.2 L1651.0,127.2 L1649.6,130.1 L1647.0,130.8 L1644.8,131.8 L1644.1,133.8 L1644.0,136.0 L1644.7,136.9 L1644.1,139.6 L1645.8,139.9 L1647.1,141.4 L1648.4,144.6 L1650.5,145.9 L1651.1,147.1 L1652.5,149.4 L1654.6,151.2 L1655.6,151.9 L1657.0,154.0 L1658.7,156.7 L1660.1,158.3 L1661.4,160.1 L1661.7,161.7 L1663.0,162.7 L1663.5,165.0 L1664.6,167.5 L1666.3,169.0 L1665.7,171.0 L1666.2,173.7 L1665.7,174.6 L1663.8,176.2 L1662.8,178.1 L1662.3,181.1 L1661.4,182.3 L1659.8,184.7 L1657.6,186.4 L1657.0,188.0 L1656.4,190.1 L1654.8,191.4 L1652.3,193.6 L1650.9,195.3 L1650.3,196.4 L1647.8,199.0 L1647.0,199.4 L1644.8,201.0 L1645.2,203.7 L1644.0,204.7 L1643.3,207.3 L1644.9,208.9 L1644.7,210.5 L1645.4,211.4 L1648.2,214.3 L1649.0,216.6 L1650.6,218.0 L1651.7,220.0 L1653.9,220.5 L1654.7,222.1 L1656.5,224.2 L1658.5,225.6 L1660.2,228.0 L1662.4,228.9 L1664.4,231.2 L1665.5,232.8 L1666.7,233.6 L1667.4,235.0 L1667.8,236.2 L1667.3,238.3 L1665.7,241.0 L1664.8,242.1 L1664.2,244.0 L1662.0,245.8 L1660.7,248.0 L1659.8,249.9 L1657.9,251.1 L1656.8,252.2 L1656.2,254.3 L1654.4,256.4 L1653.5,257.7 L1651.6,259.5 L1650.1,261.6 L1648.8,263.1 L1648.0,265.5 L1647.7,267.0 L1647.0,268.0 L1647.9,269.6 L1648.1,272.7 L1649.8,273.3 L1650.2,275.6 L1651.8,277.1 L1653.4,279.6 L1656.0,281.8 L1656.0,283.4 L1657.0,285.0 L1657.1,286.2 L1656.8,289.4 L1654.9,291.3 L1654.0,292.5 L1653.7,295.0 L1651.1,296.2 L1650.5,297.9 L1649.1,299.7 L1649.4,301.0 L1649.0,303.4 L1649.7,305.2 L1650.1,306.8 L1652.7,308.7 L1653.8,311.0 L1656.9,312.5 L1657.6,313.0 L1659.0,315.4 L1660.7,316.8 L1660.7,318.2 L1660.9,321.5 L1661.1,322.5 L1659.5,325.8 L1659.6,327.6 L1658.4,328.7 L1659.1,331.4 L1659.0,333.6 L1659.0,336.3 L1661.0,338.1 L1661.6,340.2 L1663.1,342.1 L1665.1,343.2 L1666.5,346.0 L1666.8,346.5 L1667.4,348.7 L1666.9,350.0 L1665.1,351.4 L1663.4,352.8 L1662.0,354.3 L1660.8,355.6 L1658.5,356.8 L1657.0,358.8 L1655.4,359.6 L1653.8,361.1 L1653.1,363.5 L1650.9,365.0 L1651.0,366.1 L1649.9,368.4 L1649.0,370.5 L1649.0,372.9 L1649.1,374.5 L1650.1,377.5 L1650.2,379.5 L1651.6,381.5 L1652.1,383.2 L1652.4,384.9 L1654.0,387.3 L1654.5,389.7 L1656.2,390.6 L1657.5,393.2 L1660.2,394.4 L1660.7,395.3 L1662.3,397.4 L1663.2,399.2 L1664.2,401.2 L1665.5,404.0 L1667.6,405.4 L1667.0,408.0 L1667.4,409.0 L1666.3,410.6 L1664.2,412.4 L1663.0,414.1 L1660.4,415.8 L1659.0,417.5 L1656.7,418.7 L1655.3,420.5 L1653.7,421.5 L1652.7,423.5 L1651.8,425.8 L1650.6,427.6 L1650.2,429.9 L1649.5,432.3 L1648.4,433.6 L1649.0,435.6 L1648.4,438.8 L1648.0,441.0 L1647.4,443.5 L1649.1,445.2 L1649.3,447.6 L1648.9,449.3 L1650.0,452.0 L1650.8,454.2 L1650.7,456.4 L1650.6,457.8 L1650.5,460.4 L1649.0,461.5 L1647.8,464.2 L1646.7,467.1 L1646.5,468.8 L1646.0,471.0 L1645.6,472.9 L1645.9,474.0 L1647.0,477.1 L1647.3,478.7 L1648.6,479.9 L1649.8,482.1 L1649.8,484.0 L1651.8,485.7 L1652.3,488.0 L1653.6,490.8 L1654.3,491.9 L1655.3,494.3 L1656.7,496.2 L1657.2,497.2 L1656.8,499.3 L1657.3,501.4 L1656.9,502.6 L1655.2,503.5 L1652.6,505.1 L1651.7,507.0 L1649.8,507.6 L1648.1,509.5 L1647.2,511.5 L1646.9,512.5 L1647.6,514.4 L1647.8,517.5 L1646.6,518.8 L1648.3,521.7 L1648.2,522.7 L1648.3,526.0 L1648.9,527.6 L1649.4,529.6 L1650.6,531.6 L1652.1,533.0 L1652.8,535.5 L1654.0,537.7 L1654.1,539.9 L1655.7,540.5 L1656.1,543.2 L1657.7,544.9 L1658.0,547.0 L1658.7,550.0 L1659.0,551.7 L1657.9,553.9 L1658.8,554.7 L1658.2,557.7 L1657.3,559.1 L1655.4,561.4 L1655.4,563.9 L1653.2,565.8 L1651.9,567.3 L1650.5,570.6 L1649.7,572.8 L1648.7,573.6 L1648.3,575.2 L1647.4,578.0 L1647.2,578.6 L1647.4,582.5 L1647.7,584.6 L1649.6,585.3 L1650.6,586.7 L1652.3,587.0 L1654.0,588.5 L1656.0,589.6 L1657.1,589.6 L1659.9,591.0 L1660.7,593.4 L1661.5,594.7 L1662.2,597.0 L1664.2,598.1 L1664.5,600.1 L1665.1,602.4 L1665.1,604.3 L1665.5,607.8 L1666.0,609.0 L1665.7,611.9 L1665.9,614.3 L1664.5,614.7 L1663.2,616.4 L1662.3,618.3 L1661.0,620.5 L1660.2,623.4 L1659.2,624.6 L1657.3,626.7 L1656.0,628.4 L1654.4,630.1 L1654.8,631.7 L1653.2,634.2 L1653.2,635.1 L1652.3,637.0 L1652.0,639.1 L1653.1,641.6 L1655.4,644.1 L1656.9,644.4 L1657.3,647.2 L1660.2,648.5 L1660.7,650.5 L1661.7,651.7 L1662.2,655.2 L1663.7,657.1 L1664.5,658.2 L1663.5,660.2 L1664.3,663.4 L1664.0,665.6 L1664.3,667.7 L1663.2,669.6 L1662.0,671.1 L1660.4,673.4 L1659.6,675.6 L1659.2,676.7 L1657.2,678.7 L1656.9,681.5 L1655.1,682.6 L1654.8,685.5 L1654.0,687.4 L1653.2,688.8 L1652.9,690.4 L1651.8,692.9 L1652.2,695.1 L1651.5,696.7 L1649.9,698.2 L1650.6,700.9 L1649.2,701.7 L1649.2,704.8 L1648.9,706.2 L1649.2,709.4 L1649.0,710.9 L1648.8,712.0 L1649.3,714.5 L1650.4,716.1 L1651.3,719.0 L1651.5,720.3 L1653.1,722.6 L1653.7,724.6 L1653.5,727.5 L1654.5,730.0 L1655.5,730.8 L1655.7,733.3 L1657.0,736.1 L1656.5,737.2 L1656.8,740.0 L1657.3,741.0 L1656.4,742.4 L1655.5,745.0 L1655.8,747.8 L1654.3,750.0 L1653.2,750.8 L1650.5,753.6 L1650.0,753.9 L1648.5,756.2 L1646.9,757.8 L1645.7,758.9 L1645.3,761.1 L1645.6,762.9 L1646.8,764.1 L1648.0,765.8 L1648.6,768.3 L1651.2,769.1 L1652.0,770.5 L1654.6,772.6 L1656.3,773.1 L1659.2,774.0 L1659.7,776.8 L1660.7,778.0 L1661.4,779.1 L1660.3,781.0 L1661.4,783.2 L1660.7,786.3 L1659.4,787.3 L1659.6,789.9 L1657.6,792.2 L1656.9,793.5 L1655.5,796.4 L1655.6,798.0 L1655.4,800.3 L1654.4,801.4 L1652.0,804.2 L1651.9,807.2 L1649.7,808.2 L1648.7,810.7 L1648.5,812.2 L1647.7,815.1 L1647.5,817.0 L1647.2,818.3 L1648.1,819.5 L1649.0,820.9 L1651.5,821.8 L1652.6,824.1 L1654.9,824.2 L1656.8,826.1 L1659.5,827.9 L1662.5,829.0 L1663.2,828.7 L1664.3,830.5 L1665.7,831.7 L1666.3,833.6 L1665.2,835.6 L1664.8,838.0 L1663.5,840.3 L1661.6,841.1 L1659.9,843.1 L1657.3,845.0 L1655.9,845.7 L1654.3,846.2 L1651.6,846.9 L1649.3,848.5 L1647.8,848.1 L1645.3,849.7 L1643.3,849.0 L1641.7,850.2 L1640.1,850.0 L1637.7,851.4 L1635.9,853.2 L1635.2,854.8 L1632.9,855.4 L1632.1,856.8 L1632.2,859.0 L1630.4,860.3 L1627.2,861.9 L1626.4,862.4 L1623.8,863.6 L1623.1,863.3 L1620.6,864.8 L1617.9,865.1 L1615.6,865.6 L1613.6,867.0 L1612.0,867.0 L1608.7,867.9 L1607.5,868.2 L1604.7,868.8 L1603.4,869.8 L1600.2,869.5 L1598.9,870.5 L1597.5,869.9 L1595.8,870.6 L1592.9,870.5 L1591.8,868.7 L1590.7,868.3 L1589.8,866.0 L1588.9,864.0 L1588.2,863.4 L1585.0,861.1 L1581.8,861.2 L1580.8,860.8 L1578.1,862.0 L1577.1,862.1 L1575.3,862.4 L1573.5,861.6 L1570.7,862.5 L1569.6,863.5 L1566.5,863.5 L1564.7,863.8 L1562.0,863.9 L1560.2,865.5 L1557.2,865.3 L1555.9,866.6 L1552.6,865.8 L1551.4,867.7 L1548.3,866.7 L1546.7,867.8 L1544.4,868.6 L1542.1,868.3 L1540.0,868.8 L1537.4,870.2 L1536.2,869.5 L1533.4,870.1 L1532.3,870.2 L1530.2,870.1 L1529.5,870.6 L1526.0,870.8 L1523.1,868.9 L1523.6,866.3 L1523.3,864.5 L1521.8,863.3 L1519.0,861.9 L1517.7,861.3 L1515.7,861.4 L1513.9,861.3 L1511.9,860.7 L1509.1,860.8 L1507.6,860.0 L1505.7,860.7 L1502.8,859.6 L1500.5,859.3 L1497.5,859.7 L1495.1,859.5 L1493.5,858.7 L1491.5,858.6 L1489.6,859.6 L1487.3,858.2 L1485.6,858.5 L1484.0,858.4 L1481.9,856.9 L1480.1,857.1 L1478.8,855.6 L1476.9,854.6 L1476.0,853.5 L1474.4,851.6 L1470.1,852.1 L1469.2,852.9 L1466.4,852.2 L1465.8,852.1 L1464.2,852.6 L1462.1,852.8 L1459.5,854.5 L1456.9,853.9 L1455.1,854.5 L1452.0,854.9 L1449.9,856.6 L1448.3,857.1 L1445.1,857.5 L1442.6,857.7 L1441.1,858.0 L1439.1,858.9 L1436.3,859.9 L1433.3,860.6 L1432.0,860.1 L1430.2,860.3 L1428.5,861.2 L1425.7,861.8 L1424.1,861.1 L1423.0,861.1 L1421.2,861.9 L1418.1,861.3 L1415.7,861.5 L1414.4,859.6 L1413.1,857.0 L1411.5,855.7 L1410.6,854.9 L1407.3,854.2 L1405.8,854.7 L1403.6,853.4 L1402.6,853.0 L1399.6,853.4 L1397.7,853.3 L1395.7,853.6 L1394.0,852.9 L1391.8,853.3 L1388.6,854.0 L1386.4,852.7 L1383.7,853.6 L1382.6,853.8 L1379.5,853.1 L1376.5,853.8 L1375.2,853.5 L1373.1,853.8 L1371.5,854.5 L1368.5,855.0 L1366.3,854.6 L1365.4,854.9 L1362.8,855.1 L1360.1,856.9 L1358.2,857.6 L1358.1,858.1 L1355.4,860.1 L1354.5,861.4 L1353.6,861.9 L1351.4,863.4 L1349.4,865.4 L1348.9,866.1 L1345.8,867.1 L1344.4,867.1 L1343.1,867.3 L1341.2,867.4 L1338.3,867.0 L1336.2,866.9 L1334.1,868.0 L1332.4,868.1 L1330.1,867.0 L1327.5,867.1 L1325.6,867.0 L1322.4,867.0 L1321.3,866.0 L1319.0,865.4 L1315.9,865.5 L1314.8,866.3 L1313.0,865.0 L1311.5,864.7 L1309.5,864.7 L1306.0,864.4 L1304.7,862.9 L1303.4,862.0 L1302.1,860.4 L1301.2,859.2 L1299.0,857.7 L1297.0,857.4 L1295.0,856.2 L1292.1,856.1 L1289.4,856.1 L1287.1,854.3 L1284.8,855.5 L1283.1,854.2 L1281.6,854.9 L1278.9,855.3 L1279.1,858.3 L1277.9,860.6 L1274.6,861.9 L1272.5,862.4 L1271.4,863.2 L1270.3,863.7 L1267.2,864.1 L1266.5,864.6 L1263.0,863.8 L1260.7,863.8 L1259.6,865.3 L1257.0,865.6 L1254.8,864.9 L1251.8,864.6 L1250.7,864.7 L1248.1,864.9 L1246.6,864.7 L1243.8,863.6 L1242.3,863.3 L1240.6,861.3 L1239.9,860.1 L1238.0,858.6 L1235.1,856.6 L1234.2,855.6 L1232.4,854.1 L1231.0,852.1 L1229.8,851.1 L1227.4,851.4 L1226.1,851.0 L1223.0,851.5 L1222.4,853.5 L1219.4,853.8 L1218.3,855.4 L1215.9,856.2 L1214.2,858.1 L1212.1,859.5 L1210.2,859.5 L1208.9,860.9 L1206.0,861.8 L1204.7,861.9 L1202.0,862.3 L1200.9,861.9 L1198.6,860.6 L1196.0,859.8 L1194.5,858.4 L1192.2,857.2 L1189.0,856.6 L1188.0,856.1 L1185.1,856.0 L1183.1,854.8 L1181.8,855.1 L1180.3,854.9 L1179.1,856.1 L1177.2,857.3 L1175.9,860.3 L1176.0,862.6 L1174.6,864.7 L1174.9,867.4 L1173.1,869.3 L1173.4,870.5 L1171.6,871.7 L1169.7,871.3 L1169.0,871.4 L1166.5,868.9 L1165.0,867.5 L1163.7,865.5 L1161.5,863.7 L1160.6,863.1 L1157.3,862.4 L1155.9,861.2 L1153.6,861.2 L1153.2,862.4 L1150.9,862.7 L1148.2,864.1 L1146.1,864.6 L1144.6,865.6 L1142.6,868.0 L1141.1,868.7 L1139.0,869.6 L1136.3,870.5 L1134.9,870.6 L1132.8,870.9 L1131.6,870.0 L1129.1,869.9 L1126.8,868.3 L1125.3,868.4 L1123.4,867.2 L1121.5,866.2 L1119.3,865.0 L1117.0,864.5 L1114.9,863.7 L1114.0,863.6 L1111.9,864.3 L1109.3,864.6 L1106.9,866.4 L1105.4,867.7 L1103.7,869.5 L1101.7,869.0 L1100.0,868.5 L1100.5,866.6 L1099.7,865.7 L1098.1,863.1 L1096.4,861.7 L1093.4,859.8 L1092.8,859.5 L1090.0,859.4 L1089.1,859.3 L1087.2,858.9 L1085.8,858.5 L1083.1,858.9 L1080.7,858.3 L1078.7,858.2 L1076.0,858.3 L1074.0,856.6 L1071.5,857.0 L1068.7,856.8 L1067.0,857.1 L1064.5,856.2 L1062.0,856.8 L1060.9,856.4 L1057.5,856.7 L1055.6,855.6 L1053.2,856.4 L1052.4,856.1 L1050.0,856.0 L1048.0,856.6 L1047.0,855.8 L1043.5,856.1 L1041.9,856.7 L1039.7,856.3 L1038.6,856.6 L1037.9,857.5 L1036.4,857.9 L1033.4,858.4 L1030.5,859.1 L1028.9,858.7 L1026.5,859.6 L1025.1,858.9 L1023.1,859.3 L1021.2,859.5 L1019.4,859.1 L1017.6,859.9 L1013.8,859.8 L1012.8,859.7 L1009.2,859.8 L1007.6,858.5 L1004.2,859.9 L1002.8,858.8 L999.7,858.7 L997.7,859.7 L995.7,858.7 L994.6,859.8 L991.5,860.0 L990.5,860.0 L989.0,860.3 L987.4,859.8 L985.0,861.5 L984.2,862.8 L985.3,864.6 L983.6,866.3 L977.4,866.4 L976.3,866.0 L974.5,865.9 L973.5,865.7 L972.0,865.9 L970.4,866.4 L968.7,867.0 L966.1,867.0 L964.9,866.5 L963.3,866.9 L960.8,866.2 L959.6,865.6 L957.0,866.4 L953.8,866.3 L952.6,866.8 L949.7,866.8 L947.7,865.9 L945.9,865.1 L943.2,865.9 L940.2,866.2 L937.8,865.5 L935.6,865.9 L932.7,865.2 L930.6,865.3 L928.8,864.8 L926.4,864.8 L923.4,864.5 L921.1,865.5 L919.0,865.1 L916.1,864.2 L913.8,864.5 L912.2,864.7 L909.1,864.4 L908.3,864.0 L904.9,863.4 L902.9,863.1 L902.5,863.6 L900.3,863.8 L899.0,863.3 L896.9,863.2 L895.5,863.0 L894.1,862.2 L892.7,862.5 L891.3,862.4 L885.7,860.4 L881.9,858.5 L882.2,858.0 L882.3,855.3 L882.8,854.4 L881.3,853.1 L879.4,852.5 L876.8,852.9 L874.6,853.4 L872.9,855.0 L869.6,855.4 L868.1,856.4 L865.7,856.8 L865.4,859.0 L863.9,860.4 L860.9,861.9 L860.2,864.4 L859.1,865.0 L856.5,865.3 L854.8,866.4 L853.3,865.8 L850.7,864.9 L848.6,865.0 L846.9,864.4 L844.9,862.9 L843.1,860.3 L842.2,859.4 L840.4,858.3 L838.3,858.1 L835.1,857.7 L833.8,857.2 L831.6,855.4 L829.3,856.2 L826.9,856.6 L825.0,856.4 L823.0,858.1 L822.4,858.2 L819.9,861.1 L819.9,862.1 L817.8,864.9 L816.1,866.4 L815.1,866.4 L813.4,865.4 L811.5,865.4 L809.9,864.2 L807.6,862.9 L806.0,861.0 L804.3,859.1 L801.8,858.1 L799.9,857.9 L798.9,857.1 L796.3,855.6 L793.5,855.9 L792.4,855.0 L789.7,854.0 L788.7,853.9 L786.0,852.8 L783.8,853.6 L782.0,853.1 L780.1,853.9 L779.1,855.1 L778.4,855.3 L776.2,856.7 L775.7,858.7 L774.8,860.6 L771.4,861.8 L769.8,862.9 L765.4,863.1 L764.2,862.9 L763.1,863.9 L761.2,864.2 L758.9,863.0 L757.4,864.2 L754.8,864.2 L754.0,863.5 L751.3,864.3 L748.9,863.6 L746.2,864.5 L744.8,864.1 L741.3,864.7 L740.0,863.8 L737.3,864.8 L735.3,864.2 L732.2,864.3 L729.3,863.7 L726.9,864.4 L724.8,864.2 L722.6,864.1 L719.9,863.3 L719.0,863.7 L715.4,864.1 L714.4,863.2 L712.1,863.5 L710.1,862.9 L707.5,864.3 L707.2,863.4 L705.2,862.9 L704.1,863.1 L702.4,863.1 L698.4,862.7 L695.7,861.8 L693.7,858.9 L693.4,857.7 L692.9,856.1 L692.5,855.8 L690.6,855.5 L688.4,854.8 L687.2,852.8 L684.7,853.0 L682.5,853.1 L680.0,854.0 L678.3,853.9 L677.0,855.2 L675.1,855.2 L672.6,856.4 L671.1,856.8 L670.7,859.4 L668.3,859.2 L666.9,861.1 L666.0,863.3 L663.3,863.1 L659.3,864.7 L658.3,865.3 L656.5,865.9 L653.8,864.8 L653.0,866.3 L650.8,865.4 L648.6,866.3 L645.6,865.8 L643.5,865.6 L641.5,865.8 L638.8,865.9 L637.1,865.7 L634.8,866.1 L631.3,867.3 L629.3,867.4 L628.1,867.3 L624.8,866.6 L622.6,867.4 L621.9,866.9 L619.4,866.3 L618.3,866.5 L616.3,866.4 L613.3,865.4 L610.2,864.5 L609.1,864.4 L606.6,864.0 L605.4,862.2 L603.6,861.0 L602.8,860.2 L599.7,859.8 L597.4,859.5 L595.8,859.8 L593.5,859.6 L591.2,859.2 L590.0,857.9 L587.5,857.8 L584.8,857.4 L582.7,858.5 L581.4,858.2 L577.7,857.1 L576.7,856.6 L574.3,856.9 L572.6,856.4 L569.9,857.1 L568.0,856.8 L564.6,856.3 L563.4,857.2 L560.2,857.2 L559.2,856.9 L556.5,857.0 L553.9,858.2 L552.7,857.6 L549.7,857.7 L548.7,858.7 L546.7,859.1 L544.2,859.3 L542.7,861.0 L541.1,861.9 L538.3,862.1 L537.3,863.8 L535.6,864.2 L534.0,865.5 L532.4,866.8 L530.2,866.4 L528.2,865.2 L527.1,865.0 L525.4,863.4 L522.6,862.8 L521.1,860.1 L519.1,859.4 L516.9,858.1 L514.3,857.5 L513.1,856.9 L510.4,856.5 L509.3,856.2 L506.2,855.3 L503.9,854.8 L501.1,854.6 L500.3,853.6 L497.5,853.3 L495.5,852.4 L493.7,853.1 L492.1,853.0 L488.8,853.5 L487.1,855.7 L485.1,855.7 L484.5,857.0 L481.7,858.6 L480.5,859.1 L478.7,859.5 L476.9,859.2 L475.0,860.5 L471.6,859.8 L470.1,860.5 L467.7,859.8 L465.8,859.6 L463.9,859.8 L462.2,859.6 L459.7,858.1 L459.0,856.1 L457.5,855.8 L455.1,853.5 L453.9,852.4 L451.2,851.9 L449.0,850.5 L447.7,849.9 L444.8,849.7 L443.0,850.5 L441.4,850.3 L439.1,850.2 L435.5,849.7 L434.7,850.5 L431.3,849.9 L429.7,850.0 L427.5,849.9 L425.6,851.0 L424.1,851.5 L421.1,852.1 L421.0,854.8 L419.6,856.6 L418.3,859.0 L417.3,859.6 L415.8,861.6 L414.2,863.1 L412.2,863.6 L409.7,865.0 L407.4,863.8 L404.9,863.6 L402.6,863.1 L401.6,861.9 L398.9,861.2 L397.0,859.7 L396.7,858.1 L394.0,856.7 L392.6,855.8 L390.4,854.5 L387.3,853.8 L385.1,854.0 L382.8,853.8 L381.0,854.8 L378.8,856.1 L378.6,858.1 L376.8,860.4 L374.9,862.6 L374.1,864.0 L372.8,864.7 L371.7,864.1 L370.4,862.0 L369.2,860.3 L367.6,858.4 L364.5,857.1 L362.3,856.7 L362.0,856.4 L359.7,856.7 L357.2,857.5 L355.1,857.1 L352.6,856.0 L351.4,856.7 L347.7,856.7 L345.9,857.4 L343.0,856.7 L342.0,857.8 L338.5,857.4 L336.6,858.2 L335.0,858.9 L333.5,858.7 L331.3,859.1 L329.5,860.4 L327.8,861.1 L326.4,862.9 L325.4,863.4 L324.3,864.8 L322.9,867.3 L321.2,869.3 L319.7,869.6 L317.9,871.4 L314.8,871.4 L313.5,871.4 L311.5,871.6 L310.1,871.5 L307.6,871.9 L305.5,871.5 L304.0,872.3 L301.3,871.6 L298.5,871.2 L296.1,871.5 L294.4,870.5 L292.5,870.7 L290.0,871.3 L287.9,870.0 L284.7,870.9 L281.8,869.2 L280.6,869.6 L279.1,869.7 L276.6,869.8 L274.8,868.7 L273.4,868.1 L271.7,868.0 L268.6,867.2 L266.8,866.5 L266.2,864.5 L264.5,862.8 L264.2,861.6 L263.3,860.8 L262.1,859.0 L258.5,858.1 L257.0,858.0 L256.2,857.3 L253.7,857.9 L251.2,856.9 L250.5,857.6 L247.6,856.3 L246.0,857.1 L243.6,857.5 L241.4,856.5 L237.8,856.2 L236.0,856.5 L233.1,855.9 L231.4,856.5 L228.7,857.1 L226.9,855.5 L224.3,856.7 L222.1,856.5 L219.6,855.8 L219.1,856.1 L217.2,855.4 L215.4,855.8 L212.0,855.5 L208.9,855.3 L207.0,855.5 L205.1,854.2 L202.8,853.4 L202.3,853.0 L199.7,852.8 L198.8,853.1 L195.8,853.2 L193.4,852.8 L190.3,851.6 L188.9,853.1 L187.9,854.2 L186.8,856.4 L184.9,858.6 L183.5,861.7 L182.2,862.4 L180.9,862.6 L179.1,862.8 L176.8,863.6 L175.7,863.6 L173.4,862.8 L170.8,861.5 L169.3,862.4 L165.7,861.4 L163.8,861.8 L162.9,860.6 L160.7,861.3 L158.6,860.9 L156.1,859.5 L154.8,858.8 L152.0,859.4 L150.1,858.9 L147.5,857.4 L145.4,857.0 L144.2,856.8 L141.3,856.1 L139.0,856.2 L136.6,855.5 L134.0,856.5 L132.5,855.8 L130.2,855.3 L127.8,855.3 L125.7,854.9 L124.1,855.4 L121.1,856.1 L118.8,855.5 L117.7,855.3 L114.9,856.6 L113.3,855.7 L110.5,856.8 L108.4,857.4 L106.2,857.6 L104.7,856.7 L102.7,856.9 L101.4,857.4 L99.4,858.1 L97.6,858.9 L94.5,859.2 L92.9,860.2 L91.5,861.1 L89.2,862.9 L87.2,864.3 L85.8,865.1 L84.5,865.3 L82.6,865.5 L81.2,866.4 L78.7,866.7 L77.0,865.6 L74.7,864.3 L73.3,862.8 L71.4,860.8 L69.6,859.8 L67.5,859.8 L66.3,859.1 L64.1,859.3 L63.2,860.7 L61.2,862.0 L58.1,862.3 L56.0,864.3 L55.2,865.0 L53.0,866.3 L51.4,866.4 L49.6,865.7 L47.9,864.9 L45.7,863.4 L43.1,863.1 L42.2,861.3 L39.8,859.8 L37.3,858.2 L35.7,857.6 L34.1,857.1 L31.8,856.2 L30.8,855.3 L29.1,855.4 L26.5,854.8 L24.9,854.2 L22.3,854.7 L20.0,853.6 L18.6,854.9 L15.5,853.8 L14.3,854.8 L11.0,854.3 L10.0,854.8 L6.8,855.4 L4.6,855.8 L3.4,854.8 L1.6,855.5 L0.0,855.8 L-40,855.8 L-40,0 Z" fill="none" stroke="#333" stroke-width="1.2"/></g>
</svg>
<svg style="position:absolute;left:1650px;top:420px" width="14" height="14"><circle cx="7" cy="6.5" r="2.6" fill="#fff" stroke="#111" stroke-width="1.4"/></svg>
<svg style="position:absolute;left:1650px;top:490px" width="12" height="12"><path d="M4 3.5 h4 M4 3.5 v3 h3.5 v3 h-3.5" stroke="#2020c0" stroke-width="1.3" fill="none"/></svg>
</body></html>
